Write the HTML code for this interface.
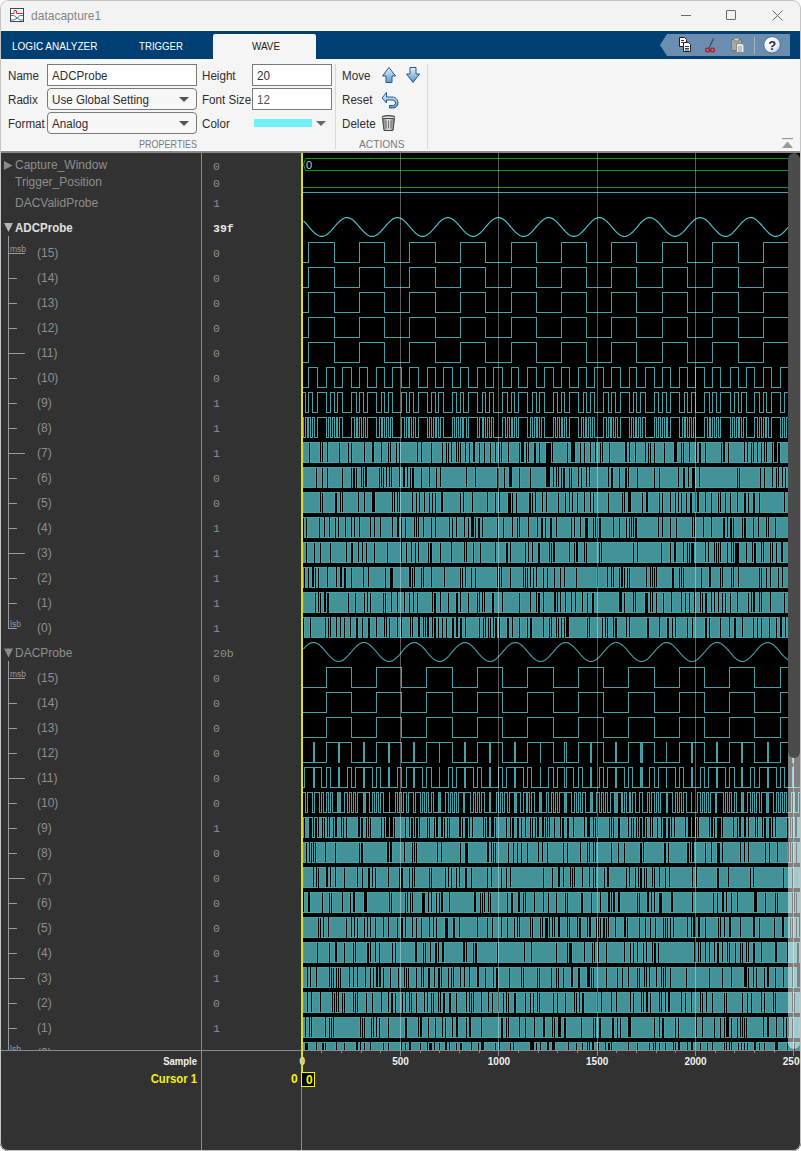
<!DOCTYPE html>
<html><head><meta charset="utf-8">
<style>
*{box-sizing:border-box;margin:0;padding:0}
html,body{width:801px;height:1151px;overflow:hidden;background:#ffffff}
body{position:relative;font-family:"Liberation Sans",sans-serif}
.a{position:absolute}
#win{position:absolute;left:0;top:0;width:801px;height:1151px;border-radius:8px;overflow:hidden;background:#f3f3f3}
#bd{position:absolute;left:0;top:0;width:801px;height:1151px;border:1px solid #c4c4c4;border-radius:8px}
.sx{transform:scaleX(0.93);transform-origin:0 0}
.t{position:absolute;white-space:nowrap;line-height:1}
.lbl{font-size:12.5px;color:#2e2e2e;transform:scaleX(0.93);transform-origin:0 0}
.box{position:absolute;background:#fff;border:1px solid #7a7a7a}
.dd{position:absolute;background:#f7f7f7;border:1px solid #7a7a7a;border-radius:4px}
.arr{position:absolute;width:0;height:0;border-left:5px solid transparent;border-right:5px solid transparent;border-top:5px solid #555}
.sig{font-size:12px;color:#8e8e8e}
.bit{font-size:12px;color:#8e8e8e}
.val{font-family:"Liberation Mono",monospace;font-size:11.5px;color:#8e8e8e}
</style></head><body>
<div id="win">
 <!-- title bar -->
 <svg class="a" style="left:10px;top:8px" width="15" height="14" viewBox="0 0 15 14">
  <rect x="0.5" y="0.5" width="13" height="13" fill="#fff" stroke="#444"/>
  <path d="M1 5.5H4V2.5H6.5V5.5H13" stroke="#d03a30" fill="none" stroke-width="1"/>
  <path d="M1 7.5H4L7 10L10 7.5H13M1 12H4L7 10L10 12H13" stroke="#3d7cc8" fill="none" stroke-width="1"/>
 </svg>
 <div class="t" style="left:31px;top:10px;font-size:12.8px;color:#858585;transform:scaleX(0.94);transform-origin:0 0">datacapture1</div>
 <div class="a" style="left:681px;top:15px;width:10px;height:1px;background:#6a6a6a"></div>
 <div class="a" style="left:726px;top:10px;width:10px;height:10px;border:1px solid #6a6a6a;border-radius:1px"></div>
 <svg class="a" style="left:772px;top:10px" width="11" height="11"><path d="M0.5 0.5L10.5 10.5M10.5 0.5L0.5 10.5" stroke="#6a6a6a" stroke-width="1"/></svg>

 <!-- tab strip -->
 <div class="a" style="left:0;top:30px;width:801px;height:1px;background:#fbfbfb"></div><div class="a" style="left:0;top:31px;width:801px;height:28px;background:#003f74"></div>
 <div class="t" style="left:12px;top:41px;font-size:11.5px;color:#fff;transform:scaleX(0.87);transform-origin:0 0">LOGIC ANALYZER</div>
 <div class="t" style="left:139px;top:41px;font-size:11.5px;color:#fff;transform:scaleX(0.84);transform-origin:0 0">TRIGGER</div>
 <div class="a" style="left:213px;top:34px;width:103px;height:25px;background:#f5f5f5;border-radius:2px 2px 0 0"></div>
 <div class="t" style="left:252px;top:41px;font-size:11.5px;color:#222;transform:scaleX(0.86);transform-origin:0 0">WAVE</div>
 <!-- quick access -->
 <svg class="a" style="left:659px;top:34px" width="132" height="22">
  <path d="M1 11L8 0H131V22H8Z" fill="#6a8db0"/>
  <g transform="translate(20,3)">
   <path d="M0.5 0.5H5.5L7.5 2.5V9.5H0.5Z" fill="#fff" stroke="#222"/>
   <path d="M4.5 5.5H9.5L11.5 7.5V14.5H4.5Z" fill="#fff" stroke="#222"/>
   <path d="M2 3.5H5M2 5.5H4M6 9.5H10M6 11.5H10M6 13H10" stroke="#222" stroke-width="0.9"/>
  </g>
  <g transform="translate(45,4)">
   <path d="M9.5 0.5L5 10" stroke="#444" stroke-width="1.2"/>
   <circle cx="3.5" cy="12" r="1.9" fill="none" stroke="#c0121e" stroke-width="1.3"/>
   <circle cx="8.5" cy="12" r="1.9" fill="none" stroke="#c0121e" stroke-width="1.3"/>
  </g>
  <g transform="translate(72,3)">
   <path d="M0.5 2.5H10.5V13.5H0.5Z" fill="#a8a8a8" stroke="#777"/>
   <path d="M3 1H8V4H3Z" fill="#ccc" stroke="#777" stroke-width="0.8"/>
   <path d="M5.5 6.5H11L13 8.5V15.5H5.5Z" fill="#e6e6e6" stroke="#888"/>
   <path d="M7 10H11M7 12H11M7 14H11" stroke="#888" stroke-width="0.8"/>
  </g>
  <rect x="95" y="3" width="1" height="17" fill="#adb3ba"/>
  <g transform="translate(104.6,2.4)">
   <defs><radialGradient id="hg" cx="0.35" cy="0.3" r="0.8"><stop offset="0" stop-color="#fff"/><stop offset="0.7" stop-color="#e8eef4"/><stop offset="1" stop-color="#9fb3c6"/></radialGradient></defs>
   <circle cx="8.5" cy="8.5" r="8.2" fill="url(#hg)" stroke="#3e5c7a" stroke-width="0.7"/>
   <text x="8.6" y="13.3" text-anchor="middle" font-family="Liberation Sans" font-weight="bold" font-size="13" fill="#1b2c44">?</text>
  </g>
 </svg>

 <!-- toolbar -->
 <div class="a" style="left:0;top:59px;width:801px;height:92px;background:#f5f5f5"></div>
 <div class="a" style="left:0;top:150px;width:801px;height:1px;background:#fff"></div>
 <div class="a" style="left:0;top:151px;width:801px;height:2px;background:#8a8a8a"></div>

 <div class="t lbl" style="left:8px;top:70px">Name</div>
 <div class="box" style="left:47px;top:64px;width:150px;height:22px"></div>
 <div class="t lbl" style="left:52px;top:70px">ADCProbe</div>
 <div class="t lbl" style="left:8px;top:94px">Radix</div>
 <div class="dd" style="left:47px;top:88px;width:150px;height:22px"></div>
 <div class="t lbl" style="left:52px;top:94px">Use Global Setting</div>
 <div class="arr" style="left:179px;top:97px"></div>
 <div class="t lbl" style="left:8px;top:118px">Format</div>
 <div class="dd" style="left:47px;top:112px;width:150px;height:22px"></div>
 <div class="t lbl" style="left:52px;top:118px">Analog</div>
 <div class="arr" style="left:179px;top:121px"></div>
 <div class="t" style="left:139px;top:139px;font-size:11px;color:#7a7a7a;transform:scaleX(0.82);transform-origin:0 0">PROPERTIES</div>

 <div class="t lbl" style="left:202px;top:70px">Height</div>
 <div class="box" style="left:252px;top:64px;width:80px;height:22px"></div>
 <div class="t lbl" style="left:257px;top:70px">20</div>
 <div class="t lbl" style="left:202px;top:94px">Font Size</div>
 <div class="box" style="left:252px;top:88px;width:80px;height:22px"></div>
 <div class="t lbl" style="left:257px;top:94px;color:#555">12</div>
 <div class="t lbl" style="left:202px;top:118px">Color</div>
 <div class="a" style="left:254px;top:119px;width:58px;height:8px;background:#6ef0fa"></div>
 <div class="arr" style="left:316px;top:121px;border-top-color:#666"></div>
 <div class="a" style="left:335px;top:64px;width:1px;height:85px;background:#d8d8d8"></div>
 <div class="t lbl" style="left:342px;top:70px">Move</div>
 <div class="t lbl" style="left:342px;top:94px">Reset</div>
 <div class="t lbl" style="left:342px;top:118px">Delete</div>
 <div class="t" style="left:359px;top:139px;font-size:11px;color:#7a7a7a;transform:scaleX(0.93);transform-origin:0 0">ACTIONS</div>
 <div class="a" style="left:427px;top:64px;width:1px;height:85px;background:#d8d8d8"></div>
 <svg class="a" style="left:378px;top:64px" width="48" height="70">
  <defs><linearGradient id="ab" x1="0" y1="0" x2="0" y2="1"><stop offset="0" stop-color="#e6f2fb"/><stop offset="1" stop-color="#5b9ccd"/></linearGradient>
  <linearGradient id="abd" x1="0" y1="0" x2="0" y2="1"><stop offset="0" stop-color="#eaf4fc"/><stop offset="1" stop-color="#4f8fc4"/></linearGradient>
  <linearGradient id="tr" x1="0" y1="0" x2="1" y2="0"><stop offset="0" stop-color="#777"/><stop offset="0.5" stop-color="#e8e8e8"/><stop offset="1" stop-color="#777"/></linearGradient></defs>
  <path d="M11 3.5L17.5 12H14V18.5H8V12H4.5Z" fill="url(#ab)" stroke="#24598a" stroke-width="1"/>
  <path d="M32 3.5H38V10H41.5L35 18.5L28.5 10H32Z" fill="url(#abd)" stroke="#24598a" stroke-width="1"/>
  <path d="M8.5 28.5L4 34L8.5 39V36H14C17 36 17.5 38 17.5 39C17.5 40.5 16.5 41.5 14.5 41.5H11.5V44H14.5C18 44 20 42 20 39C20 35.5 17.5 33 14 33H8.5Z" fill="url(#ab)" stroke="#24598a" stroke-width="1"/>
  <path d="M4 53.5C5 51 16 51 17 53.5" fill="#ddd" stroke="#444" stroke-width="1.2"/>
  <path d="M4.5 54.5H16.5L15 66.5H6Z" fill="url(#tr)" stroke="#444" stroke-width="1"/>
  <path d="M8 56.5V64.5M10.5 56.5V64.5M13 56.5V64.5" stroke="#555" stroke-width="0.8"/>
 </svg>
 <svg class="a" style="left:781px;top:138px" width="14" height="12"><rect x="1" y="0" width="11" height="1.2" fill="#9a9a9a"/><path d="M1 10L6.5 3.5L12 10Z" fill="#9a9a9a"/></svg>

 <!-- dark body -->
 <div class="a" style="left:0;top:153px;width:801px;height:998px;background:#323232"></div>
 <div class="a" style="left:201px;top:153px;width:1px;height:997px;background:#8c8c8c"></div>
 <div class="a" style="left:0;top:1050px;width:801px;height:1px;background:#8a8a8a"></div>
 <div class="a" style="left:301px;top:1086px;width:1px;height:64px;background:#8c8c8c"></div>

 <svg width="801" height="1151" style="position:absolute;left:0;top:0">
<defs><clipPath id="wc"><rect x="301" y="153" width="499" height="897"/></clipPath></defs><g clip-path="url(#wc)">
<rect x="301" y="153" width="499" height="897" fill="#000"/>
<path d="M303.5 164.5L305.5 158.5H800M303.5 164.5L305.5 170.5H800" stroke="#00a000" fill="none"/>
<text x="306" y="168.5" font-family="Liberation Sans" font-size="11" fill="#c8c8c8">0</text>
<path d="M303 187.5H800" stroke="#00a000"/>
<path d="M303 192.5H800" stroke="#45a2a8"/>
<polyline points="303.5,221.0 304.5,221.9 305.5,222.9 306.5,224.0 307.5,225.1 308.5,226.5 309.5,227.7 310.5,228.8 311.5,229.9 312.5,231.0 313.5,231.9 314.5,233.0 315.5,233.7 316.5,234.5 317.5,235.1 318.5,235.7 319.5,236.0 320.5,236.3 321.5,236.4 322.5,236.4 323.5,236.1 324.5,235.8 325.5,235.3 326.5,234.8 327.5,234.1 328.5,233.2 329.5,232.4 330.5,231.4 331.5,230.3 332.5,229.0 333.5,227.8 334.5,226.7 335.5,225.6 336.5,224.4 337.5,223.3 338.5,222.3 339.5,221.3 340.5,220.5 341.5,219.8 342.5,219.0 343.5,218.5 344.5,218.0 345.5,217.7 346.5,217.6 347.5,217.6 348.5,217.8 349.5,218.1 350.5,218.5 351.5,219.1 352.5,219.8 353.5,220.5 354.5,221.4 355.5,222.5 356.5,223.7 357.5,224.7 358.5,225.9 359.5,227.0 360.5,228.2 361.5,229.3 362.5,230.4 363.5,231.5 364.5,232.4 365.5,233.3 366.5,234.1 367.5,235.0 368.5,235.5 369.5,236.0 370.5,236.3 371.5,236.4 372.5,236.4 373.5,236.3 374.5,236.0 375.5,235.6 376.5,235.1 377.5,234.4 378.5,233.7 379.5,232.6 380.5,231.7 381.5,230.7 382.5,229.5 383.5,228.5 384.5,227.3 385.5,226.2 386.5,225.0 387.5,223.9 388.5,222.9 389.5,221.9 390.5,220.9 391.5,220.0 392.5,219.3 393.5,218.6 394.5,218.2 395.5,217.8 396.5,217.7 397.5,217.6 398.5,217.7 399.5,218.0 400.5,218.4 401.5,218.8 402.5,219.4 403.5,220.2 404.5,221.1 405.5,222.0 406.5,223.1 407.5,224.1 408.5,225.3 409.5,226.3 410.5,227.6 411.5,228.7 412.5,229.9 413.5,230.9 414.5,232.1 415.5,233.0 416.5,233.9 417.5,234.6 418.5,235.2 419.5,235.7 420.5,236.1 421.5,236.3 422.5,236.4 423.5,236.4 424.5,236.2 425.5,235.8 426.5,235.3 427.5,234.7 428.5,233.9 429.5,233.1 430.5,232.2 431.5,231.2 432.5,230.1 433.5,229.1 434.5,227.9 435.5,226.7 436.5,225.5 437.5,224.5 438.5,223.2 439.5,222.1 440.5,221.2 441.5,220.3 442.5,219.6 443.5,218.9 444.5,218.4 445.5,218.0 446.5,217.8 447.5,217.6 448.5,217.7 449.5,217.8 450.5,218.2 451.5,218.6 452.5,219.2 453.5,219.8 454.5,220.7 455.5,221.6 456.5,222.6 457.5,223.6 458.5,224.7 459.5,225.8 460.5,227.0 461.5,228.1 462.5,229.4 463.5,230.6 464.5,231.6 465.5,232.6 466.5,233.4 467.5,234.3 468.5,234.9 469.5,235.5 470.5,235.9 471.5,236.2 472.5,236.4 473.5,236.4 474.5,236.3 475.5,236.0 476.5,235.5 477.5,235.0 478.5,234.3 479.5,233.6 480.5,232.7 481.5,231.7 482.5,230.7 483.5,229.7 484.5,228.5 485.5,227.1 486.5,226.0 487.5,224.8 488.5,223.7 489.5,222.7 490.5,221.7 491.5,220.7 492.5,219.9 493.5,219.3 494.5,218.7 495.5,218.2 496.5,217.8 497.5,217.7 498.5,217.6 499.5,217.8 500.5,217.9 501.5,218.4 502.5,218.9 503.5,219.5 504.5,220.2 505.5,221.0 506.5,222.1 507.5,223.0 508.5,224.1 509.5,225.5 510.5,226.6 511.5,227.8 512.5,228.9 513.5,230.1 514.5,231.1 515.5,232.1 516.5,233.0 517.5,233.9 518.5,234.6 519.5,235.2 520.5,235.7 521.5,236.1 522.5,236.4 523.5,236.4 524.5,236.4 525.5,236.1 526.5,235.8 527.5,235.4 528.5,234.7 529.5,234.0 530.5,233.1 531.5,232.2 532.5,231.1 533.5,229.9 534.5,228.9 535.5,227.7 536.5,226.5 537.5,225.4 538.5,224.3 539.5,223.2 540.5,222.2 541.5,221.3 542.5,220.4 543.5,219.6 544.5,218.9 545.5,218.3 546.5,217.9 547.5,217.7 548.5,217.6 549.5,217.6 550.5,217.8 551.5,218.1 552.5,218.6 553.5,219.1 554.5,219.9 555.5,220.6 556.5,221.7 557.5,222.7 558.5,223.8 559.5,224.9 560.5,226.0 561.5,227.2 562.5,228.3 563.5,229.4 564.5,230.5 565.5,231.6 566.5,232.5 567.5,233.5 568.5,234.4 569.5,235.0 570.5,235.6 571.5,236.0 572.5,236.2 573.5,236.4 574.5,236.4 575.5,236.2 576.5,236.0 577.5,235.5 578.5,235.0 579.5,234.4 580.5,233.4 581.5,232.5 582.5,231.6 583.5,230.5 584.5,229.5 585.5,228.3 586.5,227.2 587.5,225.9 588.5,224.9 589.5,223.8 590.5,222.8 591.5,221.6 592.5,220.6 593.5,219.9 594.5,219.1 595.5,218.5 596.5,218.1 597.5,217.8 598.5,217.6 599.5,217.6 600.5,217.7 601.5,217.9 602.5,218.3 603.5,218.9 604.5,219.6 605.5,220.4 606.5,221.3 607.5,222.2 608.5,223.2 609.5,224.3 610.5,225.4 611.5,226.6 612.5,227.7 613.5,228.8 614.5,230.0 615.5,231.2 616.5,232.3 617.5,233.1 618.5,234.0 619.5,234.7 620.5,235.3 621.5,235.8 622.5,236.1 623.5,236.3 624.5,236.5 625.5,236.4 626.5,236.1 627.5,235.7 628.5,235.2 629.5,234.6 630.5,233.9 631.5,233.0 632.5,232.2 633.5,231.1 634.5,230.1 635.5,228.8 636.5,227.8 637.5,226.6 638.5,225.5 639.5,224.1 640.5,223.0 641.5,222.0 642.5,221.1 643.5,220.3 644.5,219.5 645.5,218.8 646.5,218.3 647.5,217.9 648.5,217.7 649.5,217.6 650.5,217.6 651.5,217.9 652.5,218.2 653.5,218.7 654.5,219.2 655.5,220.0 656.5,220.7 657.5,221.7 658.5,222.6 659.5,223.7 660.5,224.8 661.5,226.0 662.5,227.3 663.5,228.5 664.5,229.6 665.5,230.6 666.5,231.8 667.5,232.7 668.5,233.6 669.5,234.3 670.5,235.0 671.5,235.5 672.5,236.0 673.5,236.2 674.5,236.4 675.5,236.4 676.5,236.2 677.5,235.9 678.5,235.5 679.5,234.9 680.5,234.2 681.5,233.4 682.5,232.6 683.5,231.6 684.5,230.6 685.5,229.5 686.5,228.1 687.5,227.0 688.5,225.8 689.5,224.7 690.5,223.6 691.5,222.5 692.5,221.6 693.5,220.7 694.5,219.8 695.5,219.2 696.5,218.6 697.5,218.1 698.5,217.8 699.5,217.6 700.5,217.6 701.5,217.8 702.5,218.0 703.5,218.4 704.5,219.0 705.5,219.6 706.5,220.3 707.5,221.2 708.5,222.1 709.5,223.3 710.5,224.5 711.5,225.6 712.5,226.8 713.5,227.9 714.5,229.1 715.5,230.1 716.5,231.2 717.5,232.2 718.5,233.2 719.5,233.9 720.5,234.7 721.5,235.4 722.5,235.8 723.5,236.2 724.5,236.3 725.5,236.4 726.5,236.4 727.5,236.1 728.5,235.7 729.5,235.2 730.5,234.7 731.5,233.9 732.5,233.1 733.5,231.9 734.5,230.9 735.5,229.8 736.5,228.7 737.5,227.6 738.5,226.4 739.5,225.3 740.5,224.1 741.5,223.1 742.5,222.0 743.5,221.1 744.5,220.3 745.5,219.4 746.5,218.8 747.5,218.3 748.5,218.0 749.5,217.7 750.5,217.6 751.5,217.6 752.5,217.8 753.5,218.1 754.5,218.6 755.5,219.3 756.5,219.9 757.5,220.9 758.5,221.8 759.5,222.8 760.5,224.0 761.5,225.0 762.5,226.2 763.5,227.3 764.5,228.5 765.5,229.6 766.5,230.7 767.5,231.7 768.5,232.8 769.5,233.7 770.5,234.4 771.5,235.1 772.5,235.6 773.5,236.0 774.5,236.3 775.5,236.4 776.5,236.4 777.5,236.2 778.5,236.0 779.5,235.5 780.5,234.8 781.5,234.2 782.5,233.3 783.5,232.5 784.5,231.4 785.5,230.4 786.5,229.2 787.5,228.1 788.5,227.0 789.5,225.9 790.5,224.7 791.5,223.6 792.5,222.4 793.5,221.4 794.5,220.6 795.5,219.7 796.5,219.1 797.5,218.5 798.5,218.1 799.5,217.8" stroke="#4cc0cb" fill="none" stroke-width="1.2"/>
<path fill="#45a2a8" d="M303 262h5v1h-5zM308 242h1v1h-1zM308 262h1v1h-1zM308 243h1v19h-1zM309 242h25v1h-25zM334 242h1v1h-1zM334 262h1v1h-1zM334 243h1v19h-1zM335 262h24v1h-24zM359 242h1v1h-1zM359 262h1v1h-1zM359 243h1v19h-1zM360 242h24v1h-24zM384 242h1v1h-1zM384 262h1v1h-1zM384 243h1v19h-1zM385 262h24v1h-24zM409 242h1v1h-1zM409 262h1v1h-1zM409 243h1v19h-1zM410 242h25v1h-25zM435 242h1v1h-1zM435 262h1v1h-1zM435 243h1v19h-1zM436 262h24v1h-24zM460 242h1v1h-1zM460 262h1v1h-1zM460 243h1v19h-1zM461 242h24v1h-24zM485 242h1v1h-1zM485 262h1v1h-1zM485 243h1v19h-1zM486 262h25v1h-25zM511 242h1v1h-1zM511 262h1v1h-1zM511 243h1v19h-1zM512 242h24v1h-24zM536 242h1v1h-1zM536 262h1v1h-1zM536 243h1v19h-1zM537 262h24v1h-24zM561 242h1v1h-1zM561 262h1v1h-1zM561 243h1v19h-1zM562 242h24v1h-24zM586 242h1v1h-1zM586 262h1v1h-1zM586 243h1v19h-1zM587 262h24v1h-24zM611 242h1v1h-1zM611 262h1v1h-1zM611 243h1v19h-1zM612 242h24v1h-24zM636 242h1v1h-1zM636 262h1v1h-1zM636 243h1v19h-1zM637 262h25v1h-25zM662 242h1v1h-1zM662 262h1v1h-1zM662 243h1v19h-1zM663 242h24v1h-24zM687 242h1v1h-1zM687 262h1v1h-1zM687 243h1v19h-1zM688 262h24v1h-24zM712 242h1v1h-1zM712 262h1v1h-1zM712 243h1v19h-1zM713 242h25v1h-25zM738 242h1v1h-1zM738 262h1v1h-1zM738 243h1v19h-1zM739 262h24v1h-24zM763 242h1v1h-1zM763 262h1v1h-1zM763 243h1v19h-1zM764 242h24v1h-24zM788 242h1v1h-1zM788 262h1v1h-1zM788 243h1v19h-1zM789 262h11v1h-11z"/>
<path fill="#45a2a8" d="M303 287h5v1h-5zM308 267h1v1h-1zM308 287h1v1h-1zM308 268h1v19h-1zM309 267h25v1h-25zM334 267h1v1h-1zM334 287h1v1h-1zM334 268h1v19h-1zM335 287h24v1h-24zM359 267h1v1h-1zM359 287h1v1h-1zM359 268h1v19h-1zM360 267h24v1h-24zM384 267h1v1h-1zM384 287h1v1h-1zM384 268h1v19h-1zM385 287h24v1h-24zM409 267h1v1h-1zM409 287h1v1h-1zM409 268h1v19h-1zM410 267h25v1h-25zM435 267h1v1h-1zM435 287h1v1h-1zM435 268h1v19h-1zM436 287h24v1h-24zM460 267h1v1h-1zM460 287h1v1h-1zM460 268h1v19h-1zM461 267h24v1h-24zM485 267h1v1h-1zM485 287h1v1h-1zM485 268h1v19h-1zM486 287h25v1h-25zM511 267h1v1h-1zM511 287h1v1h-1zM511 268h1v19h-1zM512 267h24v1h-24zM536 267h1v1h-1zM536 287h1v1h-1zM536 268h1v19h-1zM537 287h24v1h-24zM561 267h1v1h-1zM561 287h1v1h-1zM561 268h1v19h-1zM562 267h24v1h-24zM586 267h1v1h-1zM586 287h1v1h-1zM586 268h1v19h-1zM587 287h24v1h-24zM611 267h1v1h-1zM611 287h1v1h-1zM611 268h1v19h-1zM612 267h24v1h-24zM636 267h1v1h-1zM636 287h1v1h-1zM636 268h1v19h-1zM637 287h25v1h-25zM662 267h1v1h-1zM662 287h1v1h-1zM662 268h1v19h-1zM663 267h24v1h-24zM687 267h1v1h-1zM687 287h1v1h-1zM687 268h1v19h-1zM688 287h24v1h-24zM712 267h1v1h-1zM712 287h1v1h-1zM712 268h1v19h-1zM713 267h25v1h-25zM738 267h1v1h-1zM738 287h1v1h-1zM738 268h1v19h-1zM739 287h24v1h-24zM763 267h1v1h-1zM763 287h1v1h-1zM763 268h1v19h-1zM764 267h24v1h-24zM788 267h1v1h-1zM788 287h1v1h-1zM788 268h1v19h-1zM789 287h11v1h-11z"/>
<path fill="#45a2a8" d="M303 312h5v1h-5zM308 292h1v1h-1zM308 312h1v1h-1zM308 293h1v19h-1zM309 292h25v1h-25zM334 292h1v1h-1zM334 312h1v1h-1zM334 293h1v19h-1zM335 312h24v1h-24zM359 292h1v1h-1zM359 312h1v1h-1zM359 293h1v19h-1zM360 292h24v1h-24zM384 292h1v1h-1zM384 312h1v1h-1zM384 293h1v19h-1zM385 312h24v1h-24zM409 292h1v1h-1zM409 312h1v1h-1zM409 293h1v19h-1zM410 292h25v1h-25zM435 292h1v1h-1zM435 312h1v1h-1zM435 293h1v19h-1zM436 312h24v1h-24zM460 292h1v1h-1zM460 312h1v1h-1zM460 293h1v19h-1zM461 292h24v1h-24zM485 292h1v1h-1zM485 312h1v1h-1zM485 293h1v19h-1zM486 312h25v1h-25zM511 292h1v1h-1zM511 312h1v1h-1zM511 293h1v19h-1zM512 292h24v1h-24zM536 292h1v1h-1zM536 312h1v1h-1zM536 293h1v19h-1zM537 312h24v1h-24zM561 292h1v1h-1zM561 312h1v1h-1zM561 293h1v19h-1zM562 292h24v1h-24zM586 292h1v1h-1zM586 312h1v1h-1zM586 293h1v19h-1zM587 312h24v1h-24zM611 292h1v1h-1zM611 312h1v1h-1zM611 293h1v19h-1zM612 292h24v1h-24zM636 292h1v1h-1zM636 312h1v1h-1zM636 293h1v19h-1zM637 312h25v1h-25zM662 292h1v1h-1zM662 312h1v1h-1zM662 293h1v19h-1zM663 292h24v1h-24zM687 292h1v1h-1zM687 312h1v1h-1zM687 293h1v19h-1zM688 312h24v1h-24zM712 292h1v1h-1zM712 312h1v1h-1zM712 293h1v19h-1zM713 292h25v1h-25zM738 292h1v1h-1zM738 312h1v1h-1zM738 293h1v19h-1zM739 312h24v1h-24zM763 292h1v1h-1zM763 312h1v1h-1zM763 293h1v19h-1zM764 292h24v1h-24zM788 292h1v1h-1zM788 312h1v1h-1zM788 293h1v19h-1zM789 312h11v1h-11z"/>
<path fill="#45a2a8" d="M303 337h5v1h-5zM308 317h1v1h-1zM308 337h1v1h-1zM308 318h1v19h-1zM309 317h25v1h-25zM334 317h1v1h-1zM334 337h1v1h-1zM334 318h1v19h-1zM335 337h24v1h-24zM359 317h1v1h-1zM359 337h1v1h-1zM359 318h1v19h-1zM360 317h24v1h-24zM384 317h1v1h-1zM384 337h1v1h-1zM384 318h1v19h-1zM385 337h24v1h-24zM409 317h1v1h-1zM409 337h1v1h-1zM409 318h1v19h-1zM410 317h25v1h-25zM435 317h1v1h-1zM435 337h1v1h-1zM435 318h1v19h-1zM436 337h24v1h-24zM460 317h1v1h-1zM460 337h1v1h-1zM460 318h1v19h-1zM461 317h24v1h-24zM485 317h1v1h-1zM485 337h1v1h-1zM485 318h1v19h-1zM486 337h25v1h-25zM511 317h1v1h-1zM511 337h1v1h-1zM511 318h1v19h-1zM512 317h24v1h-24zM536 317h1v1h-1zM536 337h1v1h-1zM536 318h1v19h-1zM537 337h24v1h-24zM561 317h1v1h-1zM561 337h1v1h-1zM561 318h1v19h-1zM562 317h24v1h-24zM586 317h1v1h-1zM586 337h1v1h-1zM586 318h1v19h-1zM587 337h24v1h-24zM611 317h1v1h-1zM611 337h1v1h-1zM611 318h1v19h-1zM612 317h24v1h-24zM636 317h1v1h-1zM636 337h1v1h-1zM636 318h1v19h-1zM637 337h25v1h-25zM662 317h1v1h-1zM662 337h1v1h-1zM662 318h1v19h-1zM663 317h24v1h-24zM687 317h1v1h-1zM687 337h1v1h-1zM687 318h1v19h-1zM688 337h24v1h-24zM712 317h1v1h-1zM712 337h1v1h-1zM712 318h1v19h-1zM713 317h25v1h-25zM738 317h1v1h-1zM738 337h1v1h-1zM738 318h1v19h-1zM739 337h24v1h-24zM763 317h1v1h-1zM763 337h1v1h-1zM763 318h1v19h-1zM764 317h24v1h-24zM788 317h1v1h-1zM788 337h1v1h-1zM788 318h1v19h-1zM789 337h11v1h-11z"/>
<path fill="#45a2a8" d="M303 362h5v1h-5zM308 342h1v1h-1zM308 362h1v1h-1zM308 343h1v19h-1zM309 342h25v1h-25zM334 342h1v1h-1zM334 362h1v1h-1zM334 343h1v19h-1zM335 362h24v1h-24zM359 342h1v1h-1zM359 362h1v1h-1zM359 343h1v19h-1zM360 342h24v1h-24zM384 342h1v1h-1zM384 362h1v1h-1zM384 343h1v19h-1zM385 362h24v1h-24zM409 342h1v1h-1zM409 362h1v1h-1zM409 343h1v19h-1zM410 342h25v1h-25zM435 342h1v1h-1zM435 362h1v1h-1zM435 343h1v19h-1zM436 362h24v1h-24zM460 342h1v1h-1zM460 362h1v1h-1zM460 343h1v19h-1zM461 342h24v1h-24zM485 342h1v1h-1zM485 362h1v1h-1zM485 343h1v19h-1zM486 362h25v1h-25zM511 342h1v1h-1zM511 362h1v1h-1zM511 343h1v19h-1zM512 342h24v1h-24zM536 342h1v1h-1zM536 362h1v1h-1zM536 343h1v19h-1zM537 362h24v1h-24zM561 342h1v1h-1zM561 362h1v1h-1zM561 343h1v19h-1zM562 342h24v1h-24zM586 342h1v1h-1zM586 362h1v1h-1zM586 343h1v19h-1zM587 362h24v1h-24zM611 342h1v1h-1zM611 362h1v1h-1zM611 343h1v19h-1zM612 342h24v1h-24zM636 342h1v1h-1zM636 362h1v1h-1zM636 343h1v19h-1zM637 362h25v1h-25zM662 342h1v1h-1zM662 362h1v1h-1zM662 343h1v19h-1zM663 342h24v1h-24zM687 342h1v1h-1zM687 362h1v1h-1zM687 343h1v19h-1zM688 362h24v1h-24zM712 342h1v1h-1zM712 362h1v1h-1zM712 343h1v19h-1zM713 342h25v1h-25zM738 342h1v1h-1zM738 362h1v1h-1zM738 343h1v19h-1zM739 362h24v1h-24zM763 342h1v1h-1zM763 362h1v1h-1zM763 343h1v19h-1zM764 342h24v1h-24zM788 342h1v1h-1zM788 362h1v1h-1zM788 343h1v19h-1zM789 362h11v1h-11z"/>
<path fill="#45a2a8" d="M303 387h5v1h-5zM308 367h1v1h-1zM308 387h1v1h-1zM308 368h1v19h-1zM309 367h8v1h-8zM317 367h1v1h-1zM317 387h1v1h-1zM317 368h1v19h-1zM318 387h8v1h-8zM326 367h1v1h-1zM326 387h1v1h-1zM326 368h1v19h-1zM327 367h7v1h-7zM334 367h1v1h-1zM334 387h1v1h-1zM334 368h1v19h-1zM335 387h7v1h-7zM342 367h1v1h-1zM342 387h1v1h-1zM342 368h1v19h-1zM343 367h8v1h-8zM351 367h1v1h-1zM351 387h1v1h-1zM351 368h1v19h-1zM352 387h7v1h-7zM359 367h1v1h-1zM359 387h1v1h-1zM359 368h1v19h-1zM360 367h7v1h-7zM367 367h1v1h-1zM367 387h1v1h-1zM367 368h1v19h-1zM368 387h8v1h-8zM376 367h1v1h-1zM376 387h1v1h-1zM376 368h1v19h-1zM377 367h7v1h-7zM384 367h1v1h-1zM384 387h1v1h-1zM384 368h1v19h-1zM385 387h7v1h-7zM392 367h1v1h-1zM392 387h1v1h-1zM392 368h1v19h-1zM393 367h8v1h-8zM401 367h1v1h-1zM401 387h1v1h-1zM401 368h1v19h-1zM402 387h7v1h-7zM409 367h1v1h-1zM409 387h1v1h-1zM409 368h1v19h-1zM410 367h8v1h-8zM418 367h1v1h-1zM418 387h1v1h-1zM418 368h1v19h-1zM419 387h8v1h-8zM427 367h1v1h-1zM427 387h1v1h-1zM427 368h1v19h-1zM428 367h7v1h-7zM435 367h1v1h-1zM435 387h1v1h-1zM435 368h1v19h-1zM436 387h7v1h-7zM443 367h1v1h-1zM443 387h1v1h-1zM443 368h1v19h-1zM444 367h8v1h-8zM452 367h1v1h-1zM452 387h1v1h-1zM452 368h1v19h-1zM453 387h7v1h-7zM460 367h1v1h-1zM460 387h1v1h-1zM460 368h1v19h-1zM461 367h7v1h-7zM468 367h1v1h-1zM468 387h1v1h-1zM468 368h1v19h-1zM469 387h8v1h-8zM477 367h1v1h-1zM477 387h1v1h-1zM477 368h1v19h-1zM478 367h7v1h-7zM485 367h1v1h-1zM485 387h1v1h-1zM485 368h1v19h-1zM486 387h7v1h-7zM493 367h1v1h-1zM493 387h1v1h-1zM493 368h1v19h-1zM494 367h8v1h-8zM502 367h1v1h-1zM502 387h1v1h-1zM502 368h1v19h-1zM503 387h8v1h-8zM511 367h1v1h-1zM511 387h1v1h-1zM511 368h1v19h-1zM512 367h6v1h-6zM518 367h1v1h-1zM518 387h1v1h-1zM518 368h1v19h-1zM519 387h8v1h-8zM527 367h1v1h-1zM527 387h1v1h-1zM527 368h1v19h-1zM528 367h8v1h-8zM536 367h1v1h-1zM536 387h1v1h-1zM536 368h1v19h-1zM537 387h7v1h-7zM544 367h1v1h-1zM544 387h1v1h-1zM544 368h1v19h-1zM545 367h8v1h-8zM553 367h1v1h-1zM553 387h1v1h-1zM553 368h1v19h-1zM554 387h7v1h-7zM561 367h1v1h-1zM561 387h1v1h-1zM561 368h1v19h-1zM562 367h7v1h-7zM569 367h1v1h-1zM569 387h1v1h-1zM569 368h1v19h-1zM570 387h8v1h-8zM578 367h1v1h-1zM578 387h1v1h-1zM578 368h1v19h-1zM579 367h7v1h-7zM586 367h1v1h-1zM586 387h1v1h-1zM586 368h1v19h-1zM587 387h7v1h-7zM594 367h1v1h-1zM594 387h1v1h-1zM594 368h1v19h-1zM595 367h8v1h-8zM603 367h1v1h-1zM603 387h1v1h-1zM603 368h1v19h-1zM604 387h7v1h-7zM611 367h1v1h-1zM611 387h1v1h-1zM611 368h1v19h-1zM612 367h8v1h-8zM620 367h1v1h-1zM620 387h1v1h-1zM620 368h1v19h-1zM621 387h8v1h-8zM629 367h1v1h-1zM629 387h1v1h-1zM629 368h1v19h-1zM630 367h6v1h-6zM636 367h1v1h-1zM636 387h1v1h-1zM636 368h1v19h-1zM637 387h8v1h-8zM645 367h1v1h-1zM645 387h1v1h-1zM645 368h1v19h-1zM646 367h8v1h-8zM654 367h1v1h-1zM654 387h1v1h-1zM654 368h1v19h-1zM655 387h7v1h-7zM662 367h1v1h-1zM662 387h1v1h-1zM662 368h1v19h-1zM663 367h7v1h-7zM670 367h1v1h-1zM670 387h1v1h-1zM670 368h1v19h-1zM671 387h8v1h-8zM679 367h1v1h-1zM679 387h1v1h-1zM679 368h1v19h-1zM680 367h7v1h-7zM687 367h1v1h-1zM687 387h1v1h-1zM687 368h1v19h-1zM688 387h7v1h-7zM695 367h1v1h-1zM695 387h1v1h-1zM695 368h1v19h-1zM696 367h8v1h-8zM704 367h1v1h-1zM704 387h1v1h-1zM704 368h1v19h-1zM705 387h7v1h-7zM712 367h1v1h-1zM712 387h1v1h-1zM712 368h1v19h-1zM713 367h7v1h-7zM720 367h1v1h-1zM720 387h1v1h-1zM720 368h1v19h-1zM721 387h9v1h-9zM730 367h1v1h-1zM730 387h1v1h-1zM730 368h1v19h-1zM731 367h7v1h-7zM738 367h1v1h-1zM738 387h1v1h-1zM738 368h1v19h-1zM739 387h7v1h-7zM746 367h1v1h-1zM746 387h1v1h-1zM746 368h1v19h-1zM747 367h7v1h-7zM754 367h1v1h-1zM754 387h1v1h-1zM754 368h1v19h-1zM755 387h8v1h-8zM763 367h1v1h-1zM763 387h1v1h-1zM763 368h1v19h-1zM764 367h7v1h-7zM771 367h1v1h-1zM771 387h1v1h-1zM771 368h1v19h-1zM772 387h8v1h-8zM780 367h1v1h-1zM780 387h1v1h-1zM780 368h1v19h-1zM781 367h7v1h-7zM788 367h1v1h-1zM788 387h1v1h-1zM788 368h1v19h-1zM789 387h7v1h-7zM796 367h1v1h-1zM796 387h1v1h-1zM796 368h1v19h-1zM797 367h3v1h-3z"/>
<path fill="#45a2a8" d="M303 392h2v1h-2zM305 392h1v1h-1zM305 412h1v1h-1zM305 393h1v19h-1zM306 412h2v1h-2zM308 392h1v1h-1zM308 412h1v1h-1zM308 393h1v19h-1zM309 392h3v1h-3zM312 392h1v1h-1zM312 412h1v1h-1zM312 393h1v19h-1zM313 412h4v1h-4zM317 392h1v1h-1zM317 412h1v1h-1zM317 393h1v19h-1zM318 392h8v1h-8zM326 392h1v1h-1zM326 412h1v1h-1zM326 393h1v19h-1zM327 412h3v1h-3zM330 392h1v1h-1zM330 412h1v1h-1zM330 393h1v19h-1zM331 392h3v1h-3zM334 392h1v1h-1zM334 412h1v1h-1zM334 393h1v19h-1zM335 412h2v1h-2zM337 392h1v1h-1zM337 412h1v1h-1zM337 393h1v19h-1zM338 392h4v1h-4zM342 392h1v1h-1zM342 412h1v1h-1zM342 393h1v19h-1zM343 412h8v1h-8zM351 392h1v1h-1zM351 412h1v1h-1zM351 393h1v19h-1zM352 392h4v1h-4zM356 392h1v1h-1zM356 412h1v1h-1zM356 393h1v19h-1zM357 412h2v1h-2zM359 392h1v1h-1zM359 412h1v1h-1zM359 393h1v19h-1zM360 392h3v1h-3zM363 392h1v1h-1zM363 412h1v1h-1zM363 393h1v19h-1zM364 412h3v1h-3zM367 392h1v1h-1zM367 412h1v1h-1zM367 393h1v19h-1zM368 392h8v1h-8zM376 392h1v1h-1zM376 412h1v1h-1zM376 393h1v19h-1zM377 412h4v1h-4zM381 392h1v1h-1zM381 412h1v1h-1zM381 393h1v19h-1zM382 392h2v1h-2zM384 392h1v1h-1zM384 412h1v1h-1zM384 393h1v19h-1zM385 412h3v1h-3zM388 392h1v1h-1zM388 412h1v1h-1zM388 393h1v19h-1zM389 392h3v1h-3zM392 392h1v1h-1zM392 412h1v1h-1zM392 393h1v19h-1zM393 412h8v1h-8zM401 392h1v1h-1zM401 412h1v1h-1zM401 393h1v19h-1zM402 392h4v1h-4zM406 392h1v1h-1zM406 412h1v1h-1zM406 393h1v19h-1zM407 412h2v1h-2zM409 392h1v1h-1zM409 412h1v1h-1zM409 393h1v19h-1zM410 392h3v1h-3zM413 392h1v1h-1zM413 412h1v1h-1zM413 393h1v19h-1zM414 412h4v1h-4zM418 392h1v1h-1zM418 412h1v1h-1zM418 393h1v19h-1zM419 392h8v1h-8zM427 392h1v1h-1zM427 412h1v1h-1zM427 393h1v19h-1zM428 412h3v1h-3zM431 392h1v1h-1zM431 412h1v1h-1zM431 393h1v19h-1zM432 392h3v1h-3zM435 392h1v1h-1zM435 412h1v1h-1zM435 393h1v19h-1zM436 412h2v1h-2zM438 392h1v1h-1zM438 412h1v1h-1zM438 393h1v19h-1zM439 392h4v1h-4zM443 392h1v1h-1zM443 412h1v1h-1zM443 393h1v19h-1zM444 412h8v1h-8zM452 392h1v1h-1zM452 412h1v1h-1zM452 393h1v19h-1zM453 392h3v1h-3zM456 392h1v1h-1zM456 412h1v1h-1zM456 393h1v19h-1zM457 412h3v1h-3zM460 392h1v1h-1zM460 412h1v1h-1zM460 393h1v19h-1zM461 392h2v1h-2zM463 392h1v1h-1zM463 412h1v1h-1zM463 393h1v19h-1zM464 412h4v1h-4zM468 392h1v1h-1zM468 412h1v1h-1zM468 393h1v19h-1zM469 392h8v1h-8zM477 392h1v1h-1zM477 412h1v1h-1zM477 393h1v19h-1zM478 412h4v1h-4zM482 392h1v1h-1zM482 412h1v1h-1zM482 393h1v19h-1zM483 392h2v1h-2zM485 392h1v1h-1zM485 412h1v1h-1zM485 393h1v19h-1zM486 412h3v1h-3zM489 392h1v1h-1zM489 412h1v1h-1zM489 393h1v19h-1zM490 392h3v1h-3zM493 392h1v1h-1zM493 412h1v1h-1zM493 393h1v19h-1zM494 412h8v1h-8zM502 392h1v1h-1zM502 412h1v1h-1zM502 393h1v19h-1zM503 392h4v1h-4zM507 392h1v1h-1zM507 412h1v1h-1zM507 393h1v19h-1zM508 412h3v1h-3zM511 392h1v1h-1zM511 412h1v1h-1zM511 393h1v19h-1zM512 392h2v1h-2zM514 392h1v1h-1zM514 412h1v1h-1zM514 393h1v19h-1zM515 412h3v1h-3zM518 392h1v1h-1zM518 412h1v1h-1zM518 393h1v19h-1zM519 392h8v1h-8zM527 392h1v1h-1zM527 412h1v1h-1zM527 393h1v19h-1zM528 412h4v1h-4zM532 392h1v1h-1zM532 412h1v1h-1zM532 393h1v19h-1zM533 392h3v1h-3zM536 392h1v1h-1zM536 412h1v1h-1zM536 393h1v19h-1zM537 412h2v1h-2zM539 392h1v1h-1zM539 412h1v1h-1zM539 393h1v19h-1zM540 392h4v1h-4zM544 392h1v1h-1zM544 412h1v1h-1zM544 393h1v19h-1zM545 412h8v1h-8zM553 392h1v1h-1zM553 412h1v1h-1zM553 393h1v19h-1zM554 392h3v1h-3zM557 392h1v1h-1zM557 412h1v1h-1zM557 393h1v19h-1zM558 412h3v1h-3zM561 392h1v1h-1zM561 412h1v1h-1zM561 393h1v19h-1zM562 392h2v1h-2zM564 392h1v1h-1zM564 412h1v1h-1zM564 393h1v19h-1zM565 412h4v1h-4zM569 392h1v1h-1zM569 412h1v1h-1zM569 393h1v19h-1zM570 392h8v1h-8zM578 392h1v1h-1zM578 412h1v1h-1zM578 393h1v19h-1zM579 412h4v1h-4zM583 392h1v1h-1zM583 412h1v1h-1zM583 393h1v19h-1zM584 392h2v1h-2zM586 392h1v1h-1zM586 412h1v1h-1zM586 393h1v19h-1zM587 412h3v1h-3zM590 392h1v1h-1zM590 412h1v1h-1zM590 393h1v19h-1zM591 392h3v1h-3zM594 392h1v1h-1zM594 412h1v1h-1zM594 393h1v19h-1zM595 412h8v1h-8zM603 392h1v1h-1zM603 412h1v1h-1zM603 393h1v19h-1zM604 392h4v1h-4zM608 392h1v1h-1zM608 412h1v1h-1zM608 393h1v19h-1zM609 412h2v1h-2zM611 392h1v1h-1zM611 412h1v1h-1zM611 393h1v19h-1zM612 392h3v1h-3zM615 392h1v1h-1zM615 412h1v1h-1zM615 393h1v19h-1zM616 412h4v1h-4zM620 392h1v1h-1zM620 412h1v1h-1zM620 393h1v19h-1zM621 392h8v1h-8zM629 392h1v1h-1zM629 412h1v1h-1zM629 393h1v19h-1zM630 412h3v1h-3zM633 392h1v1h-1zM633 412h1v1h-1zM633 393h1v19h-1zM634 392h2v1h-2zM636 392h1v1h-1zM636 412h1v1h-1zM636 393h1v19h-1zM637 412h3v1h-3zM640 392h1v1h-1zM640 412h1v1h-1zM640 393h1v19h-1zM641 392h4v1h-4zM645 392h1v1h-1zM645 412h1v1h-1zM645 393h1v19h-1zM646 412h8v1h-8zM654 392h1v1h-1zM654 412h1v1h-1zM654 393h1v19h-1zM655 392h3v1h-3zM658 392h1v1h-1zM658 412h1v1h-1zM658 393h1v19h-1zM659 412h3v1h-3zM662 392h1v1h-1zM662 412h1v1h-1zM662 393h1v19h-1zM663 392h3v1h-3zM666 392h1v1h-1zM666 412h1v1h-1zM666 393h1v19h-1zM667 412h3v1h-3zM670 392h1v1h-1zM670 412h1v1h-1zM670 393h1v19h-1zM671 392h8v1h-8zM679 392h1v1h-1zM679 412h1v1h-1zM679 393h1v19h-1zM680 412h4v1h-4zM684 392h1v1h-1zM684 412h1v1h-1zM684 393h1v19h-1zM685 392h2v1h-2zM687 392h1v1h-1zM687 412h1v1h-1zM687 393h1v19h-1zM688 412h3v1h-3zM691 392h1v1h-1zM691 412h1v1h-1zM691 393h1v19h-1zM692 392h3v1h-3zM695 392h1v1h-1zM695 412h1v1h-1zM695 393h1v19h-1zM696 412h8v1h-8zM704 392h1v1h-1zM704 412h1v1h-1zM704 393h1v19h-1zM705 392h4v1h-4zM709 392h1v1h-1zM709 412h1v1h-1zM709 393h1v19h-1zM710 412h2v1h-2zM712 392h1v1h-1zM712 412h1v1h-1zM712 393h1v19h-1zM713 392h3v1h-3zM716 392h1v1h-1zM716 412h1v1h-1zM716 393h1v19h-1zM717 412h3v1h-3zM720 392h1v1h-1zM720 412h1v1h-1zM720 393h1v19h-1zM721 392h9v1h-9zM730 392h1v1h-1zM730 412h1v1h-1zM730 393h1v19h-1zM731 412h3v1h-3zM734 392h1v1h-1zM734 412h1v1h-1zM734 393h1v19h-1zM735 392h3v1h-3zM738 392h1v1h-1zM738 412h1v1h-1zM738 393h1v19h-1zM739 412h2v1h-2zM741 392h1v1h-1zM741 412h1v1h-1zM741 393h1v19h-1zM742 392h4v1h-4zM746 392h1v1h-1zM746 412h1v1h-1zM746 393h1v19h-1zM747 412h7v1h-7zM754 392h1v1h-1zM754 412h1v1h-1zM754 393h1v19h-1zM755 392h4v1h-4zM759 392h1v1h-1zM759 412h1v1h-1zM759 393h1v19h-1zM760 412h3v1h-3zM763 392h1v1h-1zM763 412h1v1h-1zM763 393h1v19h-1zM764 392h2v1h-2zM766 392h1v1h-1zM766 412h1v1h-1zM766 393h1v19h-1zM767 412h4v1h-4zM771 392h1v1h-1zM771 412h1v1h-1zM771 393h1v19h-1zM772 392h8v1h-8zM780 392h1v1h-1zM780 412h1v1h-1zM780 393h1v19h-1zM781 412h3v1h-3zM784 392h1v1h-1zM784 412h1v1h-1zM784 393h1v19h-1zM785 392h3v1h-3zM788 392h1v1h-1zM788 412h1v1h-1zM788 393h1v19h-1zM789 412h2v1h-2zM791 392h1v1h-1zM791 412h1v1h-1zM791 393h1v19h-1zM792 392h4v1h-4zM796 392h1v1h-1zM796 412h1v1h-1zM796 393h1v19h-1zM797 412h3v1h-3z"/>
<path fill="#45a2a8" d="M303 417h1v1h-1zM303 437h1v1h-1zM303 418h1v19h-1zM304 437h1v1h-1zM305 417h1v1h-1zM305 437h1v1h-1zM305 418h1v19h-1zM306 417h1v1h-1zM307 417h2v1h-2zM307 437h2v1h-2zM307 418h2v19h-2zM309 417h1v1h-1zM310 417h1v1h-1zM310 437h1v1h-1zM310 418h1v19h-1zM311 437h1v1h-1zM312 417h1v1h-1zM312 437h1v1h-1zM312 418h1v19h-1zM313 417h1v1h-1zM314 417h1v1h-1zM314 437h1v1h-1zM314 418h1v19h-1zM315 437h2v1h-2zM317 417h1v1h-1zM317 437h1v1h-1zM317 418h1v19h-1zM318 417h8v1h-8zM326 417h1v1h-1zM326 437h1v1h-1zM326 418h1v19h-1zM327 437h1v1h-1zM328 417h1v1h-1zM328 437h1v1h-1zM328 418h1v19h-1zM329 417h1v1h-1zM330 417h1v1h-1zM330 437h1v1h-1zM330 418h1v19h-1zM331 437h1v1h-1zM332 417h1v1h-1zM332 437h1v1h-1zM332 418h1v19h-1zM333 417h1v1h-1zM334 417h1v1h-1zM334 437h1v1h-1zM334 418h1v19h-1zM335 437h1v1h-1zM336 417h2v1h-2zM336 437h2v1h-2zM336 418h2v19h-2zM338 437h1v1h-1zM339 417h1v1h-1zM339 437h1v1h-1zM339 418h1v19h-1zM340 417h2v1h-2zM342 417h1v1h-1zM342 437h1v1h-1zM342 418h1v19h-1zM343 437h8v1h-8zM351 417h1v1h-1zM351 437h1v1h-1zM351 418h1v19h-1zM352 417h2v1h-2zM354 417h1v1h-1zM354 437h1v1h-1zM354 418h1v19h-1zM355 437h1v1h-1zM356 417h2v1h-2zM356 437h2v1h-2zM356 418h2v19h-2zM358 437h1v1h-1zM359 417h1v1h-1zM359 437h1v1h-1zM359 418h1v19h-1zM360 417h1v1h-1zM361 417h1v1h-1zM361 437h1v1h-1zM361 418h1v19h-1zM362 437h1v1h-1zM363 417h1v1h-1zM363 437h1v1h-1zM363 418h1v19h-1zM364 417h1v1h-1zM365 417h1v1h-1zM365 437h1v1h-1zM365 418h1v19h-1zM366 437h1v1h-1zM367 417h1v1h-1zM367 437h1v1h-1zM367 418h1v19h-1zM368 417h8v1h-8zM376 417h1v1h-1zM376 437h1v1h-1zM376 418h1v19h-1zM377 437h2v1h-2zM379 417h1v1h-1zM379 437h1v1h-1zM379 418h1v19h-1zM380 417h1v1h-1zM381 417h2v1h-2zM381 437h2v1h-2zM381 418h2v19h-2zM383 417h1v1h-1zM384 417h1v1h-1zM384 437h1v1h-1zM384 418h1v19h-1zM385 437h1v1h-1zM386 417h1v1h-1zM386 437h1v1h-1zM386 418h1v19h-1zM387 417h1v1h-1zM388 417h1v1h-1zM388 437h1v1h-1zM388 418h1v19h-1zM389 437h1v1h-1zM390 417h1v1h-1zM390 437h1v1h-1zM390 418h1v19h-1zM391 417h1v1h-1zM392 417h1v1h-1zM392 437h1v1h-1zM392 418h1v19h-1zM393 437h8v1h-8zM401 417h1v1h-1zM401 437h1v1h-1zM401 418h1v19h-1zM402 417h2v1h-2zM404 417h1v1h-1zM404 437h1v1h-1zM404 418h1v19h-1zM405 437h1v1h-1zM406 417h1v1h-1zM406 437h1v1h-1zM406 418h1v19h-1zM407 417h1v1h-1zM408 417h2v1h-2zM408 437h2v1h-2zM408 418h2v19h-2zM410 417h1v1h-1zM411 417h1v1h-1zM411 437h1v1h-1zM411 418h1v19h-1zM412 437h1v1h-1zM413 417h1v1h-1zM413 437h1v1h-1zM413 418h1v19h-1zM414 417h1v1h-1zM415 417h1v1h-1zM415 437h1v1h-1zM415 418h1v19h-1zM416 437h2v1h-2zM418 417h1v1h-1zM418 437h1v1h-1zM418 418h1v19h-1zM419 417h8v1h-8zM427 417h1v1h-1zM427 437h1v1h-1zM427 418h1v19h-1zM428 437h1v1h-1zM429 417h1v1h-1zM429 437h1v1h-1zM429 418h1v19h-1zM430 417h1v1h-1zM431 417h1v1h-1zM431 437h1v1h-1zM431 418h1v19h-1zM432 437h1v1h-1zM433 417h1v1h-1zM433 437h1v1h-1zM433 418h1v19h-1zM434 417h1v1h-1zM435 417h2v1h-2zM435 437h2v1h-2zM435 418h2v19h-2zM437 417h1v1h-1zM438 417h1v1h-1zM438 437h1v1h-1zM438 418h1v19h-1zM439 437h1v1h-1zM440 417h1v1h-1zM440 437h1v1h-1zM440 418h1v19h-1zM441 417h2v1h-2zM443 417h1v1h-1zM443 437h1v1h-1zM443 418h1v19h-1zM444 437h8v1h-8zM452 417h1v1h-1zM452 437h1v1h-1zM452 418h1v19h-1zM453 417h1v1h-1zM454 417h1v1h-1zM454 437h1v1h-1zM454 418h1v19h-1zM455 437h1v1h-1zM456 417h1v1h-1zM456 437h1v1h-1zM456 418h1v19h-1zM457 417h1v1h-1zM458 417h1v1h-1zM458 437h1v1h-1zM458 418h1v19h-1zM459 437h1v1h-1zM460 417h1v1h-1zM460 437h1v1h-1zM460 418h1v19h-1zM461 417h1v1h-1zM462 417h2v1h-2zM462 437h2v1h-2zM462 418h2v19h-2zM464 417h2v1h-2zM466 417h1v1h-1zM466 437h1v1h-1zM466 418h1v19h-1zM467 437h1v1h-1zM468 417h1v1h-1zM468 437h1v1h-1zM468 418h1v19h-1zM469 417h8v1h-8zM477 417h1v1h-1zM477 437h1v1h-1zM477 418h1v19h-1zM478 437h1v1h-1zM479 417h1v1h-1zM479 437h1v1h-1zM479 418h1v19h-1zM480 417h2v1h-2zM482 417h2v1h-2zM482 437h2v1h-2zM482 418h2v19h-2zM484 417h1v1h-1zM485 417h1v1h-1zM485 437h1v1h-1zM485 418h1v19h-1zM486 437h1v1h-1zM487 417h1v1h-1zM487 437h1v1h-1zM487 418h1v19h-1zM488 417h1v1h-1zM489 417h1v1h-1zM489 437h1v1h-1zM489 418h1v19h-1zM490 437h1v1h-1zM491 417h1v1h-1zM491 437h1v1h-1zM491 418h1v19h-1zM492 417h1v1h-1zM493 417h1v1h-1zM493 437h1v1h-1zM493 418h1v19h-1zM494 437h8v1h-8zM502 417h1v1h-1zM502 437h1v1h-1zM502 418h1v19h-1zM503 417h2v1h-2zM505 417h1v1h-1zM505 437h1v1h-1zM505 418h1v19h-1zM506 437h1v1h-1zM507 417h1v1h-1zM507 437h1v1h-1zM507 418h1v19h-1zM508 417h1v1h-1zM509 417h1v1h-1zM509 437h1v1h-1zM509 418h1v19h-1zM510 437h1v1h-1zM511 417h2v1h-2zM511 437h2v1h-2zM511 418h2v19h-2zM513 437h1v1h-1zM514 417h1v1h-1zM514 437h1v1h-1zM514 418h1v19h-1zM515 417h1v1h-1zM516 417h1v1h-1zM516 437h1v1h-1zM516 418h1v19h-1zM517 437h1v1h-1zM518 417h1v1h-1zM518 437h1v1h-1zM518 418h1v19h-1zM519 417h8v1h-8zM527 417h1v1h-1zM527 437h1v1h-1zM527 418h1v19h-1zM528 437h2v1h-2zM530 417h1v1h-1zM530 437h1v1h-1zM530 418h1v19h-1zM531 417h1v1h-1zM532 417h1v1h-1zM532 437h1v1h-1zM532 418h1v19h-1zM533 437h1v1h-1zM534 417h1v1h-1zM534 437h1v1h-1zM534 418h1v19h-1zM535 417h1v1h-1zM536 417h2v1h-2zM536 437h2v1h-2zM536 418h2v19h-2zM538 417h1v1h-1zM539 417h1v1h-1zM539 437h1v1h-1zM539 418h1v19h-1zM540 437h1v1h-1zM541 417h1v1h-1zM541 437h1v1h-1zM541 418h1v19h-1zM542 417h2v1h-2zM544 417h1v1h-1zM544 437h1v1h-1zM544 418h1v19h-1zM545 437h8v1h-8zM553 417h1v1h-1zM553 437h1v1h-1zM553 418h1v19h-1zM554 417h1v1h-1zM555 417h1v1h-1zM555 437h1v1h-1zM555 418h1v19h-1zM556 437h1v1h-1zM557 417h1v1h-1zM557 437h1v1h-1zM557 418h1v19h-1zM558 417h1v1h-1zM559 417h1v1h-1zM559 437h1v1h-1zM559 418h1v19h-1zM560 437h1v1h-1zM561 417h2v1h-2zM561 437h2v1h-2zM561 418h2v19h-2zM563 437h1v1h-1zM564 417h1v1h-1zM564 437h1v1h-1zM564 418h1v19h-1zM565 417h1v1h-1zM566 417h1v1h-1zM566 437h1v1h-1zM566 418h1v19h-1zM567 437h2v1h-2zM569 417h1v1h-1zM569 437h1v1h-1zM569 418h1v19h-1zM570 417h8v1h-8zM578 417h1v1h-1zM578 437h1v1h-1zM578 418h1v19h-1zM579 437h2v1h-2zM581 417h1v1h-1zM581 437h1v1h-1zM581 418h1v19h-1zM582 417h1v1h-1zM583 417h1v1h-1zM583 437h1v1h-1zM583 418h1v19h-1zM584 437h1v1h-1zM585 417h2v1h-2zM585 437h2v1h-2zM585 418h2v19h-2zM587 437h1v1h-1zM588 417h1v1h-1zM588 437h1v1h-1zM588 418h1v19h-1zM589 417h1v1h-1zM590 417h1v1h-1zM590 437h1v1h-1zM590 418h1v19h-1zM591 437h1v1h-1zM592 417h1v1h-1zM592 437h1v1h-1zM592 418h1v19h-1zM593 417h1v1h-1zM594 417h1v1h-1zM594 437h1v1h-1zM594 418h1v19h-1zM595 437h8v1h-8zM603 417h1v1h-1zM603 437h1v1h-1zM603 418h1v19h-1zM604 417h2v1h-2zM606 417h1v1h-1zM606 437h1v1h-1zM606 418h1v19h-1zM607 437h1v1h-1zM608 417h1v1h-1zM608 437h1v1h-1zM608 418h1v19h-1zM609 417h1v1h-1zM610 417h2v1h-2zM610 437h2v1h-2zM610 418h2v19h-2zM612 417h1v1h-1zM613 417h1v1h-1zM613 437h1v1h-1zM613 418h1v19h-1zM614 437h1v1h-1zM615 417h1v1h-1zM615 437h1v1h-1zM615 418h1v19h-1zM616 417h1v1h-1zM617 417h1v1h-1zM617 437h1v1h-1zM617 418h1v19h-1zM618 437h2v1h-2zM620 417h1v1h-1zM620 437h1v1h-1zM620 418h1v19h-1zM621 417h8v1h-8zM629 417h1v1h-1zM629 437h1v1h-1zM629 418h1v19h-1zM630 437h1v1h-1zM631 417h1v1h-1zM631 437h1v1h-1zM631 418h1v19h-1zM632 417h1v1h-1zM633 417h1v1h-1zM633 437h1v1h-1zM633 418h1v19h-1zM634 437h1v1h-1zM635 417h2v1h-2zM635 437h2v1h-2zM635 418h2v19h-2zM637 437h1v1h-1zM638 417h1v1h-1zM638 437h1v1h-1zM638 418h1v19h-1zM639 417h1v1h-1zM640 417h1v1h-1zM640 437h1v1h-1zM640 418h1v19h-1zM641 437h1v1h-1zM642 417h1v1h-1zM642 437h1v1h-1zM642 418h1v19h-1zM643 417h2v1h-2zM645 417h1v1h-1zM645 437h1v1h-1zM645 418h1v19h-1zM646 437h8v1h-8zM654 417h1v1h-1zM654 437h1v1h-1zM654 418h1v19h-1zM655 417h1v1h-1zM656 417h1v1h-1zM656 437h1v1h-1zM656 418h1v19h-1zM657 437h1v1h-1zM658 417h1v1h-1zM658 437h1v1h-1zM658 418h1v19h-1zM659 417h1v1h-1zM660 417h1v1h-1zM660 437h1v1h-1zM660 418h1v19h-1zM661 437h1v1h-1zM662 417h1v1h-1zM662 437h1v1h-1zM662 418h1v19h-1zM663 417h1v1h-1zM664 417h1v1h-1zM664 437h1v1h-1zM664 418h1v19h-1zM665 437h1v1h-1zM666 417h2v1h-2zM666 437h2v1h-2zM666 418h2v19h-2zM668 437h2v1h-2zM670 417h1v1h-1zM670 437h1v1h-1zM670 418h1v19h-1zM671 417h8v1h-8zM679 417h1v1h-1zM679 437h1v1h-1zM679 418h1v19h-1zM680 437h2v1h-2zM682 417h1v1h-1zM682 437h1v1h-1zM682 418h1v19h-1zM683 417h1v1h-1zM684 417h2v1h-2zM684 437h2v1h-2zM684 418h2v19h-2zM686 417h1v1h-1zM687 417h1v1h-1zM687 437h1v1h-1zM687 418h1v19h-1zM688 437h1v1h-1zM689 417h1v1h-1zM689 437h1v1h-1zM689 418h1v19h-1zM690 417h1v1h-1zM691 417h1v1h-1zM691 437h1v1h-1zM691 418h1v19h-1zM692 437h1v1h-1zM693 417h1v1h-1zM693 437h1v1h-1zM693 418h1v19h-1zM694 417h1v1h-1zM695 417h1v1h-1zM695 437h1v1h-1zM695 418h1v19h-1zM696 437h8v1h-8zM704 417h1v1h-1zM704 437h1v1h-1zM704 418h1v19h-1zM705 417h2v1h-2zM707 417h1v1h-1zM707 437h1v1h-1zM707 418h1v19h-1zM708 437h1v1h-1zM709 417h2v1h-2zM709 437h2v1h-2zM709 418h2v19h-2zM711 437h1v1h-1zM712 417h1v1h-1zM712 437h1v1h-1zM712 418h1v19h-1zM713 417h1v1h-1zM714 417h1v1h-1zM714 437h1v1h-1zM714 418h1v19h-1zM715 437h1v1h-1zM716 417h1v1h-1zM716 437h1v1h-1zM716 418h1v19h-1zM717 417h1v1h-1zM718 417h1v1h-1zM718 437h1v1h-1zM718 418h1v19h-1zM719 437h1v1h-1zM720 417h1v1h-1zM720 437h1v1h-1zM720 418h1v19h-1zM721 417h9v1h-9zM730 417h1v1h-1zM730 437h1v1h-1zM730 418h1v19h-1zM731 437h1v1h-1zM732 417h1v1h-1zM732 437h1v1h-1zM732 418h1v19h-1zM733 417h1v1h-1zM734 417h1v1h-1zM734 437h1v1h-1zM734 418h1v19h-1zM735 437h1v1h-1zM736 417h1v1h-1zM736 437h1v1h-1zM736 418h1v19h-1zM737 417h1v1h-1zM738 417h2v1h-2zM738 437h2v1h-2zM738 418h2v19h-2zM740 417h1v1h-1zM741 417h1v1h-1zM741 437h1v1h-1zM741 418h1v19h-1zM742 437h1v1h-1zM743 417h1v1h-1zM743 437h1v1h-1zM743 418h1v19h-1zM744 417h2v1h-2zM746 417h1v1h-1zM746 437h1v1h-1zM746 418h1v19h-1zM747 437h7v1h-7zM754 417h1v1h-1zM754 437h1v1h-1zM754 418h1v19h-1zM755 417h2v1h-2zM757 417h1v1h-1zM757 437h1v1h-1zM757 418h1v19h-1zM758 437h1v1h-1zM759 417h1v1h-1zM759 437h1v1h-1zM759 418h1v19h-1zM760 417h1v1h-1zM761 417h1v1h-1zM761 437h1v1h-1zM761 418h1v19h-1zM762 437h1v1h-1zM763 417h1v1h-1zM763 437h1v1h-1zM763 418h1v19h-1zM764 417h1v1h-1zM765 417h2v1h-2zM765 437h2v1h-2zM765 418h2v19h-2zM767 417h1v1h-1zM768 417h1v1h-1zM768 437h1v1h-1zM768 418h1v19h-1zM769 437h2v1h-2zM771 417h1v1h-1zM771 437h1v1h-1zM771 418h1v19h-1zM772 417h8v1h-8zM780 417h1v1h-1zM780 437h1v1h-1zM780 418h1v19h-1zM781 437h1v1h-1zM782 417h1v1h-1zM782 437h1v1h-1zM782 418h1v19h-1zM783 417h1v1h-1zM784 417h1v1h-1zM784 437h1v1h-1zM784 418h1v19h-1zM785 437h1v1h-1zM786 417h1v1h-1zM786 437h1v1h-1zM786 418h1v19h-1zM787 417h1v1h-1zM788 417h1v1h-1zM788 437h1v1h-1zM788 418h1v19h-1zM789 437h1v1h-1zM790 417h2v1h-2zM790 437h2v1h-2zM790 418h2v19h-2zM792 437h1v1h-1zM793 417h1v1h-1zM793 437h1v1h-1zM793 418h1v19h-1zM794 417h2v1h-2zM796 417h1v1h-1zM796 437h1v1h-1zM796 418h1v19h-1zM797 437h3v1h-3z"/>
<path fill="#45a2a8" d="M303 442h6v1h-6zM303 462h6v1h-6zM303 443h1v19h-1zM308 443h1v19h-1zM309 442h1v1h-1zM310 442h10v1h-10zM310 462h10v1h-10zM310 443h1v19h-1zM319 443h1v19h-1zM320 462h1v1h-1zM321 442h1v1h-1zM321 462h1v1h-1zM321 443h1v19h-1zM322 462h1v1h-1zM323 442h4v1h-4zM323 462h4v1h-4zM323 443h1v19h-1zM326 443h1v19h-1zM327 462h1v1h-1zM328 442h11v1h-11zM328 462h11v1h-11zM328 443h1v19h-1zM338 443h1v19h-1zM339 442h1v1h-1zM340 442h8v1h-8zM340 462h8v1h-8zM340 443h1v19h-1zM347 443h1v19h-1zM348 442h1v1h-1zM349 442h2v1h-2zM349 462h2v1h-2zM349 443h2v19h-2zM351 442h1v1h-1zM352 442h12v1h-12zM352 462h12v1h-12zM352 443h1v19h-1zM363 443h1v19h-1zM364 462h1v1h-1zM365 442h7v1h-7zM365 462h7v1h-7zM365 443h1v19h-1zM371 443h1v19h-1zM372 462h2v1h-2zM374 442h7v1h-7zM374 462h7v1h-7zM374 443h1v19h-1zM380 443h1v19h-1zM381 462h1v1h-1zM382 442h6v1h-6zM382 462h6v1h-6zM382 443h1v19h-1zM387 443h1v19h-1zM388 442h1v1h-1zM389 442h1v1h-1zM389 462h1v1h-1zM389 443h1v19h-1zM390 462h1v1h-1zM391 442h5v1h-5zM391 462h5v1h-5zM391 443h1v19h-1zM395 443h1v19h-1zM396 442h1v1h-1zM397 442h2v1h-2zM397 462h2v1h-2zM397 443h2v19h-2zM399 442h1v1h-1zM400 442h17v1h-17zM400 462h17v1h-17zM400 443h1v19h-1zM416 443h1v19h-1zM417 462h1v1h-1zM418 442h3v1h-3zM418 462h3v1h-3zM418 443h1v19h-1zM420 443h1v19h-1zM421 462h1v1h-1zM422 442h9v1h-9zM422 462h9v1h-9zM422 443h1v19h-1zM430 443h1v19h-1zM431 442h1v1h-1zM432 442h10v1h-10zM432 462h10v1h-10zM432 443h1v19h-1zM441 443h1v19h-1zM442 442h1v1h-1zM443 442h3v1h-3zM443 462h3v1h-3zM443 443h1v19h-1zM445 443h1v19h-1zM446 442h1v1h-1zM447 442h1v1h-1zM447 462h1v1h-1zM447 443h1v19h-1zM448 442h1v1h-1zM449 442h2v1h-2zM449 462h2v1h-2zM449 443h2v19h-2zM451 462h1v1h-1zM452 442h4v1h-4zM452 462h4v1h-4zM452 443h1v19h-1zM455 443h1v19h-1zM456 462h1v1h-1zM457 442h1v1h-1zM457 462h1v1h-1zM457 443h1v19h-1zM458 462h1v1h-1zM459 442h1v1h-1zM459 462h1v1h-1zM459 443h1v19h-1zM460 442h1v1h-1zM461 442h4v1h-4zM461 462h4v1h-4zM461 443h1v19h-1zM464 443h1v19h-1zM465 462h1v1h-1zM466 442h3v1h-3zM466 462h3v1h-3zM466 443h1v19h-1zM468 443h1v19h-1zM469 442h1v1h-1zM470 442h3v1h-3zM470 462h3v1h-3zM470 443h1v19h-1zM472 443h1v19h-1zM473 462h2v1h-2zM475 442h4v1h-4zM475 462h4v1h-4zM475 443h1v19h-1zM478 443h1v19h-1zM479 442h1v1h-1zM480 442h4v1h-4zM480 462h4v1h-4zM480 443h1v19h-1zM483 443h1v19h-1zM484 442h1v1h-1zM485 442h5v1h-5zM485 462h5v1h-5zM485 443h1v19h-1zM489 443h1v19h-1zM490 442h1v1h-1zM491 442h4v1h-4zM491 462h4v1h-4zM491 443h1v19h-1zM494 443h1v19h-1zM495 462h1v1h-1zM496 442h3v1h-3zM496 462h3v1h-3zM496 443h1v19h-1zM498 443h1v19h-1zM499 442h1v1h-1zM500 442h1v1h-1zM500 462h1v1h-1zM500 443h1v19h-1zM501 462h1v1h-1zM502 442h6v1h-6zM502 462h6v1h-6zM502 443h1v19h-1zM507 443h1v19h-1zM508 462h1v1h-1zM509 442h10v1h-10zM509 462h10v1h-10zM509 443h1v19h-1zM518 443h1v19h-1zM519 442h1v1h-1zM520 442h1v1h-1zM520 462h1v1h-1zM520 443h1v19h-1zM521 462h3v1h-3zM524 442h2v1h-2zM524 462h2v1h-2zM524 443h2v19h-2zM526 442h1v1h-1zM527 442h1v1h-1zM527 462h1v1h-1zM527 443h1v19h-1zM528 462h1v1h-1zM529 442h5v1h-5zM529 462h5v1h-5zM529 443h1v19h-1zM533 443h1v19h-1zM534 442h2v1h-2zM536 442h3v1h-3zM536 462h3v1h-3zM536 443h1v19h-1zM538 443h1v19h-1zM539 442h1v1h-1zM540 442h6v1h-6zM540 462h6v1h-6zM540 443h1v19h-1zM545 443h1v19h-1zM546 442h5v1h-5zM551 442h1v1h-1zM551 462h1v1h-1zM551 443h1v19h-1zM552 462h1v1h-1zM553 442h14v1h-14zM553 462h14v1h-14zM553 443h1v19h-1zM566 443h1v19h-1zM567 442h1v1h-1zM568 442h3v1h-3zM568 462h3v1h-3zM568 443h1v19h-1zM570 443h1v19h-1zM571 462h4v1h-4zM575 442h5v1h-5zM575 462h5v1h-5zM575 443h1v19h-1zM579 443h1v19h-1zM580 442h1v1h-1zM581 442h3v1h-3zM581 462h3v1h-3zM581 443h1v19h-1zM583 443h1v19h-1zM584 442h1v1h-1zM585 442h5v1h-5zM585 462h5v1h-5zM585 443h1v19h-1zM589 443h1v19h-1zM590 462h1v1h-1zM591 442h4v1h-4zM591 462h4v1h-4zM591 443h1v19h-1zM594 443h1v19h-1zM595 462h1v1h-1zM596 442h4v1h-4zM596 462h4v1h-4zM596 443h1v19h-1zM599 443h1v19h-1zM600 442h1v1h-1zM601 442h1v1h-1zM601 462h1v1h-1zM601 443h1v19h-1zM602 462h1v1h-1zM603 442h6v1h-6zM603 462h6v1h-6zM603 443h1v19h-1zM608 443h1v19h-1zM609 442h1v1h-1zM610 442h15v1h-15zM610 462h15v1h-15zM610 443h1v19h-1zM624 443h1v19h-1zM625 462h2v1h-2zM627 442h2v1h-2zM627 462h2v1h-2zM627 443h2v19h-2zM629 462h1v1h-1zM630 442h5v1h-5zM630 462h5v1h-5zM630 443h1v19h-1zM634 443h1v19h-1zM635 462h1v1h-1zM636 442h9v1h-9zM636 462h9v1h-9zM636 443h1v19h-1zM644 443h1v19h-1zM645 462h1v1h-1zM646 442h2v1h-2zM646 462h2v1h-2zM646 443h2v19h-2zM648 442h1v1h-1zM649 442h1v1h-1zM649 462h1v1h-1zM649 443h1v19h-1zM650 442h1v1h-1zM651 442h3v1h-3zM651 462h3v1h-3zM651 443h1v19h-1zM653 443h1v19h-1zM654 442h1v1h-1zM655 442h9v1h-9zM655 462h9v1h-9zM655 443h1v19h-1zM663 443h1v19h-1zM664 442h1v1h-1zM665 442h9v1h-9zM665 462h9v1h-9zM665 443h1v19h-1zM673 443h1v19h-1zM674 462h3v1h-3zM677 442h4v1h-4zM677 462h4v1h-4zM677 443h1v19h-1zM680 443h1v19h-1zM681 442h1v1h-1zM682 442h1v1h-1zM682 462h1v1h-1zM682 443h1v19h-1zM683 442h1v1h-1zM684 442h5v1h-5zM684 462h5v1h-5zM684 443h1v19h-1zM688 443h1v19h-1zM689 462h1v1h-1zM690 442h6v1h-6zM690 462h6v1h-6zM690 443h1v19h-1zM695 443h1v19h-1zM696 462h1v1h-1zM697 442h2v1h-2zM697 462h2v1h-2zM697 443h2v19h-2zM699 442h2v1h-2zM701 442h4v1h-4zM701 462h4v1h-4zM701 443h1v19h-1zM704 443h1v19h-1zM705 442h1v1h-1zM706 442h15v1h-15zM706 462h15v1h-15zM706 443h1v19h-1zM720 443h1v19h-1zM721 442h1v1h-1zM722 442h1v1h-1zM722 462h1v1h-1zM722 443h1v19h-1zM723 462h2v1h-2zM725 442h3v1h-3zM725 462h3v1h-3zM725 443h1v19h-1zM727 443h1v19h-1zM728 442h1v1h-1zM729 442h15v1h-15zM729 462h15v1h-15zM729 443h1v19h-1zM743 443h1v19h-1zM744 462h1v1h-1zM745 442h2v1h-2zM745 462h2v1h-2zM745 443h2v19h-2zM747 462h1v1h-1zM748 442h3v1h-3zM748 462h3v1h-3zM748 443h1v19h-1zM750 443h1v19h-1zM751 442h1v1h-1zM752 442h1v1h-1zM752 462h1v1h-1zM752 443h1v19h-1zM753 462h1v1h-1zM754 442h3v1h-3zM754 462h3v1h-3zM754 443h1v19h-1zM756 443h1v19h-1zM757 462h1v1h-1zM758 442h3v1h-3zM758 462h3v1h-3zM758 443h1v19h-1zM760 443h1v19h-1zM761 442h1v1h-1zM762 442h2v1h-2zM762 462h2v1h-2zM762 443h2v19h-2zM764 462h1v1h-1zM765 442h1v1h-1zM765 462h1v1h-1zM765 443h1v19h-1zM766 462h1v1h-1zM767 442h5v1h-5zM767 462h5v1h-5zM767 443h1v19h-1zM771 443h1v19h-1zM772 442h1v1h-1zM773 442h1v1h-1zM773 462h1v1h-1zM773 443h1v19h-1zM774 462h3v1h-3zM777 442h1v1h-1zM777 462h1v1h-1zM777 443h1v19h-1zM778 442h2v1h-2zM780 442h11v1h-11zM780 462h11v1h-11zM780 443h1v19h-1zM790 443h1v19h-1zM791 442h2v1h-2zM793 442h4v1h-4zM793 462h4v1h-4zM793 443h1v19h-1zM796 443h1v19h-1zM797 462h1v1h-1zM798 442h1v1h-1zM798 462h1v1h-1zM798 443h1v19h-1zM799 442h1v1h-1z"/><path fill="#429298" d="M304 443h4v19h-4zM311 443h8v19h-8zM324 443h2v19h-2zM329 443h9v19h-9zM341 443h6v19h-6zM353 443h10v19h-10zM366 443h5v19h-5zM375 443h5v19h-5zM383 443h4v19h-4zM392 443h3v19h-3zM401 443h15v19h-15zM419 443h1v19h-1zM423 443h7v19h-7zM433 443h8v19h-8zM444 443h1v19h-1zM453 443h2v19h-2zM462 443h2v19h-2zM467 443h1v19h-1zM471 443h1v19h-1zM476 443h2v19h-2zM481 443h2v19h-2zM486 443h3v19h-3zM492 443h2v19h-2zM497 443h1v19h-1zM503 443h4v19h-4zM510 443h8v19h-8zM530 443h3v19h-3zM537 443h1v19h-1zM541 443h4v19h-4zM554 443h12v19h-12zM569 443h1v19h-1zM576 443h3v19h-3zM582 443h1v19h-1zM586 443h3v19h-3zM592 443h2v19h-2zM597 443h2v19h-2zM604 443h4v19h-4zM611 443h13v19h-13zM631 443h3v19h-3zM637 443h7v19h-7zM652 443h1v19h-1zM656 443h7v19h-7zM666 443h7v19h-7zM678 443h2v19h-2zM685 443h3v19h-3zM691 443h4v19h-4zM702 443h2v19h-2zM707 443h13v19h-13zM726 443h1v19h-1zM730 443h13v19h-13zM749 443h1v19h-1zM755 443h1v19h-1zM759 443h1v19h-1zM768 443h3v19h-3zM781 443h9v19h-9zM794 443h2v19h-2z"/>
<path fill="#45a2a8" d="M303 467h13v1h-13zM303 487h13v1h-13zM303 468h1v19h-1zM315 468h1v19h-1zM316 467h1v1h-1zM317 467h5v1h-5zM317 487h5v1h-5zM317 468h1v19h-1zM321 468h1v19h-1zM322 467h1v1h-1zM323 467h4v1h-4zM323 487h4v1h-4zM323 468h1v19h-1zM326 468h1v19h-1zM327 467h1v1h-1zM328 467h14v1h-14zM328 487h14v1h-14zM328 468h1v19h-1zM341 468h1v19h-1zM342 467h1v1h-1zM343 467h8v1h-8zM343 487h8v1h-8zM343 468h1v19h-1zM350 468h1v19h-1zM351 467h1v1h-1zM352 467h1v1h-1zM352 487h1v1h-1zM352 468h1v19h-1zM353 467h2v1h-2zM355 467h1v1h-1zM355 487h1v1h-1zM355 468h1v19h-1zM356 467h1v1h-1zM357 467h4v1h-4zM357 487h4v1h-4zM357 468h1v19h-1zM360 468h1v19h-1zM361 487h1v1h-1zM362 467h1v1h-1zM362 487h1v1h-1zM362 468h1v19h-1zM363 467h1v1h-1zM364 467h1v1h-1zM364 487h1v1h-1zM364 468h1v19h-1zM365 487h2v1h-2zM367 467h12v1h-12zM367 487h12v1h-12zM367 468h1v19h-1zM378 468h1v19h-1zM379 467h1v1h-1zM380 467h1v1h-1zM380 487h1v1h-1zM380 468h1v19h-1zM381 487h1v1h-1zM382 467h1v1h-1zM382 487h1v1h-1zM382 468h1v19h-1zM383 467h1v1h-1zM384 467h2v1h-2zM384 487h2v1h-2zM384 468h2v19h-2zM386 487h1v1h-1zM387 467h2v1h-2zM387 487h2v1h-2zM387 468h2v19h-2zM389 487h1v1h-1zM390 467h1v1h-1zM390 487h1v1h-1zM390 468h1v19h-1zM391 487h1v1h-1zM392 467h7v1h-7zM392 487h7v1h-7zM392 468h1v19h-1zM398 468h1v19h-1zM399 487h1v1h-1zM400 467h3v1h-3zM400 487h3v1h-3zM400 468h1v19h-1zM402 468h1v19h-1zM403 487h2v1h-2zM405 467h2v1h-2zM405 487h2v1h-2zM405 468h2v19h-2zM407 487h1v1h-1zM408 467h2v1h-2zM408 487h2v1h-2zM408 468h2v19h-2zM410 467h1v1h-1zM411 467h1v1h-1zM411 487h1v1h-1zM411 468h1v19h-1zM412 467h2v1h-2zM414 467h7v1h-7zM414 487h7v1h-7zM414 468h1v19h-1zM420 468h1v19h-1zM421 467h1v1h-1zM422 467h7v1h-7zM422 487h7v1h-7zM422 468h1v19h-1zM428 468h1v19h-1zM429 487h1v1h-1zM430 467h6v1h-6zM430 487h6v1h-6zM430 468h1v19h-1zM435 468h1v19h-1zM436 467h1v1h-1zM437 467h3v1h-3zM437 487h3v1h-3zM437 468h1v19h-1zM439 468h1v19h-1zM440 487h1v1h-1zM441 467h25v1h-25zM441 487h25v1h-25zM441 468h1v19h-1zM465 468h1v19h-1zM466 487h1v1h-1zM467 467h8v1h-8zM467 487h8v1h-8zM467 468h1v19h-1zM474 468h1v19h-1zM475 487h1v1h-1zM476 467h21v1h-21zM476 487h21v1h-21zM476 468h1v19h-1zM496 468h1v19h-1zM497 467h2v1h-2zM499 467h5v1h-5zM499 487h5v1h-5zM499 468h1v19h-1zM503 468h1v19h-1zM504 467h1v1h-1zM505 467h4v1h-4zM505 487h4v1h-4zM505 468h1v19h-1zM508 468h1v19h-1zM509 487h3v1h-3zM512 467h7v1h-7zM512 487h7v1h-7zM512 468h1v19h-1zM518 468h1v19h-1zM519 467h1v1h-1zM520 467h10v1h-10zM520 487h10v1h-10zM520 468h1v19h-1zM529 468h1v19h-1zM530 467h1v1h-1zM531 467h15v1h-15zM531 487h15v1h-15zM531 468h1v19h-1zM545 468h1v19h-1zM546 487h4v1h-4zM550 467h3v1h-3zM550 487h3v1h-3zM550 468h1v19h-1zM552 468h1v19h-1zM553 487h1v1h-1zM554 467h2v1h-2zM554 487h2v1h-2zM554 468h2v19h-2zM556 487h1v1h-1zM557 467h1v1h-1zM557 487h1v1h-1zM557 468h1v19h-1zM558 487h1v1h-1zM559 467h2v1h-2zM559 487h2v1h-2zM559 468h2v19h-2zM561 467h1v1h-1zM562 467h1v1h-1zM562 487h1v1h-1zM562 468h1v19h-1zM563 467h2v1h-2zM565 467h4v1h-4zM565 487h4v1h-4zM565 468h1v19h-1zM568 468h1v19h-1zM569 467h1v1h-1zM570 467h1v1h-1zM570 487h1v1h-1zM570 468h1v19h-1zM571 467h1v1h-1zM572 467h6v1h-6zM572 487h6v1h-6zM572 468h1v19h-1zM577 468h1v19h-1zM578 487h1v1h-1zM579 467h2v1h-2zM579 487h2v1h-2zM579 468h2v19h-2zM581 467h1v1h-1zM582 467h4v1h-4zM582 487h4v1h-4zM582 468h1v19h-1zM585 468h1v19h-1zM586 487h1v1h-1zM587 467h2v1h-2zM587 487h2v1h-2zM587 468h2v19h-2zM589 487h1v1h-1zM590 467h18v1h-18zM590 487h18v1h-18zM590 468h1v19h-1zM607 468h1v19h-1zM608 487h1v1h-1zM609 467h2v1h-2zM609 487h2v1h-2zM609 468h2v19h-2zM611 467h2v1h-2zM613 467h6v1h-6zM613 487h6v1h-6zM613 468h1v19h-1zM618 468h1v19h-1zM619 467h1v1h-1zM620 467h5v1h-5zM620 487h5v1h-5zM620 468h1v19h-1zM624 468h1v19h-1zM625 467h2v1h-2zM627 467h1v1h-1zM627 487h1v1h-1zM627 468h1v19h-1zM628 487h1v1h-1zM629 467h8v1h-8zM629 487h8v1h-8zM629 468h1v19h-1zM636 468h1v19h-1zM637 467h1v1h-1zM638 467h16v1h-16zM638 487h16v1h-16zM638 468h1v19h-1zM653 468h1v19h-1zM654 467h1v1h-1zM655 467h4v1h-4zM655 487h4v1h-4zM655 468h1v19h-1zM658 468h1v19h-1zM659 467h1v1h-1zM660 467h18v1h-18zM660 487h18v1h-18zM660 468h1v19h-1zM677 468h1v19h-1zM678 487h1v1h-1zM679 467h4v1h-4zM679 487h4v1h-4zM679 468h1v19h-1zM682 468h1v19h-1zM683 467h2v1h-2zM685 467h3v1h-3zM685 487h3v1h-3zM685 468h1v19h-1zM687 468h1v19h-1zM688 487h1v1h-1zM689 467h3v1h-3zM689 487h3v1h-3zM689 468h1v19h-1zM691 468h1v19h-1zM692 467h3v1h-3zM695 467h4v1h-4zM695 487h4v1h-4zM695 468h1v19h-1zM698 468h1v19h-1zM699 487h1v1h-1zM700 467h37v1h-37zM700 487h37v1h-37zM700 468h1v19h-1zM736 468h1v19h-1zM737 467h1v1h-1zM738 467h1v1h-1zM738 487h1v1h-1zM738 468h1v19h-1zM739 467h1v1h-1zM740 467h20v1h-20zM740 487h20v1h-20zM740 468h1v19h-1zM759 468h1v19h-1zM760 467h1v1h-1zM761 467h3v1h-3zM761 487h3v1h-3zM761 468h1v19h-1zM763 468h1v19h-1zM764 467h1v1h-1zM765 467h7v1h-7zM765 487h7v1h-7zM765 468h1v19h-1zM771 468h1v19h-1zM772 487h1v1h-1zM773 467h3v1h-3zM773 487h3v1h-3zM773 468h1v19h-1zM775 468h1v19h-1zM776 467h1v1h-1zM777 467h1v1h-1zM777 487h1v1h-1zM777 468h1v19h-1zM778 487h1v1h-1zM779 467h3v1h-3zM779 487h3v1h-3zM779 468h1v19h-1zM781 468h1v19h-1zM782 487h1v1h-1zM783 467h2v1h-2zM783 487h2v1h-2zM783 468h2v19h-2zM785 467h1v1h-1zM786 467h2v1h-2zM786 487h2v1h-2zM786 468h2v19h-2zM788 487h1v1h-1zM789 467h3v1h-3zM789 487h3v1h-3zM789 468h1v19h-1zM791 468h1v19h-1zM792 467h1v1h-1zM793 467h7v1h-7zM793 487h7v1h-7zM793 468h1v19h-1zM799 468h1v19h-1z"/><path fill="#429298" d="M304 468h11v19h-11zM318 468h3v19h-3zM324 468h2v19h-2zM329 468h12v19h-12zM344 468h6v19h-6zM358 468h2v19h-2zM368 468h10v19h-10zM393 468h5v19h-5zM401 468h1v19h-1zM415 468h5v19h-5zM423 468h5v19h-5zM431 468h4v19h-4zM438 468h1v19h-1zM442 468h23v19h-23zM468 468h6v19h-6zM477 468h19v19h-19zM500 468h3v19h-3zM506 468h2v19h-2zM513 468h5v19h-5zM521 468h8v19h-8zM532 468h13v19h-13zM551 468h1v19h-1zM566 468h2v19h-2zM573 468h4v19h-4zM583 468h2v19h-2zM591 468h16v19h-16zM614 468h4v19h-4zM621 468h3v19h-3zM630 468h6v19h-6zM639 468h14v19h-14zM656 468h2v19h-2zM661 468h16v19h-16zM680 468h2v19h-2zM686 468h1v19h-1zM690 468h1v19h-1zM696 468h2v19h-2zM701 468h35v19h-35zM741 468h18v19h-18zM762 468h1v19h-1zM766 468h5v19h-5zM774 468h1v19h-1zM780 468h1v19h-1zM790 468h1v19h-1zM794 468h5v19h-5z"/>
<path fill="#45a2a8" d="M303 492h17v1h-17zM303 512h17v1h-17zM303 493h1v19h-1zM319 493h1v19h-1zM320 512h1v1h-1zM321 492h1v1h-1zM321 512h1v1h-1zM321 493h1v19h-1zM322 492h1v1h-1zM323 492h12v1h-12zM323 512h12v1h-12zM323 493h1v19h-1zM334 493h1v19h-1zM335 492h2v1h-2zM337 492h3v1h-3zM337 512h3v1h-3zM337 493h1v19h-1zM339 493h1v19h-1zM340 512h1v1h-1zM341 492h1v1h-1zM341 512h1v1h-1zM341 493h1v19h-1zM342 512h1v1h-1zM343 492h15v1h-15zM343 512h15v1h-15zM343 493h1v19h-1zM357 493h1v19h-1zM358 512h1v1h-1zM359 492h5v1h-5zM359 512h5v1h-5zM359 493h1v19h-1zM363 493h1v19h-1zM364 512h1v1h-1zM365 492h7v1h-7zM365 512h7v1h-7zM365 493h1v19h-1zM371 493h1v19h-1zM372 512h3v1h-3zM375 492h17v1h-17zM375 512h17v1h-17zM375 493h1v19h-1zM391 493h1v19h-1zM392 512h1v1h-1zM393 492h1v1h-1zM393 512h1v1h-1zM393 493h1v19h-1zM394 512h1v1h-1zM395 492h2v1h-2zM395 512h2v1h-2zM395 493h2v19h-2zM397 512h1v1h-1zM398 492h1v1h-1zM398 512h1v1h-1zM398 493h1v19h-1zM399 512h1v1h-1zM400 492h12v1h-12zM400 512h12v1h-12zM400 493h1v19h-1zM411 493h1v19h-1zM412 512h1v1h-1zM413 492h3v1h-3zM413 512h3v1h-3zM413 493h1v19h-1zM415 493h1v19h-1zM416 492h1v1h-1zM417 492h2v1h-2zM417 512h2v1h-2zM417 493h2v19h-2zM419 512h1v1h-1zM420 492h4v1h-4zM420 512h4v1h-4zM420 493h1v19h-1zM423 493h1v19h-1zM424 512h1v1h-1zM425 492h4v1h-4zM425 512h4v1h-4zM425 493h1v19h-1zM428 493h1v19h-1zM429 492h1v1h-1zM430 492h2v1h-2zM430 512h2v1h-2zM430 493h2v19h-2zM432 492h1v1h-1zM433 492h2v1h-2zM433 512h2v1h-2zM433 493h2v19h-2zM435 492h1v1h-1zM436 492h5v1h-5zM436 512h5v1h-5zM436 493h1v19h-1zM440 493h1v19h-1zM441 512h2v1h-2zM443 492h17v1h-17zM443 512h17v1h-17zM443 493h1v19h-1zM459 493h1v19h-1zM460 492h1v1h-1zM461 492h2v1h-2zM461 512h2v1h-2zM461 493h2v19h-2zM463 512h1v1h-1zM464 492h8v1h-8zM464 512h8v1h-8zM464 493h1v19h-1zM471 493h1v19h-1zM472 512h1v1h-1zM473 492h14v1h-14zM473 512h14v1h-14zM473 493h1v19h-1zM486 493h1v19h-1zM487 512h1v1h-1zM488 492h7v1h-7zM488 512h7v1h-7zM488 493h1v19h-1zM494 493h1v19h-1zM495 492h1v1h-1zM496 492h3v1h-3zM496 512h3v1h-3zM496 493h1v19h-1zM498 493h1v19h-1zM499 512h1v1h-1zM500 492h8v1h-8zM500 512h8v1h-8zM500 493h1v19h-1zM507 493h1v19h-1zM508 492h3v1h-3zM511 492h1v1h-1zM511 512h1v1h-1zM511 493h1v19h-1zM512 492h1v1h-1zM513 492h3v1h-3zM513 512h3v1h-3zM513 493h1v19h-1zM515 493h1v19h-1zM516 492h1v1h-1zM517 492h12v1h-12zM517 512h12v1h-12zM517 493h1v19h-1zM528 493h1v19h-1zM529 492h2v1h-2zM531 492h1v1h-1zM531 512h1v1h-1zM531 493h1v19h-1zM532 492h1v1h-1zM533 492h2v1h-2zM533 512h2v1h-2zM533 493h2v19h-2zM535 512h1v1h-1zM536 492h6v1h-6zM536 512h6v1h-6zM536 493h1v19h-1zM541 493h1v19h-1zM542 512h1v1h-1zM543 492h3v1h-3zM543 512h3v1h-3zM543 493h1v19h-1zM545 493h1v19h-1zM546 512h1v1h-1zM547 492h11v1h-11zM547 512h11v1h-11zM547 493h1v19h-1zM557 493h1v19h-1zM558 492h1v1h-1zM559 492h6v1h-6zM559 512h6v1h-6zM559 493h1v19h-1zM564 493h1v19h-1zM565 492h1v1h-1zM566 492h3v1h-3zM566 512h3v1h-3zM566 493h1v19h-1zM568 493h1v19h-1zM569 512h1v1h-1zM570 492h2v1h-2zM570 512h2v1h-2zM570 493h2v19h-2zM572 512h1v1h-1zM573 492h4v1h-4zM573 512h4v1h-4zM573 493h1v19h-1zM576 493h1v19h-1zM577 492h1v1h-1zM578 492h6v1h-6zM578 512h6v1h-6zM578 493h1v19h-1zM583 493h1v19h-1zM584 512h1v1h-1zM585 492h5v1h-5zM585 512h5v1h-5zM585 493h1v19h-1zM589 493h1v19h-1zM590 512h1v1h-1zM591 492h2v1h-2zM591 512h2v1h-2zM591 493h2v19h-2zM593 492h1v1h-1zM594 492h14v1h-14zM594 512h14v1h-14zM594 493h1v19h-1zM607 493h1v19h-1zM608 492h1v1h-1zM609 492h13v1h-13zM609 512h13v1h-13zM609 493h1v19h-1zM621 493h1v19h-1zM622 492h1v1h-1zM623 492h1v1h-1zM623 512h1v1h-1zM623 493h1v19h-1zM624 512h1v1h-1zM625 492h3v1h-3zM625 512h3v1h-3zM625 493h1v19h-1zM627 493h1v19h-1zM628 512h3v1h-3zM631 492h11v1h-11zM631 512h11v1h-11zM631 493h1v19h-1zM641 493h1v19h-1zM642 492h1v1h-1zM643 492h3v1h-3zM643 512h3v1h-3zM643 493h1v19h-1zM645 493h1v19h-1zM646 512h2v1h-2zM648 492h11v1h-11zM648 512h11v1h-11zM648 493h1v19h-1zM658 493h1v19h-1zM659 492h1v1h-1zM660 492h2v1h-2zM660 512h2v1h-2zM660 493h2v19h-2zM662 492h1v1h-1zM663 492h7v1h-7zM663 512h7v1h-7zM663 493h1v19h-1zM669 493h1v19h-1zM670 512h1v1h-1zM671 492h4v1h-4zM671 512h4v1h-4zM671 493h1v19h-1zM674 493h1v19h-1zM675 492h1v1h-1zM676 492h2v1h-2zM676 512h2v1h-2zM676 493h2v19h-2zM678 512h1v1h-1zM679 492h2v1h-2zM679 512h2v1h-2zM679 493h2v19h-2zM681 492h1v1h-1zM682 492h4v1h-4zM682 512h4v1h-4zM682 493h1v19h-1zM685 493h1v19h-1zM686 492h1v1h-1zM687 492h3v1h-3zM687 512h3v1h-3zM687 493h1v19h-1zM689 493h1v19h-1zM690 492h2v1h-2zM692 492h3v1h-3zM692 512h3v1h-3zM692 493h1v19h-1zM694 493h1v19h-1zM695 512h1v1h-1zM696 492h1v1h-1zM696 512h1v1h-1zM696 493h1v19h-1zM697 512h2v1h-2zM699 492h6v1h-6zM699 512h6v1h-6zM699 493h1v19h-1zM704 493h1v19h-1zM705 512h1v1h-1zM706 492h5v1h-5zM706 512h5v1h-5zM706 493h1v19h-1zM710 493h1v19h-1zM711 492h1v1h-1zM712 492h6v1h-6zM712 512h6v1h-6zM712 493h1v19h-1zM717 493h1v19h-1zM718 492h1v1h-1zM719 492h1v1h-1zM719 512h1v1h-1zM719 493h1v19h-1zM720 512h1v1h-1zM721 492h4v1h-4zM721 512h4v1h-4zM721 493h1v19h-1zM724 493h1v19h-1zM725 492h1v1h-1zM726 492h4v1h-4zM726 512h4v1h-4zM726 493h1v19h-1zM729 493h1v19h-1zM730 492h1v1h-1zM731 492h6v1h-6zM731 512h6v1h-6zM731 493h1v19h-1zM736 493h1v19h-1zM737 512h1v1h-1zM738 492h6v1h-6zM738 512h6v1h-6zM738 493h1v19h-1zM743 493h1v19h-1zM744 492h2v1h-2zM746 492h2v1h-2zM746 512h2v1h-2zM746 493h2v19h-2zM748 492h1v1h-1zM749 492h4v1h-4zM749 512h4v1h-4zM749 493h1v19h-1zM752 493h1v19h-1zM753 492h2v1h-2zM755 492h4v1h-4zM755 512h4v1h-4zM755 493h1v19h-1zM758 493h1v19h-1zM759 492h1v1h-1zM760 492h24v1h-24zM760 512h24v1h-24zM760 493h1v19h-1zM783 493h1v19h-1zM784 512h1v1h-1zM785 492h8v1h-8zM785 512h8v1h-8zM785 493h1v19h-1zM792 493h1v19h-1zM793 512h1v1h-1zM794 492h6v1h-6zM794 512h6v1h-6zM794 493h1v19h-1zM799 493h1v19h-1z"/><path fill="#429298" d="M304 493h15v19h-15zM324 493h10v19h-10zM338 493h1v19h-1zM344 493h13v19h-13zM360 493h3v19h-3zM366 493h5v19h-5zM376 493h15v19h-15zM401 493h10v19h-10zM414 493h1v19h-1zM421 493h2v19h-2zM426 493h2v19h-2zM437 493h3v19h-3zM444 493h15v19h-15zM465 493h6v19h-6zM474 493h12v19h-12zM489 493h5v19h-5zM497 493h1v19h-1zM501 493h6v19h-6zM514 493h1v19h-1zM518 493h10v19h-10zM537 493h4v19h-4zM544 493h1v19h-1zM548 493h9v19h-9zM560 493h4v19h-4zM567 493h1v19h-1zM574 493h2v19h-2zM579 493h4v19h-4zM586 493h3v19h-3zM595 493h12v19h-12zM610 493h11v19h-11zM626 493h1v19h-1zM632 493h9v19h-9zM644 493h1v19h-1zM649 493h9v19h-9zM664 493h5v19h-5zM672 493h2v19h-2zM683 493h2v19h-2zM688 493h1v19h-1zM693 493h1v19h-1zM700 493h4v19h-4zM707 493h3v19h-3zM713 493h4v19h-4zM722 493h2v19h-2zM727 493h2v19h-2zM732 493h4v19h-4zM739 493h4v19h-4zM750 493h2v19h-2zM756 493h2v19h-2zM761 493h22v19h-22zM786 493h6v19h-6zM795 493h4v19h-4z"/>
<path fill="#45a2a8" d="M303 517h1v1h-1zM304 517h2v1h-2zM304 537h2v1h-2zM304 518h2v19h-2zM306 517h1v1h-1zM307 517h12v1h-12zM307 537h12v1h-12zM307 518h1v19h-1zM318 518h1v19h-1zM319 517h1v1h-1zM320 517h4v1h-4zM320 537h4v1h-4zM320 518h1v19h-1zM323 518h1v19h-1zM324 537h1v1h-1zM325 517h4v1h-4zM325 537h4v1h-4zM325 518h1v19h-1zM328 518h1v19h-1zM329 537h1v1h-1zM330 517h5v1h-5zM330 537h5v1h-5zM330 518h1v19h-1zM334 518h1v19h-1zM335 517h1v1h-1zM336 517h2v1h-2zM336 537h2v1h-2zM336 518h2v19h-2zM338 537h1v1h-1zM339 517h6v1h-6zM339 537h6v1h-6zM339 518h1v19h-1zM344 518h1v19h-1zM345 537h1v1h-1zM346 517h5v1h-5zM346 537h5v1h-5zM346 518h1v19h-1zM350 518h1v19h-1zM351 537h1v1h-1zM352 517h2v1h-2zM352 537h2v1h-2zM352 518h2v19h-2zM354 537h1v1h-1zM355 517h4v1h-4zM355 537h4v1h-4zM355 518h1v19h-1zM358 518h1v19h-1zM359 537h1v1h-1zM360 517h10v1h-10zM360 537h10v1h-10zM360 518h1v19h-1zM369 518h1v19h-1zM370 537h1v1h-1zM371 517h3v1h-3zM371 537h3v1h-3zM371 518h1v19h-1zM373 518h1v19h-1zM374 537h1v1h-1zM375 517h5v1h-5zM375 537h5v1h-5zM375 518h1v19h-1zM379 518h1v19h-1zM380 537h1v1h-1zM381 517h11v1h-11zM381 537h11v1h-11zM381 518h1v19h-1zM391 518h1v19h-1zM392 537h1v1h-1zM393 517h4v1h-4zM393 537h4v1h-4zM393 518h1v19h-1zM396 518h1v19h-1zM397 537h2v1h-2zM399 517h2v1h-2zM399 537h2v1h-2zM399 518h2v19h-2zM401 517h1v1h-1zM402 517h3v1h-3zM402 537h3v1h-3zM402 518h1v19h-1zM404 518h1v19h-1zM405 517h1v1h-1zM406 517h8v1h-8zM406 537h8v1h-8zM406 518h1v19h-1zM413 518h1v19h-1zM414 537h1v1h-1zM415 517h1v1h-1zM415 537h1v1h-1zM415 518h1v19h-1zM416 537h1v1h-1zM417 517h1v1h-1zM417 537h1v1h-1zM417 518h1v19h-1zM418 537h1v1h-1zM419 517h4v1h-4zM419 537h4v1h-4zM419 518h1v19h-1zM422 518h1v19h-1zM423 537h1v1h-1zM424 517h7v1h-7zM424 537h7v1h-7zM424 518h1v19h-1zM430 518h1v19h-1zM431 517h1v1h-1zM432 517h3v1h-3zM432 537h3v1h-3zM432 518h1v19h-1zM434 518h1v19h-1zM435 537h1v1h-1zM436 517h13v1h-13zM436 537h13v1h-13zM436 518h1v19h-1zM448 518h1v19h-1zM449 537h1v1h-1zM450 517h2v1h-2zM450 537h2v1h-2zM450 518h2v19h-2zM452 517h1v1h-1zM453 517h3v1h-3zM453 537h3v1h-3zM453 518h1v19h-1zM455 518h1v19h-1zM456 537h1v1h-1zM457 517h7v1h-7zM457 537h7v1h-7zM457 518h1v19h-1zM463 518h1v19h-1zM464 537h1v1h-1zM465 517h3v1h-3zM465 537h3v1h-3zM465 518h1v19h-1zM467 518h1v19h-1zM468 517h1v1h-1zM469 517h2v1h-2zM469 537h2v1h-2zM469 518h2v19h-2zM471 537h3v1h-3zM474 517h1v1h-1zM474 537h1v1h-1zM474 518h1v19h-1zM475 517h1v1h-1zM476 517h2v1h-2zM476 537h2v1h-2zM476 518h2v19h-2zM478 517h2v1h-2zM480 517h2v1h-2zM480 537h2v1h-2zM480 518h2v19h-2zM482 537h1v1h-1zM483 517h14v1h-14zM483 537h14v1h-14zM483 518h1v19h-1zM496 518h1v19h-1zM497 517h1v1h-1zM498 517h5v1h-5zM498 537h5v1h-5zM498 518h1v19h-1zM502 518h1v19h-1zM503 517h1v1h-1zM504 517h8v1h-8zM504 537h8v1h-8zM504 518h1v19h-1zM511 518h1v19h-1zM512 537h1v1h-1zM513 517h4v1h-4zM513 537h4v1h-4zM513 518h1v19h-1zM516 518h1v19h-1zM517 517h1v1h-1zM518 517h1v1h-1zM518 537h1v1h-1zM518 518h1v19h-1zM519 537h1v1h-1zM520 517h8v1h-8zM520 537h8v1h-8zM520 518h1v19h-1zM527 518h1v19h-1zM528 537h1v1h-1zM529 517h8v1h-8zM529 537h8v1h-8zM529 518h1v19h-1zM536 518h1v19h-1zM537 537h1v1h-1zM538 517h3v1h-3zM538 537h3v1h-3zM538 518h1v19h-1zM540 518h1v19h-1zM541 517h2v1h-2zM543 517h2v1h-2zM543 537h2v1h-2zM543 518h2v19h-2zM545 517h1v1h-1zM546 517h4v1h-4zM546 537h4v1h-4zM546 518h1v19h-1zM549 518h1v19h-1zM550 517h2v1h-2zM552 517h4v1h-4zM552 537h4v1h-4zM552 518h1v19h-1zM555 518h1v19h-1zM556 537h1v1h-1zM557 517h14v1h-14zM557 537h14v1h-14zM557 518h1v19h-1zM570 518h1v19h-1zM571 517h1v1h-1zM572 517h2v1h-2zM572 537h2v1h-2zM572 518h2v19h-2zM574 537h1v1h-1zM575 517h5v1h-5zM575 537h5v1h-5zM575 518h1v19h-1zM579 518h1v19h-1zM580 537h1v1h-1zM581 517h4v1h-4zM581 537h4v1h-4zM581 518h1v19h-1zM584 518h1v19h-1zM585 517h3v1h-3zM588 517h5v1h-5zM588 537h5v1h-5zM588 518h1v19h-1zM592 518h1v19h-1zM593 517h1v1h-1zM594 517h1v1h-1zM594 537h1v1h-1zM594 518h1v19h-1zM595 537h1v1h-1zM596 517h1v1h-1zM596 537h1v1h-1zM596 518h1v19h-1zM597 517h1v1h-1zM598 517h1v1h-1zM598 537h1v1h-1zM598 518h1v19h-1zM599 517h2v1h-2zM601 517h12v1h-12zM601 537h12v1h-12zM601 518h1v19h-1zM612 518h1v19h-1zM613 537h1v1h-1zM614 517h5v1h-5zM614 537h5v1h-5zM614 518h1v19h-1zM618 518h1v19h-1zM619 517h1v1h-1zM620 517h6v1h-6zM620 537h6v1h-6zM620 518h1v19h-1zM625 518h1v19h-1zM626 517h1v1h-1zM627 517h2v1h-2zM627 537h2v1h-2zM627 518h2v19h-2zM629 517h1v1h-1zM630 517h1v1h-1zM630 537h1v1h-1zM630 518h1v19h-1zM631 537h1v1h-1zM632 517h1v1h-1zM632 537h1v1h-1zM632 518h1v19h-1zM633 537h1v1h-1zM634 517h1v1h-1zM634 537h1v1h-1zM634 518h1v19h-1zM635 517h2v1h-2zM637 517h21v1h-21zM637 537h21v1h-21zM637 518h1v19h-1zM657 518h1v19h-1zM658 537h1v1h-1zM659 517h3v1h-3zM659 537h3v1h-3zM659 518h1v19h-1zM661 518h1v19h-1zM662 537h1v1h-1zM663 517h7v1h-7zM663 537h7v1h-7zM663 518h1v19h-1zM669 518h1v19h-1zM670 517h1v1h-1zM671 517h5v1h-5zM671 537h5v1h-5zM671 518h1v19h-1zM675 518h1v19h-1zM676 517h1v1h-1zM677 517h15v1h-15zM677 537h15v1h-15zM677 518h1v19h-1zM691 518h1v19h-1zM692 537h1v1h-1zM693 517h1v1h-1zM693 537h1v1h-1zM693 518h1v19h-1zM694 537h1v1h-1zM695 517h8v1h-8zM695 537h8v1h-8zM695 518h1v19h-1zM702 518h1v19h-1zM703 537h1v1h-1zM704 517h7v1h-7zM704 537h7v1h-7zM704 518h1v19h-1zM710 518h1v19h-1zM711 537h1v1h-1zM712 517h11v1h-11zM712 537h11v1h-11zM712 518h1v19h-1zM722 518h1v19h-1zM723 517h2v1h-2zM725 517h2v1h-2zM725 537h2v1h-2zM725 518h2v19h-2zM727 537h1v1h-1zM728 517h2v1h-2zM728 537h2v1h-2zM728 518h2v19h-2zM730 517h2v1h-2zM732 517h1v1h-1zM732 537h1v1h-1zM732 518h1v19h-1zM733 517h1v1h-1zM734 517h8v1h-8zM734 537h8v1h-8zM734 518h1v19h-1zM741 518h1v19h-1zM742 517h1v1h-1zM743 517h1v1h-1zM743 537h1v1h-1zM743 518h1v19h-1zM744 517h2v1h-2zM746 517h7v1h-7zM746 537h7v1h-7zM746 518h1v19h-1zM752 518h1v19h-1zM753 517h1v1h-1zM754 517h4v1h-4zM754 537h4v1h-4zM754 518h1v19h-1zM757 518h1v19h-1zM758 537h1v1h-1zM759 517h7v1h-7zM759 537h7v1h-7zM759 518h1v19h-1zM765 518h1v19h-1zM766 537h1v1h-1zM767 517h1v1h-1zM767 537h1v1h-1zM767 518h1v19h-1zM768 537h1v1h-1zM769 517h6v1h-6zM769 537h6v1h-6zM769 518h1v19h-1zM774 518h1v19h-1zM775 517h1v1h-1zM776 517h24v1h-24zM776 537h24v1h-24zM776 518h1v19h-1zM799 518h1v19h-1z"/><path fill="#429298" d="M308 518h10v19h-10zM321 518h2v19h-2zM326 518h2v19h-2zM331 518h3v19h-3zM340 518h4v19h-4zM347 518h3v19h-3zM356 518h2v19h-2zM361 518h8v19h-8zM372 518h1v19h-1zM376 518h3v19h-3zM382 518h9v19h-9zM394 518h2v19h-2zM403 518h1v19h-1zM407 518h6v19h-6zM420 518h2v19h-2zM425 518h5v19h-5zM433 518h1v19h-1zM437 518h11v19h-11zM454 518h1v19h-1zM458 518h5v19h-5zM466 518h1v19h-1zM484 518h12v19h-12zM499 518h3v19h-3zM505 518h6v19h-6zM514 518h2v19h-2zM521 518h6v19h-6zM530 518h6v19h-6zM539 518h1v19h-1zM547 518h2v19h-2zM553 518h2v19h-2zM558 518h12v19h-12zM576 518h3v19h-3zM582 518h2v19h-2zM589 518h3v19h-3zM602 518h10v19h-10zM615 518h3v19h-3zM621 518h4v19h-4zM638 518h19v19h-19zM660 518h1v19h-1zM664 518h5v19h-5zM672 518h3v19h-3zM678 518h13v19h-13zM696 518h6v19h-6zM705 518h5v19h-5zM713 518h9v19h-9zM735 518h6v19h-6zM747 518h5v19h-5zM755 518h2v19h-2zM760 518h5v19h-5zM770 518h4v19h-4zM777 518h22v19h-22z"/>
<path fill="#45a2a8" d="M303 542h3v1h-3zM303 562h3v1h-3zM303 543h1v19h-1zM305 543h1v19h-1zM306 542h1v1h-1zM307 542h7v1h-7zM307 562h7v1h-7zM307 543h1v19h-1zM313 543h1v19h-1zM314 542h1v1h-1zM315 542h5v1h-5zM315 562h5v1h-5zM315 543h1v19h-1zM319 543h1v19h-1zM320 542h1v1h-1zM321 542h9v1h-9zM321 562h9v1h-9zM321 543h1v19h-1zM329 543h1v19h-1zM330 542h1v1h-1zM331 542h15v1h-15zM331 562h15v1h-15zM331 543h1v19h-1zM345 543h1v19h-1zM346 562h1v1h-1zM347 542h4v1h-4zM347 562h4v1h-4zM347 543h1v19h-1zM350 543h1v19h-1zM351 542h2v1h-2zM353 542h5v1h-5zM353 562h5v1h-5zM353 543h1v19h-1zM357 543h1v19h-1zM358 562h1v1h-1zM359 542h3v1h-3zM359 562h3v1h-3zM359 543h1v19h-1zM361 543h1v19h-1zM362 562h1v1h-1zM363 542h3v1h-3zM363 562h3v1h-3zM363 543h1v19h-1zM365 543h1v19h-1zM366 542h1v1h-1zM367 542h7v1h-7zM367 562h7v1h-7zM367 543h1v19h-1zM373 543h1v19h-1zM374 542h1v1h-1zM375 542h12v1h-12zM375 562h12v1h-12zM375 543h1v19h-1zM386 543h1v19h-1zM387 542h1v1h-1zM388 542h13v1h-13zM388 562h13v1h-13zM388 543h1v19h-1zM400 543h1v19h-1zM401 562h1v1h-1zM402 542h4v1h-4zM402 562h4v1h-4zM402 543h1v19h-1zM405 543h1v19h-1zM406 542h1v1h-1zM407 542h4v1h-4zM407 562h4v1h-4zM407 543h1v19h-1zM410 543h1v19h-1zM411 562h1v1h-1zM412 542h3v1h-3zM412 562h3v1h-3zM412 543h1v19h-1zM414 543h1v19h-1zM415 542h1v1h-1zM416 542h2v1h-2zM416 562h2v1h-2zM416 543h2v19h-2zM418 562h1v1h-1zM419 542h9v1h-9zM419 562h9v1h-9zM419 543h1v19h-1zM427 543h1v19h-1zM428 542h1v1h-1zM429 542h1v1h-1zM429 562h1v1h-1zM429 543h1v19h-1zM430 542h2v1h-2zM432 542h8v1h-8zM432 562h8v1h-8zM432 543h1v19h-1zM439 543h1v19h-1zM440 542h1v1h-1zM441 542h10v1h-10zM441 562h10v1h-10zM441 543h1v19h-1zM450 543h1v19h-1zM451 562h1v1h-1zM452 542h12v1h-12zM452 562h12v1h-12zM452 543h1v19h-1zM463 543h1v19h-1zM464 562h1v1h-1zM465 542h1v1h-1zM465 562h1v1h-1zM465 543h1v19h-1zM466 562h1v1h-1zM467 542h6v1h-6zM467 562h6v1h-6zM467 543h1v19h-1zM472 543h1v19h-1zM473 542h1v1h-1zM474 542h6v1h-6zM474 562h6v1h-6zM474 543h1v19h-1zM479 543h1v19h-1zM480 542h1v1h-1zM481 542h14v1h-14zM481 562h14v1h-14zM481 543h1v19h-1zM494 543h1v19h-1zM495 562h1v1h-1zM496 542h10v1h-10zM496 562h10v1h-10zM496 543h1v19h-1zM505 543h1v19h-1zM506 542h2v1h-2zM508 542h2v1h-2zM508 562h2v1h-2zM508 543h2v19h-2zM510 562h1v1h-1zM511 542h14v1h-14zM511 562h14v1h-14zM511 543h1v19h-1zM524 543h1v19h-1zM525 542h1v1h-1zM526 542h2v1h-2zM526 562h2v1h-2zM526 543h2v19h-2zM528 562h1v1h-1zM529 542h3v1h-3zM529 562h3v1h-3zM529 543h1v19h-1zM531 543h1v19h-1zM532 562h1v1h-1zM533 542h5v1h-5zM533 562h5v1h-5zM533 543h1v19h-1zM537 543h1v19h-1zM538 542h2v1h-2zM540 542h9v1h-9zM540 562h9v1h-9zM540 543h1v19h-1zM548 543h1v19h-1zM549 562h1v1h-1zM550 542h1v1h-1zM550 562h1v1h-1zM550 543h1v19h-1zM551 542h1v1h-1zM552 542h1v1h-1zM552 562h1v1h-1zM552 543h1v19h-1zM553 562h2v1h-2zM555 542h14v1h-14zM555 562h14v1h-14zM555 543h1v19h-1zM568 543h1v19h-1zM569 562h1v1h-1zM570 542h4v1h-4zM570 562h4v1h-4zM570 543h1v19h-1zM573 543h1v19h-1zM574 542h1v1h-1zM575 542h1v1h-1zM575 562h1v1h-1zM575 543h1v19h-1zM576 562h2v1h-2zM578 542h6v1h-6zM578 562h6v1h-6zM578 543h1v19h-1zM583 543h1v19h-1zM584 562h1v1h-1zM585 542h1v1h-1zM585 562h1v1h-1zM585 543h1v19h-1zM586 542h1v1h-1zM587 542h12v1h-12zM587 562h12v1h-12zM587 543h1v19h-1zM598 543h1v19h-1zM599 542h1v1h-1zM600 542h1v1h-1zM600 562h1v1h-1zM600 543h1v19h-1zM601 562h1v1h-1zM602 542h31v1h-31zM602 562h31v1h-31zM602 543h1v19h-1zM632 543h1v19h-1zM633 542h1v1h-1zM634 542h3v1h-3zM634 562h3v1h-3zM634 543h1v19h-1zM636 543h1v19h-1zM637 562h1v1h-1zM638 542h23v1h-23zM638 562h23v1h-23zM638 543h1v19h-1zM660 543h1v19h-1zM661 542h1v1h-1zM662 542h8v1h-8zM662 562h8v1h-8zM662 543h1v19h-1zM669 543h1v19h-1zM670 542h1v1h-1zM671 542h3v1h-3zM671 562h3v1h-3zM671 543h1v19h-1zM673 543h1v19h-1zM674 562h2v1h-2zM676 542h7v1h-7zM676 562h7v1h-7zM676 543h1v19h-1zM682 543h1v19h-1zM683 562h1v1h-1zM684 542h3v1h-3zM684 562h3v1h-3zM684 543h1v19h-1zM686 543h1v19h-1zM687 542h1v1h-1zM688 542h1v1h-1zM688 562h1v1h-1zM688 543h1v19h-1zM689 542h1v1h-1zM690 542h1v1h-1zM690 562h1v1h-1zM690 543h1v19h-1zM691 542h3v1h-3zM694 542h11v1h-11zM694 562h11v1h-11zM694 543h1v19h-1zM704 543h1v19h-1zM705 562h1v1h-1zM706 542h2v1h-2zM706 562h2v1h-2zM706 543h2v19h-2zM708 562h1v1h-1zM709 542h5v1h-5zM709 562h5v1h-5zM709 543h1v19h-1zM713 543h1v19h-1zM714 562h1v1h-1zM715 542h1v1h-1zM715 562h1v1h-1zM715 543h1v19h-1zM716 542h1v1h-1zM717 542h1v1h-1zM717 562h1v1h-1zM717 543h1v19h-1zM718 542h1v1h-1zM719 542h1v1h-1zM719 562h1v1h-1zM719 543h1v19h-1zM720 562h1v1h-1zM721 542h6v1h-6zM721 562h6v1h-6zM721 543h1v19h-1zM726 543h1v19h-1zM727 542h1v1h-1zM728 542h3v1h-3zM728 562h3v1h-3zM728 543h1v19h-1zM730 543h1v19h-1zM731 562h1v1h-1zM732 542h1v1h-1zM732 562h1v1h-1zM732 543h1v19h-1zM733 562h1v1h-1zM734 542h1v1h-1zM734 562h1v1h-1zM734 543h1v19h-1zM735 542h4v1h-4zM739 542h7v1h-7zM739 562h7v1h-7zM739 543h1v19h-1zM745 543h1v19h-1zM746 542h1v1h-1zM747 542h5v1h-5zM747 562h5v1h-5zM747 543h1v19h-1zM751 543h1v19h-1zM752 562h1v1h-1zM753 542h1v1h-1zM753 562h1v1h-1zM753 543h1v19h-1zM754 542h2v1h-2zM756 542h5v1h-5zM756 562h5v1h-5zM756 543h1v19h-1zM760 543h1v19h-1zM761 562h1v1h-1zM762 542h1v1h-1zM762 562h1v1h-1zM762 543h1v19h-1zM763 562h1v1h-1zM764 542h6v1h-6zM764 562h6v1h-6zM764 543h1v19h-1zM769 543h1v19h-1zM770 542h1v1h-1zM771 542h1v1h-1zM771 562h1v1h-1zM771 543h1v19h-1zM772 562h1v1h-1zM773 542h3v1h-3zM773 562h3v1h-3zM773 543h1v19h-1zM775 543h1v19h-1zM776 542h1v1h-1zM777 542h4v1h-4zM777 562h4v1h-4zM777 543h1v19h-1zM780 543h1v19h-1zM781 562h2v1h-2zM783 542h6v1h-6zM783 562h6v1h-6zM783 543h1v19h-1zM788 543h1v19h-1zM789 562h1v1h-1zM790 542h2v1h-2zM790 562h2v1h-2zM790 543h2v19h-2zM792 542h1v1h-1zM793 542h3v1h-3zM793 562h3v1h-3zM793 543h1v19h-1zM795 543h1v19h-1zM796 562h3v1h-3zM799 542h1v1h-1zM799 562h1v1h-1zM799 543h1v19h-1z"/><path fill="#429298" d="M304 543h1v19h-1zM308 543h5v19h-5zM316 543h3v19h-3zM322 543h7v19h-7zM332 543h13v19h-13zM348 543h2v19h-2zM354 543h3v19h-3zM360 543h1v19h-1zM364 543h1v19h-1zM368 543h5v19h-5zM376 543h10v19h-10zM389 543h11v19h-11zM403 543h2v19h-2zM408 543h2v19h-2zM413 543h1v19h-1zM420 543h7v19h-7zM433 543h6v19h-6zM442 543h8v19h-8zM453 543h10v19h-10zM468 543h4v19h-4zM475 543h4v19h-4zM482 543h12v19h-12zM497 543h8v19h-8zM512 543h12v19h-12zM530 543h1v19h-1zM534 543h3v19h-3zM541 543h7v19h-7zM556 543h12v19h-12zM571 543h2v19h-2zM579 543h4v19h-4zM588 543h10v19h-10zM603 543h29v19h-29zM635 543h1v19h-1zM639 543h21v19h-21zM663 543h6v19h-6zM672 543h1v19h-1zM677 543h5v19h-5zM685 543h1v19h-1zM695 543h9v19h-9zM710 543h3v19h-3zM722 543h4v19h-4zM729 543h1v19h-1zM740 543h5v19h-5zM748 543h3v19h-3zM757 543h3v19h-3zM765 543h4v19h-4zM774 543h1v19h-1zM778 543h2v19h-2zM784 543h4v19h-4zM794 543h1v19h-1z"/>
<path fill="#45a2a8" d="M303 567h1v1h-1zM303 587h1v1h-1zM303 568h1v19h-1zM304 567h1v1h-1zM305 567h3v1h-3zM305 587h3v1h-3zM305 568h1v19h-1zM307 568h1v19h-1zM308 567h1v1h-1zM309 567h3v1h-3zM309 587h3v1h-3zM309 568h1v19h-1zM311 568h1v19h-1zM312 587h2v1h-2zM314 567h1v1h-1zM314 587h1v1h-1zM314 568h1v19h-1zM315 567h1v1h-1zM316 567h2v1h-2zM316 587h2v1h-2zM316 568h2v19h-2zM318 567h1v1h-1zM319 567h8v1h-8zM319 587h8v1h-8zM319 568h1v19h-1zM326 568h1v19h-1zM327 587h1v1h-1zM328 567h8v1h-8zM328 587h8v1h-8zM328 568h1v19h-1zM335 568h1v19h-1zM336 587h1v1h-1zM337 567h3v1h-3zM337 587h3v1h-3zM337 568h1v19h-1zM339 568h1v19h-1zM340 587h2v1h-2zM342 567h2v1h-2zM342 587h2v1h-2zM342 568h2v19h-2zM344 567h2v1h-2zM346 567h5v1h-5zM346 587h5v1h-5zM346 568h1v19h-1zM350 568h1v19h-1zM351 567h1v1h-1zM352 567h11v1h-11zM352 587h11v1h-11zM352 568h1v19h-1zM362 568h1v19h-1zM363 587h1v1h-1zM364 567h4v1h-4zM364 587h4v1h-4zM364 568h1v19h-1zM367 568h1v19h-1zM368 587h1v1h-1zM369 567h16v1h-16zM369 587h16v1h-16zM369 568h1v19h-1zM384 568h1v19h-1zM385 567h1v1h-1zM386 567h4v1h-4zM386 587h4v1h-4zM386 568h1v19h-1zM389 568h1v19h-1zM390 567h3v1h-3zM393 567h16v1h-16zM393 587h16v1h-16zM393 568h1v19h-1zM408 568h1v19h-1zM409 587h2v1h-2zM411 567h1v1h-1zM411 587h1v1h-1zM411 568h1v19h-1zM412 567h1v1h-1zM413 567h1v1h-1zM413 587h1v1h-1zM413 568h1v19h-1zM414 587h1v1h-1zM415 567h6v1h-6zM415 587h6v1h-6zM415 568h1v19h-1zM420 568h1v19h-1zM421 567h1v1h-1zM422 567h1v1h-1zM422 587h1v1h-1zM422 568h1v19h-1zM423 587h1v1h-1zM424 567h7v1h-7zM424 587h7v1h-7zM424 568h1v19h-1zM430 568h1v19h-1zM431 587h1v1h-1zM432 567h12v1h-12zM432 587h12v1h-12zM432 568h1v19h-1zM443 568h1v19h-1zM444 587h1v1h-1zM445 567h15v1h-15zM445 587h15v1h-15zM445 568h1v19h-1zM459 568h1v19h-1zM460 567h1v1h-1zM461 567h1v1h-1zM461 587h1v1h-1zM461 568h1v19h-1zM462 567h1v1h-1zM463 567h2v1h-2zM463 587h2v1h-2zM463 568h2v19h-2zM465 587h1v1h-1zM466 567h5v1h-5zM466 587h5v1h-5zM466 568h1v19h-1zM470 568h1v19h-1zM471 567h1v1h-1zM472 567h3v1h-3zM472 587h3v1h-3zM472 568h1v19h-1zM474 568h1v19h-1zM475 567h1v1h-1zM476 567h21v1h-21zM476 587h21v1h-21zM476 568h1v19h-1zM496 568h1v19h-1zM497 587h1v1h-1zM498 567h1v1h-1zM498 587h1v1h-1zM498 568h1v19h-1zM499 567h1v1h-1zM500 567h1v1h-1zM500 587h1v1h-1zM500 568h1v19h-1zM501 587h1v1h-1zM502 567h8v1h-8zM502 587h8v1h-8zM502 568h1v19h-1zM509 568h1v19h-1zM510 567h1v1h-1zM511 567h12v1h-12zM511 587h12v1h-12zM511 568h1v19h-1zM522 568h1v19h-1zM523 587h1v1h-1zM524 567h1v1h-1zM524 587h1v1h-1zM524 568h1v19h-1zM525 567h1v1h-1zM526 567h1v1h-1zM526 587h1v1h-1zM526 568h1v19h-1zM527 567h1v1h-1zM528 567h2v1h-2zM528 587h2v1h-2zM528 568h2v19h-2zM530 587h1v1h-1zM531 567h2v1h-2zM531 587h2v1h-2zM531 568h2v19h-2zM533 567h1v1h-1zM534 567h2v1h-2zM534 587h2v1h-2zM534 568h2v19h-2zM536 587h1v1h-1zM537 567h6v1h-6zM537 587h6v1h-6zM537 568h1v19h-1zM542 568h1v19h-1zM543 567h1v1h-1zM544 567h3v1h-3zM544 587h3v1h-3zM544 568h1v19h-1zM546 568h1v19h-1zM547 567h1v1h-1zM548 567h6v1h-6zM548 587h6v1h-6zM548 568h1v19h-1zM553 568h1v19h-1zM554 567h1v1h-1zM555 567h5v1h-5zM555 587h5v1h-5zM555 568h1v19h-1zM559 568h1v19h-1zM560 567h1v1h-1zM561 567h3v1h-3zM561 587h3v1h-3zM561 568h1v19h-1zM563 568h1v19h-1zM564 587h1v1h-1zM565 567h11v1h-11zM565 587h11v1h-11zM565 568h1v19h-1zM575 568h1v19h-1zM576 567h1v1h-1zM577 567h20v1h-20zM577 587h20v1h-20zM577 568h1v19h-1zM596 568h1v19h-1zM597 587h1v1h-1zM598 567h9v1h-9zM598 587h9v1h-9zM598 568h1v19h-1zM606 568h1v19h-1zM607 587h1v1h-1zM608 567h3v1h-3zM608 587h3v1h-3zM608 568h1v19h-1zM610 568h1v19h-1zM611 587h1v1h-1zM612 567h1v1h-1zM612 587h1v1h-1zM612 568h1v19h-1zM613 587h1v1h-1zM614 567h5v1h-5zM614 587h5v1h-5zM614 568h1v19h-1zM618 568h1v19h-1zM619 567h1v1h-1zM620 567h1v1h-1zM620 587h1v1h-1zM620 568h1v19h-1zM621 587h2v1h-2zM623 567h1v1h-1zM623 587h1v1h-1zM623 568h1v19h-1zM624 567h1v1h-1zM625 567h2v1h-2zM625 587h2v1h-2zM625 568h2v19h-2zM627 567h1v1h-1zM628 567h1v1h-1zM628 587h1v1h-1zM628 568h1v19h-1zM629 567h1v1h-1zM630 567h16v1h-16zM630 587h16v1h-16zM630 568h1v19h-1zM645 568h1v19h-1zM646 587h1v1h-1zM647 567h3v1h-3zM647 587h3v1h-3zM647 568h1v19h-1zM649 568h1v19h-1zM650 587h1v1h-1zM651 567h1v1h-1zM651 587h1v1h-1zM651 568h1v19h-1zM652 587h1v1h-1zM653 567h1v1h-1zM653 587h1v1h-1zM653 568h1v19h-1zM654 567h1v1h-1zM655 567h1v1h-1zM655 587h1v1h-1zM655 568h1v19h-1zM656 587h1v1h-1zM657 567h15v1h-15zM657 587h15v1h-15zM657 568h1v19h-1zM671 568h1v19h-1zM672 567h2v1h-2zM674 567h5v1h-5zM674 587h5v1h-5zM674 568h1v19h-1zM678 568h1v19h-1zM679 567h1v1h-1zM680 567h1v1h-1zM680 587h1v1h-1zM680 568h1v19h-1zM681 587h1v1h-1zM682 567h1v1h-1zM682 587h1v1h-1zM682 568h1v19h-1zM683 567h1v1h-1zM684 567h17v1h-17zM684 587h17v1h-17zM684 568h1v19h-1zM700 568h1v19h-1zM701 567h1v1h-1zM702 567h7v1h-7zM702 587h7v1h-7zM702 568h1v19h-1zM708 568h1v19h-1zM709 587h2v1h-2zM711 567h9v1h-9zM711 587h9v1h-9zM711 568h1v19h-1zM719 568h1v19h-1zM720 567h1v1h-1zM721 567h1v1h-1zM721 587h1v1h-1zM721 568h1v19h-1zM722 587h1v1h-1zM723 567h8v1h-8zM723 587h8v1h-8zM723 568h1v19h-1zM730 568h1v19h-1zM731 567h1v1h-1zM732 567h1v1h-1zM732 587h1v1h-1zM732 568h1v19h-1zM733 587h1v1h-1zM734 567h4v1h-4zM734 587h4v1h-4zM734 568h1v19h-1zM737 568h1v19h-1zM738 587h1v1h-1zM739 567h20v1h-20zM739 587h20v1h-20zM739 568h1v19h-1zM758 568h1v19h-1zM759 567h1v1h-1zM760 567h1v1h-1zM760 587h1v1h-1zM760 568h1v19h-1zM761 567h1v1h-1zM762 567h4v1h-4zM762 587h4v1h-4zM762 568h1v19h-1zM765 568h1v19h-1zM766 567h1v1h-1zM767 567h3v1h-3zM767 587h3v1h-3zM767 568h1v19h-1zM769 568h1v19h-1zM770 587h1v1h-1zM771 567h7v1h-7zM771 587h7v1h-7zM771 568h1v19h-1zM777 568h1v19h-1zM778 567h1v1h-1zM779 567h3v1h-3zM779 587h3v1h-3zM779 568h1v19h-1zM781 568h1v19h-1zM782 587h1v1h-1zM783 567h6v1h-6zM783 587h6v1h-6zM783 568h1v19h-1zM788 568h1v19h-1zM789 587h1v1h-1zM790 567h10v1h-10zM790 587h10v1h-10zM790 568h1v19h-1zM799 568h1v19h-1z"/><path fill="#429298" d="M306 568h1v19h-1zM310 568h1v19h-1zM320 568h6v19h-6zM329 568h6v19h-6zM338 568h1v19h-1zM347 568h3v19h-3zM353 568h9v19h-9zM365 568h2v19h-2zM370 568h14v19h-14zM387 568h2v19h-2zM394 568h14v19h-14zM416 568h4v19h-4zM425 568h5v19h-5zM433 568h10v19h-10zM446 568h13v19h-13zM467 568h3v19h-3zM473 568h1v19h-1zM477 568h19v19h-19zM503 568h6v19h-6zM512 568h10v19h-10zM538 568h4v19h-4zM545 568h1v19h-1zM549 568h4v19h-4zM556 568h3v19h-3zM562 568h1v19h-1zM566 568h9v19h-9zM578 568h18v19h-18zM599 568h7v19h-7zM609 568h1v19h-1zM615 568h3v19h-3zM631 568h14v19h-14zM648 568h1v19h-1zM658 568h13v19h-13zM675 568h3v19h-3zM685 568h15v19h-15zM703 568h5v19h-5zM712 568h7v19h-7zM724 568h6v19h-6zM735 568h2v19h-2zM740 568h18v19h-18zM763 568h2v19h-2zM768 568h1v19h-1zM772 568h5v19h-5zM780 568h1v19h-1zM784 568h4v19h-4zM791 568h8v19h-8z"/>
<path fill="#45a2a8" d="M303 592h12v1h-12zM303 612h12v1h-12zM303 593h1v19h-1zM314 593h1v19h-1zM315 592h1v1h-1zM316 592h2v1h-2zM316 612h2v1h-2zM316 593h2v19h-2zM318 612h1v1h-1zM319 592h1v1h-1zM319 612h1v1h-1zM319 593h1v19h-1zM320 592h1v1h-1zM321 592h3v1h-3zM321 612h3v1h-3zM321 593h1v19h-1zM323 593h1v19h-1zM324 612h2v1h-2zM326 592h1v1h-1zM326 612h1v1h-1zM326 593h1v19h-1zM327 592h2v1h-2zM329 592h19v1h-19zM329 612h19v1h-19zM329 593h1v19h-1zM347 593h1v19h-1zM348 592h1v1h-1zM349 592h6v1h-6zM349 612h6v1h-6zM349 593h1v19h-1zM354 593h1v19h-1zM355 592h1v1h-1zM356 592h8v1h-8zM356 612h8v1h-8zM356 593h1v19h-1zM363 593h1v19h-1zM364 592h1v1h-1zM365 592h2v1h-2zM365 612h2v1h-2zM365 593h2v19h-2zM367 612h1v1h-1zM368 592h2v1h-2zM368 612h2v1h-2zM368 593h2v19h-2zM370 592h1v1h-1zM371 592h12v1h-12zM371 612h12v1h-12zM371 593h1v19h-1zM382 593h1v19h-1zM383 592h1v1h-1zM384 592h1v1h-1zM384 612h1v1h-1zM384 593h1v19h-1zM385 592h1v1h-1zM386 592h5v1h-5zM386 612h5v1h-5zM386 593h1v19h-1zM390 593h1v19h-1zM391 612h1v1h-1zM392 592h5v1h-5zM392 612h5v1h-5zM392 593h1v19h-1zM396 593h1v19h-1zM397 612h1v1h-1zM398 592h6v1h-6zM398 612h6v1h-6zM398 593h1v19h-1zM403 593h1v19h-1zM404 612h1v1h-1zM405 592h4v1h-4zM405 612h4v1h-4zM405 593h1v19h-1zM408 593h1v19h-1zM409 592h1v1h-1zM410 592h3v1h-3zM410 612h3v1h-3zM410 593h1v19h-1zM412 593h1v19h-1zM413 612h1v1h-1zM414 592h3v1h-3zM414 612h3v1h-3zM414 593h1v19h-1zM416 593h1v19h-1zM417 592h1v1h-1zM418 592h14v1h-14zM418 612h14v1h-14zM418 593h1v19h-1zM431 593h1v19h-1zM432 612h1v1h-1zM433 592h1v1h-1zM433 612h1v1h-1zM433 593h1v19h-1zM434 592h2v1h-2zM436 592h4v1h-4zM436 612h4v1h-4zM436 593h1v19h-1zM439 593h1v19h-1zM440 612h1v1h-1zM441 592h7v1h-7zM441 612h7v1h-7zM441 593h1v19h-1zM447 593h1v19h-1zM448 592h1v1h-1zM449 592h7v1h-7zM449 612h7v1h-7zM449 593h1v19h-1zM455 593h1v19h-1zM456 592h2v1h-2zM458 592h2v1h-2zM458 612h2v1h-2zM458 593h2v19h-2zM460 612h1v1h-1zM461 592h7v1h-7zM461 612h7v1h-7zM461 593h1v19h-1zM467 593h1v19h-1zM468 592h1v1h-1zM469 592h8v1h-8zM469 612h8v1h-8zM469 593h1v19h-1zM476 593h1v19h-1zM477 592h1v1h-1zM478 592h1v1h-1zM478 612h1v1h-1zM478 593h1v19h-1zM479 612h1v1h-1zM480 592h2v1h-2zM480 612h2v1h-2zM480 593h2v19h-2zM482 612h1v1h-1zM483 592h1v1h-1zM483 612h1v1h-1zM483 593h1v19h-1zM484 612h1v1h-1zM485 592h7v1h-7zM485 612h7v1h-7zM485 593h1v19h-1zM491 593h1v19h-1zM492 592h2v1h-2zM494 592h8v1h-8zM494 612h8v1h-8zM494 593h1v19h-1zM501 593h1v19h-1zM502 612h1v1h-1zM503 592h16v1h-16zM503 612h16v1h-16zM503 593h1v19h-1zM518 593h1v19h-1zM519 592h1v1h-1zM520 592h10v1h-10zM520 612h10v1h-10zM520 593h1v19h-1zM529 593h1v19h-1zM530 612h1v1h-1zM531 592h5v1h-5zM531 612h5v1h-5zM531 593h1v19h-1zM535 593h1v19h-1zM536 612h1v1h-1zM537 592h1v1h-1zM537 612h1v1h-1zM537 593h1v19h-1zM538 592h2v1h-2zM540 592h3v1h-3zM540 612h3v1h-3zM540 593h1v19h-1zM542 593h1v19h-1zM543 612h1v1h-1zM544 592h10v1h-10zM544 612h10v1h-10zM544 593h1v19h-1zM553 593h1v19h-1zM554 612h2v1h-2zM556 592h1v1h-1zM556 612h1v1h-1zM556 593h1v19h-1zM557 612h1v1h-1zM558 592h2v1h-2zM558 612h2v1h-2zM558 593h2v19h-2zM560 612h1v1h-1zM561 592h4v1h-4zM561 612h4v1h-4zM561 593h1v19h-1zM564 593h1v19h-1zM565 612h1v1h-1zM566 592h5v1h-5zM566 612h5v1h-5zM566 593h1v19h-1zM570 593h1v19h-1zM571 612h1v1h-1zM572 592h3v1h-3zM572 612h3v1h-3zM572 593h1v19h-1zM574 593h1v19h-1zM575 612h1v1h-1zM576 592h6v1h-6zM576 612h6v1h-6zM576 593h1v19h-1zM581 593h1v19h-1zM582 612h1v1h-1zM583 592h4v1h-4zM583 612h4v1h-4zM583 593h1v19h-1zM586 593h1v19h-1zM587 592h1v1h-1zM588 592h4v1h-4zM588 612h4v1h-4zM588 593h1v19h-1zM591 593h1v19h-1zM592 592h2v1h-2zM594 592h25v1h-25zM594 612h25v1h-25zM594 593h1v19h-1zM618 593h1v19h-1zM619 612h3v1h-3zM622 592h2v1h-2zM622 612h2v1h-2zM622 593h2v19h-2zM624 592h1v1h-1zM625 592h8v1h-8zM625 612h8v1h-8zM625 593h1v19h-1zM632 593h1v19h-1zM633 612h1v1h-1zM634 592h1v1h-1zM634 612h1v1h-1zM634 593h1v19h-1zM635 612h1v1h-1zM636 592h9v1h-9zM636 612h9v1h-9zM636 593h1v19h-1zM644 593h1v19h-1zM645 592h3v1h-3zM648 592h2v1h-2zM648 612h2v1h-2zM648 593h2v19h-2zM650 612h1v1h-1zM651 592h1v1h-1zM651 612h1v1h-1zM651 593h1v19h-1zM652 612h1v1h-1zM653 592h3v1h-3zM653 612h3v1h-3zM653 593h1v19h-1zM655 593h1v19h-1zM656 592h1v1h-1zM657 592h6v1h-6zM657 612h6v1h-6zM657 593h1v19h-1zM662 593h1v19h-1zM663 592h1v1h-1zM664 592h7v1h-7zM664 612h7v1h-7zM664 593h1v19h-1zM670 593h1v19h-1zM671 612h1v1h-1zM672 592h9v1h-9zM672 612h9v1h-9zM672 593h1v19h-1zM680 593h1v19h-1zM681 612h1v1h-1zM682 592h3v1h-3zM682 612h3v1h-3zM682 593h1v19h-1zM684 593h1v19h-1zM685 592h1v1h-1zM686 592h3v1h-3zM686 612h3v1h-3zM686 593h1v19h-1zM688 593h1v19h-1zM689 592h1v1h-1zM690 592h4v1h-4zM690 612h4v1h-4zM690 593h1v19h-1zM693 593h1v19h-1zM694 612h1v1h-1zM695 592h5v1h-5zM695 612h5v1h-5zM695 593h1v19h-1zM699 593h1v19h-1zM700 612h1v1h-1zM701 592h1v1h-1zM701 612h1v1h-1zM701 593h1v19h-1zM702 592h1v1h-1zM703 592h2v1h-2zM703 612h2v1h-2zM703 593h2v19h-2zM705 592h2v1h-2zM707 592h4v1h-4zM707 612h4v1h-4zM707 593h1v19h-1zM710 593h1v19h-1zM711 612h1v1h-1zM712 592h2v1h-2zM712 612h2v1h-2zM712 593h2v19h-2zM714 612h1v1h-1zM715 592h3v1h-3zM715 612h3v1h-3zM715 593h1v19h-1zM717 593h1v19h-1zM718 612h1v1h-1zM719 592h3v1h-3zM719 612h3v1h-3zM719 593h1v19h-1zM721 593h1v19h-1zM722 592h1v1h-1zM723 592h2v1h-2zM723 612h2v1h-2zM723 593h2v19h-2zM725 592h1v1h-1zM726 592h4v1h-4zM726 612h4v1h-4zM726 593h1v19h-1zM729 593h1v19h-1zM730 592h1v1h-1zM731 592h6v1h-6zM731 612h6v1h-6zM731 593h1v19h-1zM736 593h1v19h-1zM737 612h1v1h-1zM738 592h10v1h-10zM738 612h10v1h-10zM738 593h1v19h-1zM747 593h1v19h-1zM748 592h1v1h-1zM749 592h2v1h-2zM749 612h2v1h-2zM749 593h2v19h-2zM751 612h1v1h-1zM752 592h1v1h-1zM752 612h1v1h-1zM752 593h1v19h-1zM753 612h2v1h-2zM755 592h4v1h-4zM755 612h4v1h-4zM755 593h1v19h-1zM758 593h1v19h-1zM759 612h1v1h-1zM760 592h1v1h-1zM760 612h1v1h-1zM760 593h1v19h-1zM761 612h1v1h-1zM762 592h8v1h-8zM762 612h8v1h-8zM762 593h1v19h-1zM769 593h1v19h-1zM770 612h1v1h-1zM771 592h13v1h-13zM771 612h13v1h-13zM771 593h1v19h-1zM783 593h1v19h-1zM784 592h1v1h-1zM785 592h7v1h-7zM785 612h7v1h-7zM785 593h1v19h-1zM791 593h1v19h-1zM792 612h1v1h-1zM793 592h2v1h-2zM793 612h2v1h-2zM793 593h2v19h-2zM795 612h2v1h-2zM797 592h2v1h-2zM797 612h2v1h-2zM797 593h2v19h-2zM799 592h1v1h-1z"/><path fill="#429298" d="M304 593h10v19h-10zM322 593h1v19h-1zM330 593h17v19h-17zM350 593h4v19h-4zM357 593h6v19h-6zM372 593h10v19h-10zM387 593h3v19h-3zM393 593h3v19h-3zM399 593h4v19h-4zM406 593h2v19h-2zM411 593h1v19h-1zM415 593h1v19h-1zM419 593h12v19h-12zM437 593h2v19h-2zM442 593h5v19h-5zM450 593h5v19h-5zM462 593h5v19h-5zM470 593h6v19h-6zM486 593h5v19h-5zM495 593h6v19h-6zM504 593h14v19h-14zM521 593h8v19h-8zM532 593h3v19h-3zM541 593h1v19h-1zM545 593h8v19h-8zM562 593h2v19h-2zM567 593h3v19h-3zM573 593h1v19h-1zM577 593h4v19h-4zM584 593h2v19h-2zM589 593h2v19h-2zM595 593h23v19h-23zM626 593h6v19h-6zM637 593h7v19h-7zM654 593h1v19h-1zM658 593h4v19h-4zM665 593h5v19h-5zM673 593h7v19h-7zM683 593h1v19h-1zM687 593h1v19h-1zM691 593h2v19h-2zM696 593h3v19h-3zM708 593h2v19h-2zM716 593h1v19h-1zM720 593h1v19h-1zM727 593h2v19h-2zM732 593h4v19h-4zM739 593h8v19h-8zM756 593h2v19h-2zM763 593h6v19h-6zM772 593h11v19h-11zM786 593h5v19h-5z"/>
<path fill="#45a2a8" d="M303 617h1v1h-1zM304 617h6v1h-6zM304 637h6v1h-6zM304 618h1v19h-1zM309 618h1v19h-1zM310 617h1v1h-1zM311 617h14v1h-14zM311 637h14v1h-14zM311 618h1v19h-1zM324 618h1v19h-1zM325 617h1v1h-1zM326 617h2v1h-2zM326 637h2v1h-2zM326 618h2v19h-2zM328 617h1v1h-1zM329 617h1v1h-1zM329 637h1v1h-1zM329 618h1v19h-1zM330 637h1v1h-1zM331 617h5v1h-5zM331 637h5v1h-5zM331 618h1v19h-1zM335 618h1v19h-1zM336 637h1v1h-1zM337 617h3v1h-3zM337 637h3v1h-3zM337 618h1v19h-1zM339 618h1v19h-1zM340 637h1v1h-1zM341 617h3v1h-3zM341 637h3v1h-3zM341 618h1v19h-1zM343 618h1v19h-1zM344 617h1v1h-1zM345 617h5v1h-5zM345 637h5v1h-5zM345 618h1v19h-1zM349 618h1v19h-1zM350 637h1v1h-1zM351 617h5v1h-5zM351 637h5v1h-5zM351 618h1v19h-1zM355 618h1v19h-1zM356 617h2v1h-2zM358 617h4v1h-4zM358 637h4v1h-4zM358 618h1v19h-1zM361 618h1v19h-1zM362 617h1v1h-1zM363 617h5v1h-5zM363 637h5v1h-5zM363 618h1v19h-1zM367 618h1v19h-1zM368 617h2v1h-2zM370 617h6v1h-6zM370 637h6v1h-6zM370 618h1v19h-1zM375 618h1v19h-1zM376 637h1v1h-1zM377 617h7v1h-7zM377 637h7v1h-7zM377 618h1v19h-1zM383 618h1v19h-1zM384 637h1v1h-1zM385 617h1v1h-1zM385 637h1v1h-1zM385 618h1v19h-1zM386 637h1v1h-1zM387 617h2v1h-2zM387 637h2v1h-2zM387 618h2v19h-2zM389 617h1v1h-1zM390 617h7v1h-7zM390 637h7v1h-7zM390 618h1v19h-1zM396 618h1v19h-1zM397 637h1v1h-1zM398 617h3v1h-3zM398 637h3v1h-3zM398 618h1v19h-1zM400 618h1v19h-1zM401 637h1v1h-1zM402 617h8v1h-8zM402 637h8v1h-8zM402 618h1v19h-1zM409 618h1v19h-1zM410 637h1v1h-1zM411 617h1v1h-1zM411 637h1v1h-1zM411 618h1v19h-1zM412 637h1v1h-1zM413 617h5v1h-5zM413 637h5v1h-5zM413 618h1v19h-1zM417 618h1v19h-1zM418 637h2v1h-2zM420 617h3v1h-3zM420 637h3v1h-3zM420 618h1v19h-1zM422 618h1v19h-1zM423 637h1v1h-1zM424 617h1v1h-1zM424 637h1v1h-1zM424 618h1v19h-1zM425 637h1v1h-1zM426 617h1v1h-1zM426 637h1v1h-1zM426 618h1v19h-1zM427 637h2v1h-2zM429 617h3v1h-3zM429 637h3v1h-3zM429 618h1v19h-1zM431 618h1v19h-1zM432 637h1v1h-1zM433 617h1v1h-1zM433 637h1v1h-1zM433 618h1v19h-1zM434 617h2v1h-2zM436 617h2v1h-2zM436 637h2v1h-2zM436 618h2v19h-2zM438 617h1v1h-1zM439 617h3v1h-3zM439 637h3v1h-3zM439 618h1v19h-1zM441 618h1v19h-1zM442 617h1v1h-1zM443 617h3v1h-3zM443 637h3v1h-3zM443 618h1v19h-1zM445 618h1v19h-1zM446 617h1v1h-1zM447 617h5v1h-5zM447 637h5v1h-5zM447 618h1v19h-1zM451 618h1v19h-1zM452 617h2v1h-2zM454 617h2v1h-2zM454 637h2v1h-2zM454 618h2v19h-2zM456 637h2v1h-2zM458 617h2v1h-2zM458 637h2v1h-2zM458 618h2v19h-2zM460 617h2v1h-2zM462 617h3v1h-3zM462 637h3v1h-3zM462 618h1v19h-1zM464 618h1v19h-1zM465 637h1v1h-1zM466 617h13v1h-13zM466 637h13v1h-13zM466 618h1v19h-1zM478 618h1v19h-1zM479 617h1v1h-1zM480 617h3v1h-3zM480 637h3v1h-3zM480 618h1v19h-1zM482 618h1v19h-1zM483 617h1v1h-1zM484 617h1v1h-1zM484 637h1v1h-1zM484 618h1v19h-1zM485 637h1v1h-1zM486 617h2v1h-2zM486 637h2v1h-2zM486 618h2v19h-2zM488 617h1v1h-1zM489 617h1v1h-1zM489 637h1v1h-1zM489 618h1v19h-1zM490 617h1v1h-1zM491 617h2v1h-2zM491 637h2v1h-2zM491 618h2v19h-2zM493 637h1v1h-1zM494 617h1v1h-1zM494 637h1v1h-1zM494 618h1v19h-1zM495 617h2v1h-2zM497 617h2v1h-2zM497 637h2v1h-2zM497 618h2v19h-2zM499 617h1v1h-1zM500 617h7v1h-7zM500 637h7v1h-7zM500 618h1v19h-1zM506 618h1v19h-1zM507 617h2v1h-2zM509 617h3v1h-3zM509 637h3v1h-3zM509 618h1v19h-1zM511 618h1v19h-1zM512 637h1v1h-1zM513 617h6v1h-6zM513 637h6v1h-6zM513 618h1v19h-1zM518 618h1v19h-1zM519 617h1v1h-1zM520 617h7v1h-7zM520 637h7v1h-7zM520 618h1v19h-1zM526 618h1v19h-1zM527 617h1v1h-1zM528 617h2v1h-2zM528 637h2v1h-2zM528 618h2v19h-2zM530 617h2v1h-2zM532 617h11v1h-11zM532 637h11v1h-11zM532 618h1v19h-1zM542 618h1v19h-1zM543 637h1v1h-1zM544 617h5v1h-5zM544 637h5v1h-5zM544 618h1v19h-1zM548 618h1v19h-1zM549 617h1v1h-1zM550 617h1v1h-1zM550 637h1v1h-1zM550 618h1v19h-1zM551 637h1v1h-1zM552 617h4v1h-4zM552 637h4v1h-4zM552 618h1v19h-1zM555 618h1v19h-1zM556 637h1v1h-1zM557 617h1v1h-1zM557 637h1v1h-1zM557 618h1v19h-1zM558 617h1v1h-1zM559 617h2v1h-2zM559 637h2v1h-2zM559 618h2v19h-2zM561 617h1v1h-1zM562 617h2v1h-2zM562 637h2v1h-2zM562 618h2v19h-2zM564 617h1v1h-1zM565 617h1v1h-1zM565 637h1v1h-1zM565 618h1v19h-1zM566 637h3v1h-3zM569 617h18v1h-18zM569 637h18v1h-18zM569 618h1v19h-1zM586 618h1v19h-1zM587 617h1v1h-1zM588 617h1v1h-1zM588 637h1v1h-1zM588 618h1v19h-1zM589 637h1v1h-1zM590 617h12v1h-12zM590 637h12v1h-12zM590 618h1v19h-1zM601 618h1v19h-1zM602 617h1v1h-1zM603 617h2v1h-2zM603 637h2v1h-2zM603 618h2v19h-2zM605 637h1v1h-1zM606 617h1v1h-1zM606 637h1v1h-1zM606 618h1v19h-1zM607 617h1v1h-1zM608 617h5v1h-5zM608 637h5v1h-5zM608 618h1v19h-1zM612 618h1v19h-1zM613 637h1v1h-1zM614 617h1v1h-1zM614 637h1v1h-1zM614 618h1v19h-1zM615 617h2v1h-2zM617 617h9v1h-9zM617 637h9v1h-9zM617 618h1v19h-1zM625 618h1v19h-1zM626 637h1v1h-1zM627 617h2v1h-2zM627 637h2v1h-2zM627 618h2v19h-2zM629 637h1v1h-1zM630 617h17v1h-17zM630 637h17v1h-17zM630 618h1v19h-1zM646 618h1v19h-1zM647 617h2v1h-2zM649 617h10v1h-10zM649 637h10v1h-10zM649 618h1v19h-1zM658 618h1v19h-1zM659 637h1v1h-1zM660 617h7v1h-7zM660 637h7v1h-7zM660 618h1v19h-1zM666 618h1v19h-1zM667 617h2v1h-2zM669 617h3v1h-3zM669 637h3v1h-3zM669 618h1v19h-1zM671 618h1v19h-1zM672 617h1v1h-1zM673 617h2v1h-2zM673 637h2v1h-2zM673 618h2v19h-2zM675 637h1v1h-1zM676 617h11v1h-11zM676 637h11v1h-11zM676 618h1v19h-1zM686 618h1v19h-1zM687 617h1v1h-1zM688 617h4v1h-4zM688 637h4v1h-4zM688 618h1v19h-1zM691 618h1v19h-1zM692 617h1v1h-1zM693 617h12v1h-12zM693 637h12v1h-12zM693 618h1v19h-1zM704 618h1v19h-1zM705 617h2v1h-2zM707 617h2v1h-2zM707 637h2v1h-2zM707 618h2v19h-2zM709 617h1v1h-1zM710 617h10v1h-10zM710 637h10v1h-10zM710 618h1v19h-1zM719 618h1v19h-1zM720 617h1v1h-1zM721 617h8v1h-8zM721 637h8v1h-8zM721 618h1v19h-1zM728 618h1v19h-1zM729 637h1v1h-1zM730 617h4v1h-4zM730 637h4v1h-4zM730 618h1v19h-1zM733 618h1v19h-1zM734 617h2v1h-2zM736 617h6v1h-6zM736 637h6v1h-6zM736 618h1v19h-1zM741 618h1v19h-1zM742 637h1v1h-1zM743 617h10v1h-10zM743 637h10v1h-10zM743 618h1v19h-1zM752 618h1v19h-1zM753 617h1v1h-1zM754 617h3v1h-3zM754 637h3v1h-3zM754 618h1v19h-1zM756 618h1v19h-1zM757 617h1v1h-1zM758 617h3v1h-3zM758 637h3v1h-3zM758 618h1v19h-1zM760 618h1v19h-1zM761 617h1v1h-1zM762 617h7v1h-7zM762 637h7v1h-7zM762 618h1v19h-1zM768 618h1v19h-1zM769 617h1v1h-1zM770 617h6v1h-6zM770 637h6v1h-6zM770 618h1v19h-1zM775 618h1v19h-1zM776 617h1v1h-1zM777 617h3v1h-3zM777 637h3v1h-3zM777 618h1v19h-1zM779 618h1v19h-1zM780 637h2v1h-2zM782 617h3v1h-3zM782 637h3v1h-3zM782 618h1v19h-1zM784 618h1v19h-1zM785 637h1v1h-1zM786 617h2v1h-2zM786 637h2v1h-2zM786 618h2v19h-2zM788 637h1v1h-1zM789 617h8v1h-8zM789 637h8v1h-8zM789 618h1v19h-1zM796 618h1v19h-1zM797 637h1v1h-1zM798 617h1v1h-1zM798 637h1v1h-1zM798 618h1v19h-1zM799 617h1v1h-1z"/><path fill="#429298" d="M305 618h4v19h-4zM312 618h12v19h-12zM332 618h3v19h-3zM338 618h1v19h-1zM342 618h1v19h-1zM346 618h3v19h-3zM352 618h3v19h-3zM359 618h2v19h-2zM364 618h3v19h-3zM371 618h4v19h-4zM378 618h5v19h-5zM391 618h5v19h-5zM399 618h1v19h-1zM403 618h6v19h-6zM414 618h3v19h-3zM421 618h1v19h-1zM430 618h1v19h-1zM440 618h1v19h-1zM444 618h1v19h-1zM448 618h3v19h-3zM463 618h1v19h-1zM467 618h11v19h-11zM481 618h1v19h-1zM501 618h5v19h-5zM510 618h1v19h-1zM514 618h4v19h-4zM521 618h5v19h-5zM533 618h9v19h-9zM545 618h3v19h-3zM553 618h2v19h-2zM570 618h16v19h-16zM591 618h10v19h-10zM609 618h3v19h-3zM618 618h7v19h-7zM631 618h15v19h-15zM650 618h8v19h-8zM661 618h5v19h-5zM670 618h1v19h-1zM677 618h9v19h-9zM689 618h2v19h-2zM694 618h10v19h-10zM711 618h8v19h-8zM722 618h6v19h-6zM731 618h2v19h-2zM737 618h4v19h-4zM744 618h8v19h-8zM755 618h1v19h-1zM759 618h1v19h-1zM763 618h5v19h-5zM771 618h4v19h-4zM778 618h1v19h-1zM783 618h1v19h-1zM790 618h6v19h-6z"/>
<polyline points="303.5,648.9 304.5,647.8 305.5,646.8 306.5,645.9 307.5,645.0 308.5,644.2 309.5,643.6 310.5,643.1 311.5,642.8 312.5,642.6 313.5,642.5 314.5,642.6 315.5,642.8 316.5,643.2 317.5,643.7 318.5,644.3 319.5,645.0 320.5,646.0 321.5,647.0 322.5,648.0 323.5,649.1 324.5,650.2 325.5,651.4 326.5,652.5 327.5,653.7 328.5,654.8 329.5,655.9 330.5,656.9 331.5,657.9 332.5,658.9 333.5,659.6 334.5,660.3 335.5,660.8 336.5,661.2 337.5,661.4 338.5,661.5 339.5,661.4 340.5,661.2 341.5,660.9 342.5,660.4 343.5,659.9 344.5,659.0 345.5,658.2 346.5,657.3 347.5,656.2 348.5,655.2 349.5,654.0 350.5,652.9 351.5,651.7 352.5,650.6 353.5,649.4 354.5,648.4 355.5,647.2 356.5,646.2 357.5,645.3 358.5,644.5 359.5,643.9 360.5,643.3 361.5,642.9 362.5,642.7 363.5,642.5 364.5,642.5 365.5,642.7 366.5,643.0 367.5,643.5 368.5,644.1 369.5,644.8 370.5,645.6 371.5,646.5 372.5,647.5 373.5,648.6 374.5,649.6 375.5,650.8 376.5,651.9 377.5,653.1 378.5,654.2 379.5,655.6 380.5,656.6 381.5,657.6 382.5,658.5 383.5,659.3 384.5,660.0 385.5,660.5 386.5,661.0 387.5,661.3 388.5,661.4 389.5,661.5 390.5,661.4 391.5,661.0 392.5,660.6 393.5,660.1 394.5,659.4 395.5,658.6 396.5,657.8 397.5,656.8 398.5,655.8 399.5,654.6 400.5,653.6 401.5,652.3 402.5,651.2 403.5,649.9 404.5,648.7 405.5,647.7 406.5,646.7 407.5,645.8 408.5,644.9 409.5,644.2 410.5,643.6 411.5,643.1 412.5,642.8 413.5,642.6 414.5,642.5 415.5,642.6 416.5,642.9 417.5,643.3 418.5,643.8 419.5,644.4 420.5,645.2 421.5,646.1 422.5,647.0 423.5,648.0 424.5,649.0 425.5,650.2 426.5,651.6 427.5,652.7 428.5,653.9 429.5,655.0 430.5,656.1 431.5,657.1 432.5,658.1 433.5,658.9 434.5,659.6 435.5,660.2 436.5,660.8 437.5,661.1 438.5,661.4 439.5,661.5 440.5,661.4 441.5,661.2 442.5,660.9 443.5,660.4 444.5,659.8 445.5,659.0 446.5,658.2 447.5,657.3 448.5,656.3 449.5,655.2 450.5,653.9 451.5,652.8 452.5,651.5 453.5,650.5 454.5,649.3 455.5,648.2 456.5,647.2 457.5,646.2 458.5,645.3 459.5,644.6 460.5,643.9 461.5,643.4 462.5,642.9 463.5,642.6 464.5,642.5 465.5,642.6 466.5,642.7 467.5,643.1 468.5,643.5 469.5,644.1 470.5,644.8 471.5,645.6 472.5,646.5 473.5,647.6 474.5,648.7 475.5,649.8 476.5,651.0 477.5,652.1 478.5,653.3 479.5,654.4 480.5,655.6 481.5,656.6 482.5,657.6 483.5,658.4 484.5,659.3 485.5,660.1 486.5,660.6 487.5,661.0 488.5,661.3 489.5,661.5 490.5,661.5 491.5,661.3 492.5,661.1 493.5,660.6 494.5,660.1 495.5,659.4 496.5,658.7 497.5,657.6 498.5,656.6 499.5,655.6 500.5,654.4 501.5,653.3 502.5,652.1 503.5,651.0 504.5,649.9 505.5,648.8 506.5,647.7 507.5,646.7 508.5,645.7 509.5,644.8 510.5,644.1 511.5,643.5 512.5,643.1 513.5,642.8 514.5,642.6 515.5,642.5 516.5,642.6 517.5,642.9 518.5,643.2 519.5,643.8 520.5,644.4 521.5,645.3 522.5,646.2 523.5,647.1 524.5,648.2 525.5,649.2 526.5,650.4 527.5,651.5 528.5,652.7 529.5,653.8 530.5,655.0 531.5,656.0 532.5,657.2 533.5,658.2 534.5,659.0 535.5,659.7 536.5,660.3 537.5,660.8 538.5,661.2 539.5,661.4 540.5,661.5 541.5,661.4 542.5,661.2 543.5,660.9 544.5,660.3 545.5,659.7 546.5,658.9 547.5,658.1 548.5,657.1 549.5,656.1 550.5,655.0 551.5,653.9 552.5,652.8 553.5,651.6 554.5,650.4 555.5,649.4 556.5,648.1 557.5,647.0 558.5,646.1 559.5,645.2 560.5,644.5 561.5,643.8 562.5,643.3 563.5,642.9 564.5,642.6 565.5,642.5 566.5,642.6 567.5,642.7 568.5,643.1 569.5,643.6 570.5,644.2 571.5,644.9 572.5,645.7 573.5,646.6 574.5,647.6 575.5,648.6 576.5,649.8 577.5,650.9 578.5,652.1 579.5,653.2 580.5,654.6 581.5,655.7 582.5,656.7 583.5,657.7 584.5,658.6 585.5,659.4 586.5,660.0 587.5,660.6 588.5,661.0 589.5,661.3 590.5,661.5 591.5,661.5 592.5,661.3 593.5,661.0 594.5,660.5 595.5,660.0 596.5,659.3 597.5,658.5 598.5,657.6 599.5,656.7 600.5,655.6 601.5,654.5 602.5,653.4 603.5,652.0 604.5,650.9 605.5,649.7 606.5,648.6 607.5,647.5 608.5,646.6 609.5,645.6 610.5,644.8 611.5,644.1 612.5,643.5 613.5,643.1 614.5,642.8 615.5,642.5 616.5,642.5 617.5,642.7 618.5,642.9 619.5,643.3 620.5,643.9 621.5,644.5 622.5,645.3 623.5,646.1 624.5,647.1 625.5,648.1 626.5,649.2 627.5,650.6 628.5,651.7 629.5,652.9 630.5,654.0 631.5,655.2 632.5,656.2 633.5,657.2 634.5,658.1 635.5,659.0 636.5,659.7 637.5,660.3 638.5,660.8 639.5,661.2 640.5,661.4 641.5,661.5 642.5,661.4 643.5,661.2 644.5,660.8 645.5,660.3 646.5,659.7 647.5,659.0 648.5,658.1 649.5,657.2 650.5,656.0 651.5,654.9 652.5,653.8 653.5,652.6 654.5,651.5 655.5,650.3 656.5,649.2 657.5,648.0 658.5,647.1 659.5,646.1 660.5,645.2 661.5,644.5 662.5,643.7 663.5,643.2 664.5,642.8 665.5,642.6 666.5,642.5 667.5,642.6 668.5,642.8 669.5,643.1 670.5,643.6 671.5,644.1 672.5,644.9 673.5,645.7 674.5,646.8 675.5,647.8 676.5,648.8 677.5,650.0 678.5,651.1 679.5,652.3 680.5,653.4 681.5,654.6 682.5,655.6 683.5,656.7 684.5,657.6 685.5,658.6 686.5,659.5 687.5,660.1 688.5,660.7 689.5,661.1 690.5,661.4 691.5,661.5 692.5,661.5 693.5,661.3 694.5,661.0 695.5,660.6 696.5,660.0 697.5,659.4 698.5,658.4 699.5,657.5 700.5,656.5 701.5,655.4 702.5,654.4 703.5,653.2 704.5,652.1 705.5,650.9 706.5,649.8 707.5,648.6 708.5,647.6 709.5,646.4 710.5,645.5 711.5,644.7 712.5,644.0 713.5,643.5 714.5,643.0 715.5,642.7 716.5,642.6 717.5,642.5 718.5,642.7 719.5,642.9 720.5,643.3 721.5,644.0 722.5,644.6 723.5,645.4 724.5,646.3 725.5,647.3 726.5,648.3 727.5,649.4 728.5,650.5 729.5,651.7 730.5,652.8 731.5,654.0 732.5,655.1 733.5,656.3 734.5,657.4 735.5,658.3 736.5,659.1 737.5,659.8 738.5,660.4 739.5,660.9 740.5,661.2 741.5,661.4 742.5,661.5 743.5,661.4 744.5,661.2 745.5,660.7 746.5,660.2 747.5,659.5 748.5,658.8 749.5,657.9 750.5,657.0 751.5,656.0 752.5,654.9 753.5,653.8 754.5,652.7 755.5,651.4 756.5,650.3 757.5,649.0 758.5,647.9 759.5,646.9 760.5,645.9 761.5,645.1 762.5,644.4 763.5,643.8 764.5,643.2 765.5,642.9 766.5,642.6 767.5,642.5 768.5,642.6 769.5,642.8 770.5,643.2 771.5,643.7 772.5,644.3 773.5,645.0 774.5,645.8 775.5,646.8 776.5,647.7 777.5,648.8 778.5,649.9 779.5,651.1 780.5,652.5 781.5,653.6 782.5,654.8 783.5,655.8 784.5,656.9 785.5,657.8 786.5,658.7 787.5,659.4 788.5,660.1 789.5,660.6 790.5,661.1 791.5,661.3 792.5,661.5 793.5,661.4 794.5,661.3 795.5,660.9 796.5,660.5 797.5,659.9 798.5,659.2 799.5,658.4" stroke="#3f9aa2" fill="none" stroke-width="1.2"/>
<path fill="#45a2a8" d="M303 687h23v1h-23zM326 667h1v1h-1zM326 687h1v1h-1zM326 668h1v19h-1zM327 667h24v1h-24zM351 667h1v1h-1zM351 687h1v1h-1zM351 668h1v19h-1zM352 687h24v1h-24zM376 667h1v1h-1zM376 687h1v1h-1zM376 668h1v19h-1zM377 667h24v1h-24zM401 667h1v1h-1zM401 687h1v1h-1zM401 668h1v19h-1zM402 687h24v1h-24zM426 667h1v1h-1zM426 687h1v1h-1zM426 668h1v19h-1zM427 667h25v1h-25zM452 667h1v1h-1zM452 687h1v1h-1zM452 668h1v19h-1zM453 687h24v1h-24zM477 667h1v1h-1zM477 687h1v1h-1zM477 668h1v19h-1zM478 667h24v1h-24zM502 667h1v1h-1zM502 687h1v1h-1zM502 668h1v19h-1zM503 687h24v1h-24zM527 667h1v1h-1zM527 687h1v1h-1zM527 668h1v19h-1zM528 667h25v1h-25zM553 667h1v1h-1zM553 687h1v1h-1zM553 668h1v19h-1zM554 687h24v1h-24zM578 667h1v1h-1zM578 687h1v1h-1zM578 668h1v19h-1zM579 667h24v1h-24zM603 667h1v1h-1zM603 687h1v1h-1zM603 668h1v19h-1zM604 687h24v1h-24zM628 667h1v1h-1zM628 687h1v1h-1zM628 668h1v19h-1zM629 667h25v1h-25zM654 667h1v1h-1zM654 687h1v1h-1zM654 668h1v19h-1zM655 687h24v1h-24zM679 667h1v1h-1zM679 687h1v1h-1zM679 668h1v19h-1zM680 667h24v1h-24zM704 667h1v1h-1zM704 687h1v1h-1zM704 668h1v19h-1zM705 687h24v1h-24zM729 667h1v1h-1zM729 687h1v1h-1zM729 668h1v19h-1zM730 667h24v1h-24zM754 667h1v1h-1zM754 687h1v1h-1zM754 668h1v19h-1zM755 687h25v1h-25zM780 667h1v1h-1zM780 687h1v1h-1zM780 668h1v19h-1zM781 667h19v1h-19z"/>
<path fill="#45a2a8" d="M303 712h23v1h-23zM326 692h1v1h-1zM326 712h1v1h-1zM326 693h1v19h-1zM327 692h24v1h-24zM351 692h1v1h-1zM351 712h1v1h-1zM351 693h1v19h-1zM352 712h24v1h-24zM376 692h1v1h-1zM376 712h1v1h-1zM376 693h1v19h-1zM377 692h24v1h-24zM401 692h1v1h-1zM401 712h1v1h-1zM401 693h1v19h-1zM402 712h24v1h-24zM426 692h1v1h-1zM426 712h1v1h-1zM426 693h1v19h-1zM427 692h25v1h-25zM452 692h1v1h-1zM452 712h1v1h-1zM452 693h1v19h-1zM453 712h24v1h-24zM477 692h1v1h-1zM477 712h1v1h-1zM477 693h1v19h-1zM478 692h24v1h-24zM502 692h1v1h-1zM502 712h1v1h-1zM502 693h1v19h-1zM503 712h24v1h-24zM527 692h1v1h-1zM527 712h1v1h-1zM527 693h1v19h-1zM528 692h25v1h-25zM553 692h1v1h-1zM553 712h1v1h-1zM553 693h1v19h-1zM554 712h24v1h-24zM578 692h1v1h-1zM578 712h1v1h-1zM578 693h1v19h-1zM579 692h24v1h-24zM603 692h1v1h-1zM603 712h1v1h-1zM603 693h1v19h-1zM604 712h24v1h-24zM628 692h1v1h-1zM628 712h1v1h-1zM628 693h1v19h-1zM629 692h25v1h-25zM654 692h1v1h-1zM654 712h1v1h-1zM654 693h1v19h-1zM655 712h24v1h-24zM679 692h1v1h-1zM679 712h1v1h-1zM679 693h1v19h-1zM680 692h24v1h-24zM704 692h1v1h-1zM704 712h1v1h-1zM704 693h1v19h-1zM705 712h24v1h-24zM729 692h1v1h-1zM729 712h1v1h-1zM729 693h1v19h-1zM730 692h24v1h-24zM754 692h1v1h-1zM754 712h1v1h-1zM754 693h1v19h-1zM755 712h25v1h-25zM780 692h1v1h-1zM780 712h1v1h-1zM780 693h1v19h-1zM781 692h19v1h-19z"/>
<path fill="#45a2a8" d="M303 737h23v1h-23zM326 717h1v1h-1zM326 737h1v1h-1zM326 718h1v19h-1zM327 717h24v1h-24zM351 717h1v1h-1zM351 737h1v1h-1zM351 718h1v19h-1zM352 737h24v1h-24zM376 717h1v1h-1zM376 737h1v1h-1zM376 718h1v19h-1zM377 717h24v1h-24zM401 717h1v1h-1zM401 737h1v1h-1zM401 718h1v19h-1zM402 737h24v1h-24zM426 717h1v1h-1zM426 737h1v1h-1zM426 718h1v19h-1zM427 717h25v1h-25zM452 717h1v1h-1zM452 737h1v1h-1zM452 718h1v19h-1zM453 737h24v1h-24zM477 717h1v1h-1zM477 737h1v1h-1zM477 718h1v19h-1zM478 717h24v1h-24zM502 717h1v1h-1zM502 737h1v1h-1zM502 718h1v19h-1zM503 737h24v1h-24zM527 717h1v1h-1zM527 737h1v1h-1zM527 718h1v19h-1zM528 717h25v1h-25zM553 717h1v1h-1zM553 737h1v1h-1zM553 718h1v19h-1zM554 737h24v1h-24zM578 717h1v1h-1zM578 737h1v1h-1zM578 718h1v19h-1zM579 717h24v1h-24zM603 717h1v1h-1zM603 737h1v1h-1zM603 718h1v19h-1zM604 737h24v1h-24zM628 717h1v1h-1zM628 737h1v1h-1zM628 718h1v19h-1zM629 717h25v1h-25zM654 717h1v1h-1zM654 737h1v1h-1zM654 718h1v19h-1zM655 737h24v1h-24zM679 717h1v1h-1zM679 737h1v1h-1zM679 718h1v19h-1zM680 717h24v1h-24zM704 717h1v1h-1zM704 737h1v1h-1zM704 718h1v19h-1zM705 737h24v1h-24zM729 717h1v1h-1zM729 737h1v1h-1zM729 718h1v19h-1zM730 717h24v1h-24zM754 717h1v1h-1zM754 737h1v1h-1zM754 718h1v19h-1zM755 737h25v1h-25zM780 717h1v1h-1zM780 737h1v1h-1zM780 718h1v19h-1zM781 717h19v1h-19z"/>
<path fill="#45a2a8" d="M303 762h10v1h-10zM313 742h2v1h-2zM313 762h2v1h-2zM313 743h2v19h-2zM315 762h11v1h-11zM326 742h1v1h-1zM326 762h1v1h-1zM326 743h1v19h-1zM327 742h11v1h-11zM338 742h2v1h-2zM338 762h2v1h-2zM338 743h2v19h-2zM340 742h11v1h-11zM351 742h1v1h-1zM351 762h1v1h-1zM351 743h1v19h-1zM352 762h11v1h-11zM363 742h2v1h-2zM363 762h2v1h-2zM363 743h2v19h-2zM365 762h11v1h-11zM376 742h1v1h-1zM376 762h1v1h-1zM376 743h1v19h-1zM377 742h11v1h-11zM388 742h2v1h-2zM388 762h2v1h-2zM388 743h2v19h-2zM390 742h11v1h-11zM401 742h1v1h-1zM401 762h1v1h-1zM401 743h1v19h-1zM402 762h11v1h-11zM413 742h2v1h-2zM413 762h2v1h-2zM413 743h2v19h-2zM415 762h11v1h-11zM426 742h1v1h-1zM426 762h1v1h-1zM426 743h1v19h-1zM427 742h12v1h-12zM439 742h1v1h-1zM439 762h1v1h-1zM439 743h1v19h-1zM440 742h12v1h-12zM452 742h1v1h-1zM452 762h1v1h-1zM452 743h1v19h-1zM453 762h11v1h-11zM464 742h2v1h-2zM464 762h2v1h-2zM464 743h2v19h-2zM466 762h11v1h-11zM477 742h1v1h-1zM477 762h1v1h-1zM477 743h1v19h-1zM478 742h11v1h-11zM489 742h2v1h-2zM489 762h2v1h-2zM489 743h2v19h-2zM491 742h11v1h-11zM502 742h1v1h-1zM502 762h1v1h-1zM502 743h1v19h-1zM503 762h11v1h-11zM514 742h2v1h-2zM514 762h2v1h-2zM514 743h2v19h-2zM516 762h11v1h-11zM527 742h1v1h-1zM527 762h1v1h-1zM527 743h1v19h-1zM528 742h12v1h-12zM540 742h1v1h-1zM540 762h1v1h-1zM540 743h1v19h-1zM541 742h12v1h-12zM553 742h1v1h-1zM553 762h1v1h-1zM553 743h1v19h-1zM554 762h10v1h-10zM564 742h1v1h-1zM564 762h1v1h-1zM564 743h1v19h-1zM565 742h1v1h-1zM566 742h1v1h-1zM566 762h1v1h-1zM566 743h1v19h-1zM567 762h11v1h-11zM578 742h1v1h-1zM578 762h1v1h-1zM578 743h1v19h-1zM579 742h11v1h-11zM590 742h2v1h-2zM590 762h2v1h-2zM590 743h2v19h-2zM592 742h11v1h-11zM603 742h1v1h-1zM603 762h1v1h-1zM603 743h1v19h-1zM604 762h11v1h-11zM615 742h2v1h-2zM615 762h2v1h-2zM615 743h2v19h-2zM617 762h11v1h-11zM628 742h1v1h-1zM628 762h1v1h-1zM628 743h1v19h-1zM629 742h11v1h-11zM640 742h3v1h-3zM640 762h3v1h-3zM640 743h1v19h-1zM642 743h1v19h-1zM643 742h11v1h-11zM654 742h1v1h-1zM654 762h1v1h-1zM654 743h1v19h-1zM655 762h11v1h-11zM666 742h1v1h-1zM666 762h1v1h-1zM666 743h1v19h-1zM667 762h12v1h-12zM679 742h1v1h-1zM679 762h1v1h-1zM679 743h1v19h-1zM680 742h11v1h-11zM691 742h2v1h-2zM691 762h2v1h-2zM691 743h2v19h-2zM693 742h11v1h-11zM704 742h1v1h-1zM704 762h1v1h-1zM704 743h1v19h-1zM705 762h11v1h-11zM716 742h2v1h-2zM716 762h2v1h-2zM716 743h2v19h-2zM718 762h11v1h-11zM729 742h1v1h-1zM729 762h1v1h-1zM729 743h1v19h-1zM730 742h11v1h-11zM741 742h2v1h-2zM741 762h2v1h-2zM741 743h2v19h-2zM743 742h11v1h-11zM754 742h1v1h-1zM754 762h1v1h-1zM754 743h1v19h-1zM755 762h12v1h-12zM767 742h2v1h-2zM767 762h2v1h-2zM767 743h2v19h-2zM769 762h11v1h-11zM780 742h1v1h-1zM780 762h1v1h-1zM780 743h1v19h-1zM781 742h11v1h-11zM792 742h2v1h-2zM792 762h2v1h-2zM792 743h2v19h-2zM794 742h6v1h-6z"/><path fill="#429298" d="M641 743h1v19h-1z"/>
<path fill="#45a2a8" d="M303 787h1v1h-1zM304 767h1v1h-1zM304 787h1v1h-1zM304 768h1v19h-1zM305 767h8v1h-8zM313 767h2v1h-2zM313 787h2v1h-2zM313 768h2v19h-2zM315 767h6v1h-6zM321 767h1v1h-1zM321 787h1v1h-1zM321 768h1v19h-1zM322 787h4v1h-4zM326 767h1v1h-1zM326 787h1v1h-1zM326 768h1v19h-1zM327 767h3v1h-3zM330 767h1v1h-1zM330 787h1v1h-1zM330 768h1v19h-1zM331 787h7v1h-7zM338 767h2v1h-2zM338 787h2v1h-2zM338 768h2v19h-2zM340 787h7v1h-7zM347 767h1v1h-1zM347 787h1v1h-1zM347 768h1v19h-1zM348 767h3v1h-3zM351 767h1v1h-1zM351 787h1v1h-1zM351 768h1v19h-1zM352 787h3v1h-3zM355 767h1v1h-1zM355 787h1v1h-1zM355 768h1v19h-1zM356 767h7v1h-7zM363 767h2v1h-2zM363 787h2v1h-2zM363 768h2v19h-2zM365 767h7v1h-7zM372 767h1v1h-1zM372 787h1v1h-1zM372 768h1v19h-1zM373 787h3v1h-3zM376 767h1v1h-1zM376 787h1v1h-1zM376 768h1v19h-1zM377 767h3v1h-3zM380 767h1v1h-1zM380 787h1v1h-1zM380 768h1v19h-1zM381 787h7v1h-7zM388 767h2v1h-2zM388 787h2v1h-2zM388 768h2v19h-2zM390 787h7v1h-7zM397 767h1v1h-1zM397 787h1v1h-1zM397 768h1v19h-1zM398 767h3v1h-3zM401 767h1v1h-1zM401 787h1v1h-1zM401 768h1v19h-1zM402 787h4v1h-4zM406 767h1v1h-1zM406 787h1v1h-1zM406 768h1v19h-1zM407 767h6v1h-6zM413 767h2v1h-2zM413 787h2v1h-2zM413 768h2v19h-2zM415 767h7v1h-7zM422 767h1v1h-1zM422 787h1v1h-1zM422 768h1v19h-1zM423 787h3v1h-3zM426 767h1v1h-1zM426 787h1v1h-1zM426 768h1v19h-1zM427 767h4v1h-4zM431 767h1v1h-1zM431 787h1v1h-1zM431 768h1v19h-1zM432 787h7v1h-7zM439 767h1v1h-1zM439 787h1v1h-1zM439 768h1v19h-1zM440 787h8v1h-8zM448 767h1v1h-1zM448 787h1v1h-1zM448 768h1v19h-1zM449 767h3v1h-3zM452 767h1v1h-1zM452 787h1v1h-1zM452 768h1v19h-1zM453 787h3v1h-3zM456 767h1v1h-1zM456 787h1v1h-1zM456 768h1v19h-1zM457 767h7v1h-7zM464 767h2v1h-2zM464 787h2v1h-2zM464 768h2v19h-2zM466 767h7v1h-7zM473 767h1v1h-1zM473 787h1v1h-1zM473 768h1v19h-1zM474 787h3v1h-3zM477 767h1v1h-1zM477 787h1v1h-1zM477 768h1v19h-1zM478 767h3v1h-3zM481 767h1v1h-1zM481 787h1v1h-1zM481 768h1v19h-1zM482 787h7v1h-7zM489 767h2v1h-2zM489 787h2v1h-2zM489 768h2v19h-2zM491 787h7v1h-7zM498 767h1v1h-1zM498 787h1v1h-1zM498 768h1v19h-1zM499 767h3v1h-3zM502 767h1v1h-1zM502 787h1v1h-1zM502 768h1v19h-1zM503 787h3v1h-3zM506 767h1v1h-1zM506 787h1v1h-1zM506 768h1v19h-1zM507 767h7v1h-7zM514 767h2v1h-2zM514 787h2v1h-2zM514 768h2v19h-2zM516 767h7v1h-7zM523 767h1v1h-1zM523 787h1v1h-1zM523 768h1v19h-1zM524 787h3v1h-3zM527 767h1v1h-1zM527 787h1v1h-1zM527 768h1v19h-1zM528 767h3v1h-3zM531 767h1v1h-1zM531 787h1v1h-1zM531 768h1v19h-1zM532 787h8v1h-8zM540 767h1v1h-1zM540 787h1v1h-1zM540 768h1v19h-1zM541 787h7v1h-7zM548 767h1v1h-1zM548 787h1v1h-1zM548 768h1v19h-1zM549 767h4v1h-4zM553 767h1v1h-1zM553 787h1v1h-1zM553 768h1v19h-1zM554 787h3v1h-3zM557 767h1v1h-1zM557 787h1v1h-1zM557 768h1v19h-1zM558 767h6v1h-6zM564 767h1v1h-1zM564 787h1v1h-1zM564 768h1v19h-1zM565 787h1v1h-1zM566 767h1v1h-1zM566 787h1v1h-1zM566 768h1v19h-1zM567 767h6v1h-6zM573 767h1v1h-1zM573 787h1v1h-1zM573 768h1v19h-1zM574 787h4v1h-4zM578 767h1v1h-1zM578 787h1v1h-1zM578 768h1v19h-1zM579 767h3v1h-3zM582 767h1v1h-1zM582 787h1v1h-1zM582 768h1v19h-1zM583 787h7v1h-7zM590 767h2v1h-2zM590 787h2v1h-2zM590 768h2v19h-2zM592 787h7v1h-7zM599 767h1v1h-1zM599 787h1v1h-1zM599 768h1v19h-1zM600 767h3v1h-3zM603 767h1v1h-1zM603 787h1v1h-1zM603 768h1v19h-1zM604 787h3v1h-3zM607 767h1v1h-1zM607 787h1v1h-1zM607 768h1v19h-1zM608 767h7v1h-7zM615 767h2v1h-2zM615 787h2v1h-2zM615 768h2v19h-2zM617 767h7v1h-7zM624 767h1v1h-1zM624 787h1v1h-1zM624 768h1v19h-1zM625 787h3v1h-3zM628 767h1v1h-1zM628 787h1v1h-1zM628 768h1v19h-1zM629 767h3v1h-3zM632 767h1v1h-1zM632 787h1v1h-1zM632 768h1v19h-1zM633 787h7v1h-7zM640 767h3v1h-3zM640 787h3v1h-3zM640 768h1v19h-1zM642 768h1v19h-1zM643 787h6v1h-6zM649 767h1v1h-1zM649 787h1v1h-1zM649 768h1v19h-1zM650 767h4v1h-4zM654 767h1v1h-1zM654 787h1v1h-1zM654 768h1v19h-1zM655 787h3v1h-3zM658 767h1v1h-1zM658 787h1v1h-1zM658 768h1v19h-1zM659 767h7v1h-7zM666 767h1v1h-1zM666 787h1v1h-1zM666 768h1v19h-1zM667 767h8v1h-8zM675 767h1v1h-1zM675 787h1v1h-1zM675 768h1v19h-1zM676 787h3v1h-3zM679 767h1v1h-1zM679 787h1v1h-1zM679 768h1v19h-1zM680 767h3v1h-3zM683 767h1v1h-1zM683 787h1v1h-1zM683 768h1v19h-1zM684 787h7v1h-7zM691 767h2v1h-2zM691 787h2v1h-2zM691 768h2v19h-2zM693 787h7v1h-7zM700 767h1v1h-1zM700 787h1v1h-1zM700 768h1v19h-1zM701 767h3v1h-3zM704 767h1v1h-1zM704 787h1v1h-1zM704 768h1v19h-1zM705 787h3v1h-3zM708 767h1v1h-1zM708 787h1v1h-1zM708 768h1v19h-1zM709 767h7v1h-7zM716 767h2v1h-2zM716 787h2v1h-2zM716 768h2v19h-2zM718 767h7v1h-7zM725 767h1v1h-1zM725 787h1v1h-1zM725 768h1v19h-1zM726 787h3v1h-3zM729 767h1v1h-1zM729 787h1v1h-1zM729 768h1v19h-1zM730 767h4v1h-4zM734 767h1v1h-1zM734 787h1v1h-1zM734 768h1v19h-1zM735 787h6v1h-6zM741 767h2v1h-2zM741 787h2v1h-2zM741 768h2v19h-2zM743 787h7v1h-7zM750 767h1v1h-1zM750 787h1v1h-1zM750 768h1v19h-1zM751 767h3v1h-3zM754 767h1v1h-1zM754 787h1v1h-1zM754 768h1v19h-1zM755 787h4v1h-4zM759 767h1v1h-1zM759 787h1v1h-1zM759 768h1v19h-1zM760 767h7v1h-7zM767 767h2v1h-2zM767 787h2v1h-2zM767 768h2v19h-2zM769 767h7v1h-7zM776 767h1v1h-1zM776 787h1v1h-1zM776 768h1v19h-1zM777 787h3v1h-3zM780 767h1v1h-1zM780 787h1v1h-1zM780 768h1v19h-1zM781 767h3v1h-3zM784 767h1v1h-1zM784 787h1v1h-1zM784 768h1v19h-1zM785 787h7v1h-7zM792 767h2v1h-2zM792 787h2v1h-2zM792 768h2v19h-2zM794 787h6v1h-6z"/><path fill="#429298" d="M641 768h1v19h-1z"/>
<path fill="#45a2a8" d="M303 792h2v1h-2zM305 792h1v1h-1zM305 812h1v1h-1zM305 793h1v19h-1zM306 812h1v1h-1zM307 792h1v1h-1zM307 812h1v1h-1zM307 793h1v19h-1zM308 792h4v1h-4zM312 792h1v1h-1zM312 812h1v1h-1zM312 793h1v19h-1zM313 812h1v1h-1zM314 792h1v1h-1zM314 812h1v1h-1zM314 793h1v19h-1zM315 792h4v1h-4zM319 792h1v1h-1zM319 812h1v1h-1zM319 793h1v19h-1zM320 812h1v1h-1zM321 792h1v1h-1zM321 812h1v1h-1zM321 793h1v19h-1zM322 792h1v1h-1zM323 792h1v1h-1zM323 812h1v1h-1zM323 793h1v19h-1zM324 812h2v1h-2zM326 792h1v1h-1zM326 812h1v1h-1zM326 793h1v19h-1zM327 792h1v1h-1zM328 792h1v1h-1zM328 812h1v1h-1zM328 793h1v19h-1zM329 812h1v1h-1zM330 792h1v1h-1zM330 812h1v1h-1zM330 793h1v19h-1zM331 792h1v1h-1zM332 792h1v1h-1zM332 812h1v1h-1zM332 793h1v19h-1zM333 812h4v1h-4zM337 792h4v1h-4zM337 812h4v1h-4zM337 793h1v19h-1zM340 793h1v19h-1zM341 812h3v1h-3zM344 792h1v1h-1zM344 812h1v1h-1zM344 793h1v19h-1zM345 792h2v1h-2zM347 792h1v1h-1zM347 812h1v1h-1zM347 793h1v19h-1zM348 812h1v1h-1zM349 792h1v1h-1zM349 812h1v1h-1zM349 793h1v19h-1zM350 792h1v1h-1zM351 792h1v1h-1zM351 812h1v1h-1zM351 793h1v19h-1zM352 812h1v1h-1zM353 792h1v1h-1zM353 812h1v1h-1zM353 793h1v19h-1zM354 792h1v1h-1zM355 792h1v1h-1zM355 812h1v1h-1zM355 793h1v19h-1zM356 812h1v1h-1zM357 792h1v1h-1zM357 812h1v1h-1zM357 793h1v19h-1zM358 792h5v1h-5zM363 792h3v1h-3zM363 812h3v1h-3zM363 793h1v19h-1zM365 793h1v19h-1zM366 792h3v1h-3zM369 792h1v1h-1zM369 812h1v1h-1zM369 793h1v19h-1zM370 812h2v1h-2zM372 792h1v1h-1zM372 812h1v1h-1zM372 793h1v19h-1zM373 792h1v1h-1zM374 792h1v1h-1zM374 812h1v1h-1zM374 793h1v19h-1zM375 812h1v1h-1zM376 792h1v1h-1zM376 812h1v1h-1zM376 793h1v19h-1zM377 792h1v1h-1zM378 792h1v1h-1zM378 812h1v1h-1zM378 793h1v19h-1zM379 812h1v1h-1zM380 792h1v1h-1zM380 812h1v1h-1zM380 793h1v19h-1zM381 792h2v1h-2zM383 792h1v1h-1zM383 812h1v1h-1zM383 793h1v19h-1zM384 812h5v1h-5zM389 792h1v1h-1zM389 812h1v1h-1zM389 793h1v19h-1zM390 812h5v1h-5zM395 792h1v1h-1zM395 812h1v1h-1zM395 793h1v19h-1zM396 792h1v1h-1zM397 792h1v1h-1zM397 812h1v1h-1zM397 793h1v19h-1zM398 812h1v1h-1zM399 792h1v1h-1zM399 812h1v1h-1zM399 793h1v19h-1zM400 792h1v1h-1zM401 792h1v1h-1zM401 812h1v1h-1zM401 793h1v19h-1zM402 812h1v1h-1zM403 792h1v1h-1zM403 812h1v1h-1zM403 793h1v19h-1zM404 792h2v1h-2zM406 792h1v1h-1zM406 812h1v1h-1zM406 793h1v19h-1zM407 812h1v1h-1zM408 792h1v1h-1zM408 812h1v1h-1zM408 793h1v19h-1zM409 792h4v1h-4zM413 792h1v1h-1zM413 812h1v1h-1zM413 793h1v19h-1zM414 812h1v1h-1zM415 792h1v1h-1zM415 812h1v1h-1zM415 793h1v19h-1zM416 792h4v1h-4zM420 792h1v1h-1zM420 812h1v1h-1zM420 793h1v19h-1zM421 812h1v1h-1zM422 792h1v1h-1zM422 812h1v1h-1zM422 793h1v19h-1zM423 792h1v1h-1zM424 792h1v1h-1zM424 812h1v1h-1zM424 793h1v19h-1zM425 812h1v1h-1zM426 792h1v1h-1zM426 812h1v1h-1zM426 793h1v19h-1zM427 792h1v1h-1zM428 792h1v1h-1zM428 812h1v1h-1zM428 793h1v19h-1zM429 812h2v1h-2zM431 792h1v1h-1zM431 812h1v1h-1zM431 793h1v19h-1zM432 792h1v1h-1zM433 792h1v1h-1zM433 812h1v1h-1zM433 793h1v19h-1zM434 812h4v1h-4zM438 792h3v1h-3zM438 812h3v1h-3zM438 793h1v19h-1zM440 793h1v19h-1zM441 812h4v1h-4zM445 792h1v1h-1zM445 812h1v1h-1zM445 793h1v19h-1zM446 792h2v1h-2zM448 792h1v1h-1zM448 812h1v1h-1zM448 793h1v19h-1zM449 812h1v1h-1zM450 792h1v1h-1zM450 812h1v1h-1zM450 793h1v19h-1zM451 792h1v1h-1zM452 792h1v1h-1zM452 812h1v1h-1zM452 793h1v19h-1zM453 812h1v1h-1zM454 792h1v1h-1zM454 812h1v1h-1zM454 793h1v19h-1zM455 792h1v1h-1zM456 792h1v1h-1zM456 812h1v1h-1zM456 793h1v19h-1zM457 812h1v1h-1zM458 792h1v1h-1zM458 812h1v1h-1zM458 793h1v19h-1zM459 792h4v1h-4zM463 792h2v1h-2zM463 812h2v1h-2zM463 793h2v19h-2zM465 792h5v1h-5zM470 792h1v1h-1zM470 812h1v1h-1zM470 793h1v19h-1zM471 812h2v1h-2zM473 792h1v1h-1zM473 812h1v1h-1zM473 793h1v19h-1zM474 792h1v1h-1zM475 792h1v1h-1zM475 812h1v1h-1zM475 793h1v19h-1zM476 812h1v1h-1zM477 792h1v1h-1zM477 812h1v1h-1zM477 793h1v19h-1zM478 792h1v1h-1zM479 792h1v1h-1zM479 812h1v1h-1zM479 793h1v19h-1zM480 812h1v1h-1zM481 792h1v1h-1zM481 812h1v1h-1zM481 793h1v19h-1zM482 792h2v1h-2zM484 792h1v1h-1zM484 812h1v1h-1zM484 793h1v19h-1zM485 812h4v1h-4zM489 792h2v1h-2zM489 812h2v1h-2zM489 793h2v19h-2zM491 812h5v1h-5zM496 792h1v1h-1zM496 812h1v1h-1zM496 793h1v19h-1zM497 792h1v1h-1zM498 792h1v1h-1zM498 812h1v1h-1zM498 793h1v19h-1zM499 812h1v1h-1zM500 792h1v1h-1zM500 812h1v1h-1zM500 793h1v19h-1zM501 792h1v1h-1zM502 792h1v1h-1zM502 812h1v1h-1zM502 793h1v19h-1zM503 812h1v1h-1zM504 792h1v1h-1zM504 812h1v1h-1zM504 793h1v19h-1zM505 792h2v1h-2zM507 792h1v1h-1zM507 812h1v1h-1zM507 793h1v19h-1zM508 812h1v1h-1zM509 792h1v1h-1zM509 812h1v1h-1zM509 793h1v19h-1zM510 792h4v1h-4zM514 792h3v1h-3zM514 812h3v1h-3zM514 793h1v19h-1zM516 793h1v19h-1zM517 792h3v1h-3zM520 792h1v1h-1zM520 812h1v1h-1zM520 793h1v19h-1zM521 812h2v1h-2zM523 792h1v1h-1zM523 812h1v1h-1zM523 793h1v19h-1zM524 792h2v1h-2zM526 792h2v1h-2zM526 812h2v1h-2zM526 793h2v19h-2zM528 792h1v1h-1zM529 792h1v1h-1zM529 812h1v1h-1zM529 793h1v19h-1zM530 812h1v1h-1zM531 792h1v1h-1zM531 812h1v1h-1zM531 793h1v19h-1zM532 792h2v1h-2zM534 792h1v1h-1zM534 812h1v1h-1zM534 793h1v19h-1zM535 812h4v1h-4zM539 792h3v1h-3zM539 812h3v1h-3zM539 793h1v19h-1zM541 793h1v19h-1zM542 812h4v1h-4zM546 792h1v1h-1zM546 812h1v1h-1zM546 793h1v19h-1zM547 792h1v1h-1zM548 792h1v1h-1zM548 812h1v1h-1zM548 793h1v19h-1zM549 812h2v1h-2zM551 792h1v1h-1zM551 812h1v1h-1zM551 793h1v19h-1zM552 792h1v1h-1zM553 792h1v1h-1zM553 812h1v1h-1zM553 793h1v19h-1zM554 812h1v1h-1zM555 792h1v1h-1zM555 812h1v1h-1zM555 793h1v19h-1zM556 792h1v1h-1zM557 792h1v1h-1zM557 812h1v1h-1zM557 793h1v19h-1zM558 812h1v1h-1zM559 792h1v1h-1zM559 812h1v1h-1zM559 793h1v19h-1zM560 792h4v1h-4zM564 792h3v1h-3zM564 812h3v1h-3zM564 793h1v19h-1zM566 793h1v19h-1zM567 792h4v1h-4zM571 792h1v1h-1zM571 812h1v1h-1zM571 793h1v19h-1zM572 812h2v1h-2zM574 792h1v1h-1zM574 812h1v1h-1zM574 793h1v19h-1zM575 792h1v1h-1zM576 792h1v1h-1zM576 812h1v1h-1zM576 793h1v19h-1zM577 812h1v1h-1zM578 792h1v1h-1zM578 812h1v1h-1zM578 793h1v19h-1zM579 792h1v1h-1zM580 792h1v1h-1zM580 812h1v1h-1zM580 793h1v19h-1zM581 812h1v1h-1zM582 792h1v1h-1zM582 812h1v1h-1zM582 793h1v19h-1zM583 792h2v1h-2zM585 792h1v1h-1zM585 812h1v1h-1zM585 793h1v19h-1zM586 812h4v1h-4zM590 792h3v1h-3zM590 812h3v1h-3zM590 793h1v19h-1zM592 793h1v19h-1zM593 812h3v1h-3zM596 792h1v1h-1zM596 812h1v1h-1zM596 793h1v19h-1zM597 792h2v1h-2zM599 792h1v1h-1zM599 812h1v1h-1zM599 793h1v19h-1zM600 812h1v1h-1zM601 792h1v1h-1zM601 812h1v1h-1zM601 793h1v19h-1zM602 792h1v1h-1zM603 792h1v1h-1zM603 812h1v1h-1zM603 793h1v19h-1zM604 812h1v1h-1zM605 792h1v1h-1zM605 812h1v1h-1zM605 793h1v19h-1zM606 792h1v1h-1zM607 792h1v1h-1zM607 812h1v1h-1zM607 793h1v19h-1zM608 812h2v1h-2zM610 792h1v1h-1zM610 812h1v1h-1zM610 793h1v19h-1zM611 792h3v1h-3zM614 792h4v1h-4zM614 812h4v1h-4zM614 793h1v19h-1zM617 793h1v19h-1zM618 792h3v1h-3zM621 792h2v1h-2zM621 812h2v1h-2zM621 793h2v19h-2zM623 812h1v1h-1zM624 792h1v1h-1zM624 812h1v1h-1zM624 793h1v19h-1zM625 792h1v1h-1zM626 792h1v1h-1zM626 812h1v1h-1zM626 793h1v19h-1zM627 812h2v1h-2zM629 792h2v1h-2zM629 812h2v1h-2zM629 793h2v19h-2zM631 812h1v1h-1zM632 792h1v1h-1zM632 812h1v1h-1zM632 793h1v19h-1zM633 792h2v1h-2zM635 792h1v1h-1zM635 812h1v1h-1zM635 793h1v19h-1zM636 812h3v1h-3zM639 792h1v1h-1zM639 812h1v1h-1zM639 793h1v19h-1zM640 792h2v1h-2zM642 792h1v1h-1zM642 812h1v1h-1zM642 793h1v19h-1zM643 812h4v1h-4zM647 792h1v1h-1zM647 812h1v1h-1zM647 793h1v19h-1zM648 792h1v1h-1zM649 792h1v1h-1zM649 812h1v1h-1zM649 793h1v19h-1zM650 812h1v1h-1zM651 792h1v1h-1zM651 812h1v1h-1zM651 793h1v19h-1zM652 792h2v1h-2zM654 792h1v1h-1zM654 812h1v1h-1zM654 793h1v19h-1zM655 812h1v1h-1zM656 792h1v1h-1zM656 812h1v1h-1zM656 793h1v19h-1zM657 792h1v1h-1zM658 792h1v1h-1zM658 812h1v1h-1zM658 793h1v19h-1zM659 812h1v1h-1zM660 792h1v1h-1zM660 812h1v1h-1zM660 793h1v19h-1zM661 792h5v1h-5zM666 792h2v1h-2zM666 812h2v1h-2zM666 793h2v19h-2zM668 792h4v1h-4zM672 792h1v1h-1zM672 812h1v1h-1zM672 793h1v19h-1zM673 812h2v1h-2zM675 792h1v1h-1zM675 812h1v1h-1zM675 793h1v19h-1zM676 792h1v1h-1zM677 792h1v1h-1zM677 812h1v1h-1zM677 793h1v19h-1zM678 812h1v1h-1zM679 792h1v1h-1zM679 812h1v1h-1zM679 793h1v19h-1zM680 792h1v1h-1zM681 792h1v1h-1zM681 812h1v1h-1zM681 793h1v19h-1zM682 812h1v1h-1zM683 792h1v1h-1zM683 812h1v1h-1zM683 793h1v19h-1zM684 792h2v1h-2zM686 792h1v1h-1zM686 812h1v1h-1zM686 793h1v19h-1zM687 812h4v1h-4zM691 792h1v1h-1zM691 812h1v1h-1zM691 793h1v19h-1zM692 812h5v1h-5zM697 792h1v1h-1zM697 812h1v1h-1zM697 793h1v19h-1zM698 792h2v1h-2zM700 792h1v1h-1zM700 812h1v1h-1zM700 793h1v19h-1zM701 812h1v1h-1zM702 792h1v1h-1zM702 812h1v1h-1zM702 793h1v19h-1zM703 792h1v1h-1zM704 792h1v1h-1zM704 812h1v1h-1zM704 793h1v19h-1zM705 812h1v1h-1zM706 792h1v1h-1zM706 812h1v1h-1zM706 793h1v19h-1zM707 792h1v1h-1zM708 792h1v1h-1zM708 812h1v1h-1zM708 793h1v19h-1zM709 812h1v1h-1zM710 792h1v1h-1zM710 812h1v1h-1zM710 793h1v19h-1zM711 792h4v1h-4zM715 792h2v1h-2zM715 812h2v1h-2zM715 793h2v19h-2zM717 792h6v1h-6zM723 792h1v1h-1zM723 812h1v1h-1zM723 793h1v19h-1zM724 812h1v1h-1zM725 792h1v1h-1zM725 812h1v1h-1zM725 793h1v19h-1zM726 792h1v1h-1zM727 792h1v1h-1zM727 812h1v1h-1zM727 793h1v19h-1zM728 812h1v1h-1zM729 792h1v1h-1zM729 812h1v1h-1zM729 793h1v19h-1zM730 792h1v1h-1zM731 792h1v1h-1zM731 812h1v1h-1zM731 793h1v19h-1zM732 812h2v1h-2zM734 792h1v1h-1zM734 812h1v1h-1zM734 793h1v19h-1zM735 792h1v1h-1zM736 792h1v1h-1zM736 812h1v1h-1zM736 793h1v19h-1zM737 812h4v1h-4zM741 792h3v1h-3zM741 812h3v1h-3zM741 793h1v19h-1zM743 793h1v19h-1zM744 812h3v1h-3zM747 792h1v1h-1zM747 812h1v1h-1zM747 793h1v19h-1zM748 792h2v1h-2zM750 792h1v1h-1zM750 812h1v1h-1zM750 793h1v19h-1zM751 812h1v1h-1zM752 792h1v1h-1zM752 812h1v1h-1zM752 793h1v19h-1zM753 792h1v1h-1zM754 792h1v1h-1zM754 812h1v1h-1zM754 793h1v19h-1zM755 812h1v1h-1zM756 792h1v1h-1zM756 812h1v1h-1zM756 793h1v19h-1zM757 792h2v1h-2zM759 792h1v1h-1zM759 812h1v1h-1zM759 793h1v19h-1zM760 812h1v1h-1zM761 792h1v1h-1zM761 812h1v1h-1zM761 793h1v19h-1zM762 792h4v1h-4zM766 792h3v1h-3zM766 812h3v1h-3zM766 793h1v19h-1zM768 793h1v19h-1zM769 792h4v1h-4zM773 792h1v1h-1zM773 812h1v1h-1zM773 793h1v19h-1zM774 812h2v1h-2zM776 792h1v1h-1zM776 812h1v1h-1zM776 793h1v19h-1zM777 792h1v1h-1zM778 792h1v1h-1zM778 812h1v1h-1zM778 793h1v19h-1zM779 812h1v1h-1zM780 792h1v1h-1zM780 812h1v1h-1zM780 793h1v19h-1zM781 792h1v1h-1zM782 792h1v1h-1zM782 812h1v1h-1zM782 793h1v19h-1zM783 812h1v1h-1zM784 792h1v1h-1zM784 812h1v1h-1zM784 793h1v19h-1zM785 792h1v1h-1zM786 792h1v1h-1zM786 812h1v1h-1zM786 793h1v19h-1zM787 812h4v1h-4zM791 792h1v1h-1zM791 812h1v1h-1zM791 793h1v19h-1zM792 792h1v1h-1zM793 792h2v1h-2zM793 812h2v1h-2zM793 793h2v19h-2zM795 812h3v1h-3zM798 792h1v1h-1zM798 812h1v1h-1zM798 793h1v19h-1zM799 792h1v1h-1z"/><path fill="#429298" d="M338 793h2v19h-2zM364 793h1v19h-1zM439 793h1v19h-1zM515 793h1v19h-1zM540 793h1v19h-1zM565 793h1v19h-1zM591 793h1v19h-1zM615 793h2v19h-2zM742 793h1v19h-1zM767 793h1v19h-1z"/>
<path fill="#45a2a8" d="M303 817h1v1h-1zM303 837h1v1h-1zM303 818h1v19h-1zM304 817h1v1h-1zM305 817h4v1h-4zM305 837h4v1h-4zM305 818h1v19h-1zM308 818h1v19h-1zM309 817h3v1h-3zM312 817h1v1h-1zM312 837h1v1h-1zM312 818h1v19h-1zM313 837h1v1h-1zM314 817h1v1h-1zM314 837h1v1h-1zM314 818h1v19h-1zM315 817h2v1h-2zM317 817h1v1h-1zM317 837h1v1h-1zM317 818h1v19h-1zM318 837h1v1h-1zM319 817h3v1h-3zM319 837h3v1h-3zM319 818h1v19h-1zM321 818h1v19h-1zM322 817h1v1h-1zM323 817h1v1h-1zM323 837h1v1h-1zM323 818h1v19h-1zM324 817h1v1h-1zM325 817h2v1h-2zM325 837h2v1h-2zM325 818h2v19h-2zM327 837h1v1h-1zM328 817h1v1h-1zM328 837h1v1h-1zM328 818h1v19h-1zM329 837h1v1h-1zM330 817h3v1h-3zM330 837h3v1h-3zM330 818h1v19h-1zM332 818h1v19h-1zM333 817h1v1h-1zM334 817h1v1h-1zM334 837h1v1h-1zM334 818h1v19h-1zM335 837h2v1h-2zM337 817h4v1h-4zM337 837h4v1h-4zM337 818h1v19h-1zM340 818h1v19h-1zM341 837h1v1h-1zM342 817h1v1h-1zM342 837h1v1h-1zM342 818h1v19h-1zM343 817h1v1h-1zM344 817h2v1h-2zM344 837h2v1h-2zM344 818h2v19h-2zM346 817h1v1h-1zM347 817h11v1h-11zM347 837h11v1h-11zM347 818h1v19h-1zM357 818h1v19h-1zM358 837h2v1h-2zM360 817h1v1h-1zM360 837h1v1h-1zM360 818h1v19h-1zM361 817h2v1h-2zM363 817h3v1h-3zM363 837h3v1h-3zM363 818h1v19h-1zM365 818h1v19h-1zM366 817h1v1h-1zM367 817h1v1h-1zM367 837h1v1h-1zM367 818h1v19h-1zM368 837h1v1h-1zM369 817h1v1h-1zM369 837h1v1h-1zM369 818h1v19h-1zM370 817h1v1h-1zM371 817h10v1h-10zM371 837h10v1h-10zM371 818h1v19h-1zM380 818h1v19h-1zM381 817h1v1h-1zM382 817h2v1h-2zM382 837h2v1h-2zM382 818h2v19h-2zM384 817h1v1h-1zM385 817h1v1h-1zM385 837h1v1h-1zM385 818h1v19h-1zM386 837h3v1h-3zM389 817h1v1h-1zM389 837h1v1h-1zM389 818h1v19h-1zM390 837h3v1h-3zM393 817h1v1h-1zM393 837h1v1h-1zM393 818h1v19h-1zM394 817h1v1h-1zM395 817h10v1h-10zM395 837h10v1h-10zM395 818h1v19h-1zM404 818h1v19h-1zM405 817h1v1h-1zM406 817h3v1h-3zM406 837h3v1h-3zM406 818h1v19h-1zM408 818h1v19h-1zM409 837h1v1h-1zM410 817h1v1h-1zM410 837h1v1h-1zM410 818h1v19h-1zM411 817h2v1h-2zM413 817h1v1h-1zM413 837h1v1h-1zM413 818h1v19h-1zM414 837h1v1h-1zM415 817h1v1h-1zM415 837h1v1h-1zM415 818h1v19h-1zM416 817h2v1h-2zM418 817h1v1h-1zM418 837h1v1h-1zM418 818h1v19h-1zM419 837h1v1h-1zM420 817h7v1h-7zM420 837h7v1h-7zM420 818h1v19h-1zM426 818h1v19h-1zM427 817h1v1h-1zM428 817h1v1h-1zM428 837h1v1h-1zM428 818h1v19h-1zM429 817h1v1h-1zM430 817h4v1h-4zM430 837h4v1h-4zM430 818h1v19h-1zM433 818h1v19h-1zM434 817h1v1h-1zM435 817h1v1h-1zM435 837h1v1h-1zM435 818h1v19h-1zM436 837h2v1h-2zM438 817h3v1h-3zM438 837h3v1h-3zM438 818h1v19h-1zM440 818h1v19h-1zM441 837h2v1h-2zM443 817h1v1h-1zM443 837h1v1h-1zM443 818h1v19h-1zM444 817h1v1h-1zM445 817h2v1h-2zM445 837h2v1h-2zM445 818h2v19h-2zM447 817h1v1h-1zM448 817h1v1h-1zM448 837h1v1h-1zM448 818h1v19h-1zM449 817h1v1h-1zM450 817h9v1h-9zM450 837h9v1h-9zM450 818h1v19h-1zM458 818h1v19h-1zM459 837h2v1h-2zM461 817h1v1h-1zM461 837h1v1h-1zM461 818h1v19h-1zM462 817h1v1h-1zM463 817h2v1h-2zM463 837h2v1h-2zM463 818h2v19h-2zM465 817h3v1h-3zM468 817h1v1h-1zM468 837h1v1h-1zM468 818h1v19h-1zM469 837h1v1h-1zM470 817h2v1h-2zM470 837h2v1h-2zM470 818h2v19h-2zM472 837h1v1h-1zM473 817h10v1h-10zM473 837h10v1h-10zM473 818h1v19h-1zM482 818h1v19h-1zM483 837h1v1h-1zM484 817h1v1h-1zM484 837h1v1h-1zM484 818h1v19h-1zM485 817h1v1h-1zM486 817h1v1h-1zM486 837h1v1h-1zM486 818h1v19h-1zM487 837h2v1h-2zM489 817h2v1h-2zM489 837h2v1h-2zM489 818h2v19h-2zM491 837h3v1h-3zM494 817h1v1h-1zM494 837h1v1h-1zM494 818h1v19h-1zM495 817h1v1h-1zM496 817h10v1h-10zM496 837h10v1h-10zM496 818h1v19h-1zM505 818h1v19h-1zM506 817h1v1h-1zM507 817h3v1h-3zM507 837h3v1h-3zM507 818h1v19h-1zM509 818h1v19h-1zM510 837h1v1h-1zM511 817h1v1h-1zM511 837h1v1h-1zM511 818h1v19h-1zM512 817h2v1h-2zM514 817h3v1h-3zM514 837h3v1h-3zM514 818h1v19h-1zM516 818h1v19h-1zM517 817h2v1h-2zM519 817h2v1h-2zM519 837h2v1h-2zM519 818h2v19h-2zM521 817h1v1h-1zM522 817h3v1h-3zM522 837h3v1h-3zM522 818h1v19h-1zM524 818h1v19h-1zM525 837h1v1h-1zM526 817h4v1h-4zM526 837h4v1h-4zM526 818h1v19h-1zM529 818h1v19h-1zM530 817h1v1h-1zM531 817h1v1h-1zM531 837h1v1h-1zM531 818h1v19h-1zM532 817h1v1h-1zM533 817h2v1h-2zM533 837h2v1h-2zM533 818h2v19h-2zM535 817h1v1h-1zM536 817h1v1h-1zM536 837h1v1h-1zM536 818h1v19h-1zM537 837h2v1h-2zM539 817h3v1h-3zM539 837h3v1h-3zM539 818h1v19h-1zM541 818h1v19h-1zM542 837h2v1h-2zM544 817h1v1h-1zM544 837h1v1h-1zM544 818h1v19h-1zM545 817h1v1h-1zM546 817h1v1h-1zM546 837h1v1h-1zM546 818h1v19h-1zM547 837h1v1h-1zM548 817h1v1h-1zM548 837h1v1h-1zM548 818h1v19h-1zM549 837h1v1h-1zM550 817h4v1h-4zM550 837h4v1h-4zM550 818h1v19h-1zM553 818h1v19h-1zM554 817h1v1h-1zM555 817h5v1h-5zM555 837h5v1h-5zM555 818h1v19h-1zM559 818h1v19h-1zM560 837h1v1h-1zM561 817h1v1h-1zM561 837h1v1h-1zM561 818h1v19h-1zM562 817h2v1h-2zM564 817h3v1h-3zM564 837h3v1h-3zM564 818h1v19h-1zM566 818h1v19h-1zM567 817h2v1h-2zM569 817h4v1h-4zM569 837h4v1h-4zM569 818h1v19h-1zM572 818h1v19h-1zM573 837h1v1h-1zM574 817h10v1h-10zM574 837h10v1h-10zM574 818h1v19h-1zM583 818h1v19h-1zM584 837h1v1h-1zM585 817h2v1h-2zM585 837h2v1h-2zM585 818h2v19h-2zM587 837h3v1h-3zM590 817h3v1h-3zM590 837h3v1h-3zM590 818h1v19h-1zM592 818h1v19h-1zM593 837h1v1h-1zM594 817h1v1h-1zM594 837h1v1h-1zM594 818h1v19h-1zM595 817h1v1h-1zM596 817h1v1h-1zM596 837h1v1h-1zM596 818h1v19h-1zM597 837h1v1h-1zM598 817h11v1h-11zM598 837h11v1h-11zM598 818h1v19h-1zM608 818h1v19h-1zM609 817h1v1h-1zM610 817h1v1h-1zM610 837h1v1h-1zM610 818h1v19h-1zM611 837h1v1h-1zM612 817h1v1h-1zM612 837h1v1h-1zM612 818h1v19h-1zM613 817h1v1h-1zM614 817h4v1h-4zM614 837h4v1h-4zM614 818h1v19h-1zM617 818h1v19h-1zM618 817h2v1h-2zM620 817h8v1h-8zM620 837h8v1h-8zM620 818h1v19h-1zM627 818h1v19h-1zM628 837h1v1h-1zM629 817h2v1h-2zM629 837h2v1h-2zM629 818h2v19h-2zM631 817h1v1h-1zM632 817h1v1h-1zM632 837h1v1h-1zM632 818h1v19h-1zM633 817h1v1h-1zM634 817h2v1h-2zM634 837h2v1h-2zM634 818h2v19h-2zM636 817h1v1h-1zM637 817h1v1h-1zM637 837h1v1h-1zM637 818h1v19h-1zM638 837h1v1h-1zM639 817h1v1h-1zM639 837h1v1h-1zM639 818h1v19h-1zM640 817h2v1h-2zM642 817h1v1h-1zM642 837h1v1h-1zM642 818h1v19h-1zM643 837h2v1h-2zM645 817h1v1h-1zM645 837h1v1h-1zM645 818h1v19h-1zM646 817h1v1h-1zM647 817h3v1h-3zM647 837h3v1h-3zM647 818h1v19h-1zM649 818h1v19h-1zM650 837h1v1h-1zM651 817h1v1h-1zM651 837h1v1h-1zM651 818h1v19h-1zM652 837h1v1h-1zM653 817h4v1h-4zM653 837h4v1h-4zM653 818h1v19h-1zM656 818h1v19h-1zM657 817h1v1h-1zM658 817h3v1h-3zM658 837h3v1h-3zM658 818h1v19h-1zM660 818h1v19h-1zM661 837h1v1h-1zM662 817h1v1h-1zM662 837h1v1h-1zM662 818h1v19h-1zM663 817h3v1h-3zM666 817h2v1h-2zM666 837h2v1h-2zM666 818h2v19h-2zM668 817h2v1h-2zM670 817h1v1h-1zM670 837h1v1h-1zM670 818h1v19h-1zM671 837h1v1h-1zM672 817h2v1h-2zM672 837h2v1h-2zM672 818h2v19h-2zM674 837h1v1h-1zM675 817h10v1h-10zM675 837h10v1h-10zM675 818h1v19h-1zM684 818h1v19h-1zM685 837h1v1h-1zM686 817h2v1h-2zM686 837h2v1h-2zM686 818h2v19h-2zM688 837h3v1h-3zM691 817h1v1h-1zM691 837h1v1h-1zM691 818h1v19h-1zM692 837h3v1h-3zM695 817h1v1h-1zM695 837h1v1h-1zM695 818h1v19h-1zM696 817h1v1h-1zM697 817h1v1h-1zM697 837h1v1h-1zM697 818h1v19h-1zM698 837h1v1h-1zM699 817h10v1h-10zM699 837h10v1h-10zM699 818h1v19h-1zM708 818h1v19h-1zM709 837h1v1h-1zM710 817h1v1h-1zM710 837h1v1h-1zM710 818h1v19h-1zM711 837h2v1h-2zM713 817h1v1h-1zM713 837h1v1h-1zM713 818h1v19h-1zM714 817h1v1h-1zM715 817h2v1h-2zM715 837h2v1h-2zM715 818h2v19h-2zM717 817h4v1h-4zM721 817h1v1h-1zM721 837h1v1h-1zM721 818h1v19h-1zM722 837h1v1h-1zM723 817h10v1h-10zM723 837h10v1h-10zM723 818h1v19h-1zM732 818h1v19h-1zM733 837h1v1h-1zM734 817h3v1h-3zM734 837h3v1h-3zM734 818h1v19h-1zM736 818h1v19h-1zM737 817h1v1h-1zM738 817h1v1h-1zM738 837h1v1h-1zM738 818h1v19h-1zM739 837h2v1h-2zM741 817h3v1h-3zM741 837h3v1h-3zM741 818h1v19h-1zM743 818h1v19h-1zM744 837h2v1h-2zM746 817h2v1h-2zM746 837h2v1h-2zM746 818h2v19h-2zM748 837h1v1h-1zM749 817h6v1h-6zM749 837h6v1h-6zM749 818h1v19h-1zM754 818h1v19h-1zM755 837h1v1h-1zM756 817h1v1h-1zM756 837h1v1h-1zM756 818h1v19h-1zM757 837h1v1h-1zM758 817h4v1h-4zM758 837h4v1h-4zM758 818h1v19h-1zM761 818h1v19h-1zM762 837h1v1h-1zM763 817h1v1h-1zM763 837h1v1h-1zM763 818h1v19h-1zM764 817h2v1h-2zM766 817h3v1h-3zM766 837h3v1h-3zM766 818h1v19h-1zM768 818h1v19h-1zM769 817h2v1h-2zM771 817h1v1h-1zM771 837h1v1h-1zM771 818h1v19h-1zM772 837h1v1h-1zM773 817h2v1h-2zM773 837h2v1h-2zM773 818h2v19h-2zM775 837h1v1h-1zM776 817h11v1h-11zM776 837h11v1h-11zM776 818h1v19h-1zM786 818h1v19h-1zM787 817h2v1h-2zM789 817h1v1h-1zM789 837h1v1h-1zM789 818h1v19h-1zM790 837h1v1h-1zM791 817h1v1h-1zM791 837h1v1h-1zM791 818h1v19h-1zM792 817h1v1h-1zM793 817h2v1h-2zM793 837h2v1h-2zM793 818h2v19h-2zM795 837h2v1h-2zM797 817h3v1h-3zM797 837h3v1h-3zM797 818h1v19h-1zM799 818h1v19h-1z"/><path fill="#429298" d="M306 818h2v19h-2zM320 818h1v19h-1zM331 818h1v19h-1zM338 818h2v19h-2zM348 818h9v19h-9zM364 818h1v19h-1zM372 818h8v19h-8zM396 818h8v19h-8zM407 818h1v19h-1zM421 818h5v19h-5zM431 818h2v19h-2zM439 818h1v19h-1zM451 818h7v19h-7zM474 818h8v19h-8zM497 818h8v19h-8zM508 818h1v19h-1zM515 818h1v19h-1zM523 818h1v19h-1zM527 818h2v19h-2zM540 818h1v19h-1zM551 818h2v19h-2zM556 818h3v19h-3zM565 818h1v19h-1zM570 818h2v19h-2zM575 818h8v19h-8zM591 818h1v19h-1zM599 818h9v19h-9zM615 818h2v19h-2zM621 818h6v19h-6zM648 818h1v19h-1zM654 818h2v19h-2zM659 818h1v19h-1zM676 818h8v19h-8zM700 818h8v19h-8zM724 818h8v19h-8zM735 818h1v19h-1zM742 818h1v19h-1zM750 818h4v19h-4zM759 818h2v19h-2zM767 818h1v19h-1zM777 818h9v19h-9zM798 818h1v19h-1z"/>
<path fill="#45a2a8" d="M303 842h3v1h-3zM303 862h3v1h-3zM303 843h1v19h-1zM305 843h1v19h-1zM306 842h1v1h-1zM307 842h2v1h-2zM307 862h2v1h-2zM307 843h2v19h-2zM309 862h1v1h-1zM310 842h1v1h-1zM310 862h1v1h-1zM310 843h1v19h-1zM311 842h1v1h-1zM312 842h1v1h-1zM312 862h1v1h-1zM312 843h1v19h-1zM313 862h1v1h-1zM314 842h1v1h-1zM314 862h1v1h-1zM314 843h1v19h-1zM315 842h1v1h-1zM316 842h9v1h-9zM316 862h9v1h-9zM316 843h1v19h-1zM324 843h1v19h-1zM325 862h1v1h-1zM326 842h9v1h-9zM326 862h9v1h-9zM326 843h1v19h-1zM334 843h1v19h-1zM335 842h1v1h-1zM336 842h23v1h-23zM336 862h23v1h-23zM336 843h1v19h-1zM358 843h1v19h-1zM359 842h1v1h-1zM360 842h1v1h-1zM360 862h1v1h-1zM360 843h1v19h-1zM361 842h2v1h-2zM363 842h24v1h-24zM363 862h24v1h-24zM363 843h1v19h-1zM386 843h1v19h-1zM387 862h2v1h-2zM389 842h1v1h-1zM389 862h1v1h-1zM389 843h1v19h-1zM390 862h2v1h-2zM392 842h12v1h-12zM392 862h12v1h-12zM392 843h1v19h-1zM403 843h1v19h-1zM404 862h1v1h-1zM405 842h7v1h-7zM405 862h7v1h-7zM405 843h1v19h-1zM411 843h1v19h-1zM412 842h1v1h-1zM413 842h1v1h-1zM413 862h1v1h-1zM413 843h1v19h-1zM414 862h1v1h-1zM415 842h1v1h-1zM415 862h1v1h-1zM415 843h1v19h-1zM416 842h1v1h-1zM417 842h20v1h-20zM417 862h20v1h-20zM417 843h1v19h-1zM436 843h1v19h-1zM437 862h1v1h-1zM438 842h3v1h-3zM438 862h3v1h-3zM438 843h1v19h-1zM440 843h1v19h-1zM441 862h1v1h-1zM442 842h18v1h-18zM442 862h18v1h-18zM442 843h1v19h-1zM459 843h1v19h-1zM460 842h1v1h-1zM461 842h4v1h-4zM461 862h4v1h-4zM461 843h1v19h-1zM464 843h1v19h-1zM465 842h3v1h-3zM468 842h19v1h-19zM468 862h19v1h-19zM468 843h1v19h-1zM486 843h1v19h-1zM487 862h2v1h-2zM489 842h2v1h-2zM489 862h2v1h-2zM489 843h2v19h-2zM491 862h1v1h-1zM492 842h1v1h-1zM492 862h1v1h-1zM492 843h1v19h-1zM493 842h1v1h-1zM494 842h1v1h-1zM494 862h1v1h-1zM494 843h1v19h-1zM495 842h1v1h-1zM496 842h12v1h-12zM496 862h12v1h-12zM496 843h1v19h-1zM507 843h1v19h-1zM508 842h1v1h-1zM509 842h4v1h-4zM509 862h4v1h-4zM509 843h1v19h-1zM512 843h1v19h-1zM513 842h1v1h-1zM514 842h3v1h-3zM514 862h3v1h-3zM514 843h1v19h-1zM516 843h1v19h-1zM517 842h1v1h-1zM518 842h3v1h-3zM518 862h3v1h-3zM518 843h1v19h-1zM520 843h1v19h-1zM521 842h1v1h-1zM522 842h5v1h-5zM522 862h5v1h-5zM522 843h1v19h-1zM526 843h1v19h-1zM527 842h1v1h-1zM528 842h10v1h-10zM528 862h10v1h-10zM528 843h1v19h-1zM537 843h1v19h-1zM538 862h1v1h-1zM539 842h3v1h-3zM539 862h3v1h-3zM539 843h1v19h-1zM541 843h1v19h-1zM542 862h1v1h-1zM543 842h4v1h-4zM543 862h4v1h-4zM543 843h1v19h-1zM546 843h1v19h-1zM547 842h1v1h-1zM548 842h15v1h-15zM548 862h15v1h-15zM548 843h1v19h-1zM562 843h1v19h-1zM563 842h1v1h-1zM564 842h3v1h-3zM564 862h3v1h-3zM564 843h1v19h-1zM566 843h1v19h-1zM567 842h1v1h-1zM568 842h12v1h-12zM568 862h12v1h-12zM568 843h1v19h-1zM579 843h1v19h-1zM580 862h1v1h-1zM581 842h6v1h-6zM581 862h6v1h-6zM581 843h1v19h-1zM586 843h1v19h-1zM587 842h1v1h-1zM588 842h1v1h-1zM588 862h1v1h-1zM588 843h1v19h-1zM589 862h1v1h-1zM590 842h3v1h-3zM590 862h3v1h-3zM590 843h1v19h-1zM592 843h1v19h-1zM593 862h1v1h-1zM594 842h1v1h-1zM594 862h1v1h-1zM594 843h1v19h-1zM595 862h1v1h-1zM596 842h15v1h-15zM596 862h15v1h-15zM596 843h1v19h-1zM610 843h1v19h-1zM611 842h1v1h-1zM612 842h6v1h-6zM612 862h6v1h-6zM612 843h1v19h-1zM617 843h1v19h-1zM618 842h1v1h-1zM619 842h5v1h-5zM619 862h5v1h-5zM619 843h1v19h-1zM623 843h1v19h-1zM624 842h1v1h-1zM625 842h15v1h-15zM625 862h15v1h-15zM625 843h1v19h-1zM639 843h1v19h-1zM640 842h2v1h-2zM642 842h1v1h-1zM642 862h1v1h-1zM642 843h1v19h-1zM643 862h1v1h-1zM644 842h20v1h-20zM644 862h20v1h-20zM644 843h1v19h-1zM663 843h1v19h-1zM664 842h2v1h-2zM666 842h2v1h-2zM666 862h2v1h-2zM666 843h2v19h-2zM668 842h1v1h-1zM669 842h18v1h-18zM669 862h18v1h-18zM669 843h1v19h-1zM686 843h1v19h-1zM687 842h2v1h-2zM689 842h1v1h-1zM689 862h1v1h-1zM689 843h1v19h-1zM690 862h1v1h-1zM691 842h1v1h-1zM691 862h1v1h-1zM691 843h1v19h-1zM692 862h2v1h-2zM694 842h11v1h-11zM694 862h11v1h-11zM694 843h1v19h-1zM704 843h1v19h-1zM705 842h1v1h-1zM706 842h5v1h-5zM706 862h5v1h-5zM706 843h1v19h-1zM710 843h1v19h-1zM711 862h1v1h-1zM712 842h5v1h-5zM712 862h5v1h-5zM712 843h1v19h-1zM716 843h1v19h-1zM717 842h3v1h-3zM720 842h2v1h-2zM720 862h2v1h-2zM720 843h2v19h-2zM722 862h1v1h-1zM723 842h17v1h-17zM723 862h17v1h-17zM723 843h1v19h-1zM739 843h1v19h-1zM740 862h1v1h-1zM741 842h3v1h-3zM741 862h3v1h-3zM741 843h1v19h-1zM743 843h1v19h-1zM744 862h1v1h-1zM745 842h3v1h-3zM745 862h3v1h-3zM745 843h1v19h-1zM747 843h1v19h-1zM748 862h1v1h-1zM749 842h16v1h-16zM749 862h16v1h-16zM749 843h1v19h-1zM764 843h1v19h-1zM765 842h1v1h-1zM766 842h3v1h-3zM766 862h3v1h-3zM766 843h1v19h-1zM768 843h1v19h-1zM769 842h1v1h-1zM770 842h7v1h-7zM770 862h7v1h-7zM770 843h1v19h-1zM776 843h1v19h-1zM777 862h1v1h-1zM778 842h10v1h-10zM778 862h10v1h-10zM778 843h1v19h-1zM787 843h1v19h-1zM788 862h1v1h-1zM789 842h1v1h-1zM789 862h1v1h-1zM789 843h1v19h-1zM790 862h1v1h-1zM791 842h1v1h-1zM791 862h1v1h-1zM791 843h1v19h-1zM792 842h1v1h-1zM793 842h3v1h-3zM793 862h3v1h-3zM793 843h1v19h-1zM795 843h1v19h-1zM796 842h1v1h-1zM797 842h3v1h-3zM797 862h3v1h-3zM797 843h1v19h-1zM799 843h1v19h-1z"/><path fill="#429298" d="M304 843h1v19h-1zM317 843h7v19h-7zM327 843h7v19h-7zM337 843h21v19h-21zM364 843h22v19h-22zM393 843h10v19h-10zM406 843h5v19h-5zM418 843h18v19h-18zM439 843h1v19h-1zM443 843h16v19h-16zM462 843h2v19h-2zM469 843h17v19h-17zM497 843h10v19h-10zM510 843h2v19h-2zM515 843h1v19h-1zM519 843h1v19h-1zM523 843h3v19h-3zM529 843h8v19h-8zM540 843h1v19h-1zM544 843h2v19h-2zM549 843h13v19h-13zM565 843h1v19h-1zM569 843h10v19h-10zM582 843h4v19h-4zM591 843h1v19h-1zM597 843h13v19h-13zM613 843h4v19h-4zM620 843h3v19h-3zM626 843h13v19h-13zM645 843h18v19h-18zM670 843h16v19h-16zM695 843h9v19h-9zM707 843h3v19h-3zM713 843h3v19h-3zM724 843h15v19h-15zM742 843h1v19h-1zM746 843h1v19h-1zM750 843h14v19h-14zM767 843h1v19h-1zM771 843h5v19h-5zM779 843h8v19h-8zM794 843h1v19h-1zM798 843h1v19h-1z"/>
<path fill="#45a2a8" d="M303 867h10v1h-10zM303 887h10v1h-10zM303 868h1v19h-1zM312 868h1v19h-1zM313 887h1v1h-1zM314 867h2v1h-2zM314 887h2v1h-2zM314 868h2v19h-2zM316 887h1v1h-1zM317 867h1v1h-1zM317 887h1v1h-1zM317 868h1v19h-1zM318 867h1v1h-1zM319 867h7v1h-7zM319 887h7v1h-7zM319 868h1v19h-1zM325 868h1v19h-1zM326 887h2v1h-2zM328 867h2v1h-2zM328 887h2v1h-2zM328 868h2v19h-2zM330 887h1v1h-1zM331 867h4v1h-4zM331 887h4v1h-4zM331 868h1v19h-1zM334 868h1v19h-1zM335 887h1v1h-1zM336 867h8v1h-8zM336 887h8v1h-8zM336 868h1v19h-1zM343 868h1v19h-1zM344 867h1v1h-1zM345 867h12v1h-12zM345 887h12v1h-12zM345 868h1v19h-1zM356 868h1v19h-1zM357 887h1v1h-1zM358 867h4v1h-4zM358 887h4v1h-4zM358 868h1v19h-1zM361 868h1v19h-1zM362 867h1v1h-1zM363 867h5v1h-5zM363 887h5v1h-5zM363 868h1v19h-1zM367 868h1v19h-1zM368 867h2v1h-2zM370 867h2v1h-2zM370 887h2v1h-2zM370 868h2v19h-2zM372 887h1v1h-1zM373 867h2v1h-2zM373 887h2v1h-2zM373 868h2v19h-2zM375 867h1v1h-1zM376 867h12v1h-12zM376 887h12v1h-12zM376 868h1v19h-1zM387 868h1v19h-1zM388 887h1v1h-1zM389 867h10v1h-10zM389 887h10v1h-10zM389 868h1v19h-1zM398 868h1v19h-1zM399 867h1v1h-1zM400 867h1v1h-1zM400 887h1v1h-1zM400 868h1v19h-1zM401 867h2v1h-2zM403 867h6v1h-6zM403 887h6v1h-6zM403 868h1v19h-1zM408 868h1v19h-1zM409 867h1v1h-1zM410 867h2v1h-2zM410 887h2v1h-2zM410 868h2v19h-2zM412 867h1v1h-1zM413 867h1v1h-1zM413 887h1v1h-1zM413 868h1v19h-1zM414 887h1v1h-1zM415 867h14v1h-14zM415 887h14v1h-14zM415 868h1v19h-1zM428 868h1v19h-1zM429 867h1v1h-1zM430 867h1v1h-1zM430 887h1v1h-1zM430 868h1v19h-1zM431 867h1v1h-1zM432 867h13v1h-13zM432 887h13v1h-13zM432 868h1v19h-1zM444 868h1v19h-1zM445 867h1v1h-1zM446 867h2v1h-2zM446 887h2v1h-2zM446 868h2v19h-2zM448 887h1v1h-1zM449 867h2v1h-2zM449 887h2v1h-2zM449 868h2v19h-2zM451 867h1v1h-1zM452 867h4v1h-4zM452 887h4v1h-4zM452 868h1v19h-1zM455 868h1v19h-1zM456 867h1v1h-1zM457 867h2v1h-2zM457 887h2v1h-2zM457 868h2v19h-2zM459 887h1v1h-1zM460 867h5v1h-5zM460 887h5v1h-5zM460 868h1v19h-1zM464 868h1v19h-1zM465 867h2v1h-2zM467 867h4v1h-4zM467 887h4v1h-4zM467 868h1v19h-1zM470 868h1v19h-1zM471 867h1v1h-1zM472 867h15v1h-15zM472 887h15v1h-15zM472 868h1v19h-1zM486 868h1v19h-1zM487 867h1v1h-1zM488 867h3v1h-3zM488 887h3v1h-3zM488 868h1v19h-1zM490 868h1v19h-1zM491 887h1v1h-1zM492 867h9v1h-9zM492 887h9v1h-9zM492 868h1v19h-1zM500 868h1v19h-1zM501 867h1v1h-1zM502 867h4v1h-4zM502 887h4v1h-4zM502 868h1v19h-1zM505 868h1v19h-1zM506 867h1v1h-1zM507 867h3v1h-3zM507 887h3v1h-3zM507 868h1v19h-1zM509 868h1v19h-1zM510 887h1v1h-1zM511 867h32v1h-32zM511 887h32v1h-32zM511 868h1v19h-1zM542 868h1v19h-1zM543 867h1v1h-1zM544 867h8v1h-8zM544 887h8v1h-8zM544 868h1v19h-1zM551 868h1v19h-1zM552 867h1v1h-1zM553 867h5v1h-5zM553 887h5v1h-5zM553 868h1v19h-1zM557 868h1v19h-1zM558 887h2v1h-2zM560 867h3v1h-3zM560 887h3v1h-3zM560 868h1v19h-1zM562 868h1v19h-1zM563 887h1v1h-1zM564 867h6v1h-6zM564 887h6v1h-6zM564 868h1v19h-1zM569 868h1v19h-1zM570 887h1v1h-1zM571 867h1v1h-1zM571 887h1v1h-1zM571 868h1v19h-1zM572 867h1v1h-1zM573 867h1v1h-1zM573 887h1v1h-1zM573 868h1v19h-1zM574 887h1v1h-1zM575 867h7v1h-7zM575 887h7v1h-7zM575 868h1v19h-1zM581 868h1v19h-1zM582 887h1v1h-1zM583 867h6v1h-6zM583 887h6v1h-6zM583 868h1v19h-1zM588 868h1v19h-1zM589 887h1v1h-1zM590 867h3v1h-3zM590 887h3v1h-3zM590 868h1v19h-1zM592 868h1v19h-1zM593 867h1v1h-1zM594 867h1v1h-1zM594 887h1v1h-1zM594 868h1v19h-1zM595 887h1v1h-1zM596 867h8v1h-8zM596 887h8v1h-8zM596 868h1v19h-1zM603 868h1v19h-1zM604 867h1v1h-1zM605 867h2v1h-2zM605 887h2v1h-2zM605 868h2v19h-2zM607 887h2v1h-2zM609 867h17v1h-17zM609 887h17v1h-17zM609 868h1v19h-1zM625 868h1v19h-1zM626 867h1v1h-1zM627 867h2v1h-2zM627 887h2v1h-2zM627 868h2v19h-2zM629 887h1v1h-1zM630 867h5v1h-5zM630 887h5v1h-5zM630 868h1v19h-1zM634 868h1v19h-1zM635 867h1v1h-1zM636 867h2v1h-2zM636 887h2v1h-2zM636 868h2v19h-2zM638 887h1v1h-1zM639 867h1v1h-1zM639 887h1v1h-1zM639 868h1v19h-1zM640 867h2v1h-2zM642 867h2v1h-2zM642 887h2v1h-2zM642 868h2v19h-2zM644 867h1v1h-1zM645 867h1v1h-1zM645 887h1v1h-1zM645 868h1v19h-1zM646 867h1v1h-1zM647 867h5v1h-5zM647 887h5v1h-5zM647 868h1v19h-1zM651 868h1v19h-1zM652 887h1v1h-1zM653 867h1v1h-1zM653 887h1v1h-1zM653 868h1v19h-1zM654 867h1v1h-1zM655 867h4v1h-4zM655 887h4v1h-4zM655 868h1v19h-1zM658 868h1v19h-1zM659 887h1v1h-1zM660 867h5v1h-5zM660 887h5v1h-5zM660 868h1v19h-1zM664 868h1v19h-1zM665 867h1v1h-1zM666 867h3v1h-3zM666 887h3v1h-3zM666 868h1v19h-1zM668 868h1v19h-1zM669 887h1v1h-1zM670 867h22v1h-22zM670 887h22v1h-22zM670 868h1v19h-1zM691 868h1v19h-1zM692 887h1v1h-1zM693 867h3v1h-3zM693 887h3v1h-3zM693 868h1v19h-1zM695 868h1v19h-1zM696 887h1v1h-1zM697 867h20v1h-20zM697 887h20v1h-20zM697 868h1v19h-1zM716 868h1v19h-1zM717 867h2v1h-2zM719 867h9v1h-9zM719 887h9v1h-9zM719 868h1v19h-1zM727 868h1v19h-1zM728 887h1v1h-1zM729 867h21v1h-21zM729 887h21v1h-21zM729 868h1v19h-1zM749 868h1v19h-1zM750 867h1v1h-1zM751 867h2v1h-2zM751 887h2v1h-2zM751 868h2v19h-2zM753 887h1v1h-1zM754 867h29v1h-29zM754 887h29v1h-29zM754 868h1v19h-1zM782 868h1v19h-1zM783 867h1v1h-1zM784 867h8v1h-8zM784 887h8v1h-8zM784 868h1v19h-1zM791 868h1v19h-1zM792 867h1v1h-1zM793 867h7v1h-7zM793 887h7v1h-7zM793 868h1v19h-1zM799 868h1v19h-1z"/><path fill="#429298" d="M304 868h8v19h-8zM320 868h5v19h-5zM332 868h2v19h-2zM337 868h6v19h-6zM346 868h10v19h-10zM359 868h2v19h-2zM364 868h3v19h-3zM377 868h10v19h-10zM390 868h8v19h-8zM404 868h4v19h-4zM416 868h12v19h-12zM433 868h11v19h-11zM453 868h2v19h-2zM461 868h3v19h-3zM468 868h2v19h-2zM473 868h13v19h-13zM489 868h1v19h-1zM493 868h7v19h-7zM503 868h2v19h-2zM508 868h1v19h-1zM512 868h30v19h-30zM545 868h6v19h-6zM554 868h3v19h-3zM561 868h1v19h-1zM565 868h4v19h-4zM576 868h5v19h-5zM584 868h4v19h-4zM591 868h1v19h-1zM597 868h6v19h-6zM610 868h15v19h-15zM631 868h3v19h-3zM648 868h3v19h-3zM656 868h2v19h-2zM661 868h3v19h-3zM667 868h1v19h-1zM671 868h20v19h-20zM694 868h1v19h-1zM698 868h18v19h-18zM720 868h7v19h-7zM730 868h19v19h-19zM755 868h27v19h-27zM785 868h6v19h-6zM794 868h5v19h-5z"/>
<path fill="#45a2a8" d="M303 912h1v1h-1zM304 892h4v1h-4zM304 912h4v1h-4zM304 893h1v19h-1zM307 893h1v19h-1zM308 912h2v1h-2zM310 892h12v1h-12zM310 912h12v1h-12zM310 893h1v19h-1zM321 893h1v19h-1zM322 892h1v1h-1zM323 892h6v1h-6zM323 912h6v1h-6zM323 893h1v19h-1zM328 893h1v19h-1zM329 892h1v1h-1zM330 892h1v1h-1zM330 912h1v1h-1zM330 893h1v19h-1zM331 892h1v1h-1zM332 892h10v1h-10zM332 912h10v1h-10zM332 893h1v19h-1zM341 893h1v19h-1zM342 912h1v1h-1zM343 892h7v1h-7zM343 912h7v1h-7zM343 893h1v19h-1zM349 893h1v19h-1zM350 892h1v1h-1zM351 892h2v1h-2zM351 912h2v1h-2zM351 893h2v19h-2zM353 912h2v1h-2zM355 892h9v1h-9zM355 912h9v1h-9zM355 893h1v19h-1zM363 893h1v19h-1zM364 912h3v1h-3zM367 892h22v1h-22zM367 912h22v1h-22zM367 893h1v19h-1zM388 893h1v19h-1zM389 912h1v1h-1zM390 892h1v1h-1zM390 912h1v1h-1zM390 893h1v19h-1zM391 892h1v1h-1zM392 892h13v1h-13zM392 912h13v1h-13zM392 893h1v19h-1zM404 893h1v19h-1zM405 892h1v1h-1zM406 892h1v1h-1zM406 912h1v1h-1zM406 893h1v19h-1zM407 912h1v1h-1zM408 892h2v1h-2zM408 912h2v1h-2zM408 893h2v19h-2zM410 892h1v1h-1zM411 892h1v1h-1zM411 912h1v1h-1zM411 893h1v19h-1zM412 912h1v1h-1zM413 892h9v1h-9zM413 912h9v1h-9zM413 893h1v19h-1zM421 893h1v19h-1zM422 892h3v1h-3zM425 892h3v1h-3zM425 912h3v1h-3zM425 893h1v19h-1zM427 893h1v19h-1zM428 912h1v1h-1zM429 892h2v1h-2zM429 912h2v1h-2zM429 893h2v19h-2zM431 912h1v1h-1zM432 892h4v1h-4zM432 912h4v1h-4zM432 893h1v19h-1zM435 893h1v19h-1zM436 892h1v1h-1zM437 892h2v1h-2zM437 912h2v1h-2zM437 893h2v19h-2zM439 892h1v1h-1zM440 892h1v1h-1zM440 912h1v1h-1zM440 893h1v19h-1zM441 912h2v1h-2zM443 892h6v1h-6zM443 912h6v1h-6zM443 893h1v19h-1zM448 893h1v19h-1zM449 912h1v1h-1zM450 892h24v1h-24zM450 912h24v1h-24zM450 893h1v19h-1zM473 893h1v19h-1zM474 912h2v1h-2zM476 892h4v1h-4zM476 912h4v1h-4zM476 893h1v19h-1zM479 893h1v19h-1zM480 892h1v1h-1zM481 892h1v1h-1zM481 912h1v1h-1zM481 893h1v19h-1zM482 892h1v1h-1zM483 892h1v1h-1zM483 912h1v1h-1zM483 893h1v19h-1zM484 912h1v1h-1zM485 892h3v1h-3zM485 912h3v1h-3zM485 893h1v19h-1zM487 893h1v19h-1zM488 912h1v1h-1zM489 892h1v1h-1zM489 912h1v1h-1zM489 893h1v19h-1zM490 892h1v1h-1zM491 892h16v1h-16zM491 912h16v1h-16zM491 893h1v19h-1zM506 893h1v19h-1zM507 892h1v1h-1zM508 892h3v1h-3zM508 912h3v1h-3zM508 893h1v19h-1zM510 893h1v19h-1zM511 892h2v1h-2zM513 892h5v1h-5zM513 912h5v1h-5zM513 893h1v19h-1zM517 893h1v19h-1zM518 912h2v1h-2zM520 892h3v1h-3zM520 912h3v1h-3zM520 893h1v19h-1zM522 893h1v19h-1zM523 892h1v1h-1zM524 892h1v1h-1zM524 912h1v1h-1zM524 893h1v19h-1zM525 912h1v1h-1zM526 892h8v1h-8zM526 912h8v1h-8zM526 893h1v19h-1zM533 893h1v19h-1zM534 912h1v1h-1zM535 892h8v1h-8zM535 912h8v1h-8zM535 893h1v19h-1zM542 893h1v19h-1zM543 912h1v1h-1zM544 892h4v1h-4zM544 912h4v1h-4zM544 893h1v19h-1zM547 893h1v19h-1zM548 892h1v1h-1zM549 892h7v1h-7zM549 912h7v1h-7zM549 893h1v19h-1zM555 893h1v19h-1zM556 892h1v1h-1zM557 892h8v1h-8zM557 912h8v1h-8zM557 893h1v19h-1zM564 893h1v19h-1zM565 892h1v1h-1zM566 892h1v1h-1zM566 912h1v1h-1zM566 893h1v19h-1zM567 892h1v1h-1zM568 892h13v1h-13zM568 912h13v1h-13zM568 893h1v19h-1zM580 893h1v19h-1zM581 892h2v1h-2zM583 892h8v1h-8zM583 912h8v1h-8zM583 893h1v19h-1zM590 893h1v19h-1zM591 892h1v1h-1zM592 892h8v1h-8zM592 912h8v1h-8zM592 893h1v19h-1zM599 893h1v19h-1zM600 912h1v1h-1zM601 892h7v1h-7zM601 912h7v1h-7zM601 893h1v19h-1zM607 893h1v19h-1zM608 912h2v1h-2zM610 892h1v1h-1zM610 912h1v1h-1zM610 893h1v19h-1zM611 912h1v1h-1zM612 892h1v1h-1zM612 912h1v1h-1zM612 893h1v19h-1zM613 912h2v1h-2zM615 892h3v1h-3zM615 912h3v1h-3zM615 893h1v19h-1zM617 893h1v19h-1zM618 912h2v1h-2zM620 892h17v1h-17zM620 912h17v1h-17zM620 893h1v19h-1zM636 893h1v19h-1zM637 892h1v1h-1zM638 892h1v1h-1zM638 912h1v1h-1zM638 893h1v19h-1zM639 892h1v1h-1zM640 892h7v1h-7zM640 912h7v1h-7zM640 893h1v19h-1zM646 893h1v19h-1zM647 912h2v1h-2zM649 892h2v1h-2zM649 912h2v1h-2zM649 893h2v19h-2zM651 912h1v1h-1zM652 892h2v1h-2zM652 912h2v1h-2zM652 893h2v19h-2zM654 912h1v1h-1zM655 892h4v1h-4zM655 912h4v1h-4zM655 893h1v19h-1zM658 893h1v19h-1zM659 892h3v1h-3zM662 892h9v1h-9zM662 912h9v1h-9zM662 893h1v19h-1zM670 893h1v19h-1zM671 912h2v1h-2zM673 892h19v1h-19zM673 912h19v1h-19zM673 893h1v19h-1zM691 893h1v19h-1zM692 912h1v1h-1zM693 892h20v1h-20zM693 912h20v1h-20zM693 893h1v19h-1zM712 893h1v19h-1zM713 892h1v1h-1zM714 892h3v1h-3zM714 912h3v1h-3zM714 893h1v19h-1zM716 893h1v19h-1zM717 892h1v1h-1zM718 892h4v1h-4zM718 912h4v1h-4zM718 893h1v19h-1zM721 893h1v19h-1zM722 912h2v1h-2zM724 892h2v1h-2zM724 912h2v1h-2zM724 893h2v19h-2zM726 912h1v1h-1zM727 892h4v1h-4zM727 912h4v1h-4zM727 893h1v19h-1zM730 893h1v19h-1zM731 892h1v1h-1zM732 892h5v1h-5zM732 912h5v1h-5zM732 893h1v19h-1zM736 893h1v19h-1zM737 912h1v1h-1zM738 892h16v1h-16zM738 912h16v1h-16zM738 893h1v19h-1zM753 893h1v19h-1zM754 912h3v1h-3zM757 892h8v1h-8zM757 912h8v1h-8zM757 893h1v19h-1zM764 893h1v19h-1zM765 892h1v1h-1zM766 892h9v1h-9zM766 912h9v1h-9zM766 893h1v19h-1zM774 893h1v19h-1zM775 892h1v1h-1zM776 892h1v1h-1zM776 912h1v1h-1zM776 893h1v19h-1zM777 892h1v1h-1zM778 892h14v1h-14zM778 912h14v1h-14zM778 893h1v19h-1zM791 893h1v19h-1zM792 892h1v1h-1zM793 892h1v1h-1zM793 912h1v1h-1zM793 893h1v19h-1zM794 912h1v1h-1zM795 892h1v1h-1zM795 912h1v1h-1zM795 893h1v19h-1zM796 892h1v1h-1zM797 892h3v1h-3zM797 912h3v1h-3zM797 893h1v19h-1zM799 893h1v19h-1z"/><path fill="#429298" d="M305 893h2v19h-2zM311 893h10v19h-10zM324 893h4v19h-4zM333 893h8v19h-8zM344 893h5v19h-5zM356 893h7v19h-7zM368 893h20v19h-20zM393 893h11v19h-11zM414 893h7v19h-7zM426 893h1v19h-1zM433 893h2v19h-2zM444 893h4v19h-4zM451 893h22v19h-22zM477 893h2v19h-2zM486 893h1v19h-1zM492 893h14v19h-14zM509 893h1v19h-1zM514 893h3v19h-3zM521 893h1v19h-1zM527 893h6v19h-6zM536 893h6v19h-6zM545 893h2v19h-2zM550 893h5v19h-5zM558 893h6v19h-6zM569 893h11v19h-11zM584 893h6v19h-6zM593 893h6v19h-6zM602 893h5v19h-5zM616 893h1v19h-1zM621 893h15v19h-15zM641 893h5v19h-5zM656 893h2v19h-2zM663 893h7v19h-7zM674 893h17v19h-17zM694 893h18v19h-18zM715 893h1v19h-1zM719 893h2v19h-2zM728 893h2v19h-2zM733 893h3v19h-3zM739 893h14v19h-14zM758 893h6v19h-6zM767 893h7v19h-7zM779 893h12v19h-12zM798 893h1v19h-1z"/>
<path fill="#45a2a8" d="M303 917h15v1h-15zM303 937h15v1h-15zM303 918h1v19h-1zM317 918h1v19h-1zM318 917h1v1h-1zM319 917h1v1h-1zM319 937h1v1h-1zM319 918h1v19h-1zM320 917h1v1h-1zM321 917h2v1h-2zM321 937h2v1h-2zM321 918h2v19h-2zM323 937h1v1h-1zM324 917h4v1h-4zM324 937h4v1h-4zM324 918h1v19h-1zM327 918h1v19h-1zM328 937h1v1h-1zM329 917h17v1h-17zM329 937h17v1h-17zM329 918h1v19h-1zM345 918h1v19h-1zM346 917h1v1h-1zM347 917h4v1h-4zM347 937h4v1h-4zM347 918h1v19h-1zM350 918h1v19h-1zM351 937h1v1h-1zM352 917h2v1h-2zM352 937h2v1h-2zM352 918h2v19h-2zM354 937h1v1h-1zM355 917h2v1h-2zM355 937h2v1h-2zM355 918h2v19h-2zM357 917h1v1h-1zM358 917h6v1h-6zM358 937h6v1h-6zM358 918h1v19h-1zM363 918h1v19h-1zM364 917h1v1h-1zM365 917h2v1h-2zM365 937h2v1h-2zM365 918h2v19h-2zM367 937h1v1h-1zM368 917h2v1h-2zM368 937h2v1h-2zM368 918h2v19h-2zM370 937h1v1h-1zM371 917h4v1h-4zM371 937h4v1h-4zM371 918h1v19h-1zM374 918h1v19h-1zM375 917h1v1h-1zM376 917h7v1h-7zM376 937h7v1h-7zM376 918h1v19h-1zM382 918h1v19h-1zM383 937h1v1h-1zM384 917h4v1h-4zM384 937h4v1h-4zM384 918h1v19h-1zM387 918h1v19h-1zM388 937h1v1h-1zM389 917h8v1h-8zM389 937h8v1h-8zM389 918h1v19h-1zM396 918h1v19h-1zM397 917h1v1h-1zM398 917h3v1h-3zM398 937h3v1h-3zM398 918h1v19h-1zM400 918h1v19h-1zM401 917h2v1h-2zM403 917h2v1h-2zM403 937h2v1h-2zM403 918h2v19h-2zM405 937h1v1h-1zM406 917h6v1h-6zM406 937h6v1h-6zM406 918h1v19h-1zM411 918h1v19h-1zM412 937h1v1h-1zM413 917h3v1h-3zM413 937h3v1h-3zM413 918h1v19h-1zM415 918h1v19h-1zM416 917h1v1h-1zM417 917h4v1h-4zM417 937h4v1h-4zM417 918h1v19h-1zM420 918h1v19h-1zM421 917h1v1h-1zM422 917h7v1h-7zM422 937h7v1h-7zM422 918h1v19h-1zM428 918h1v19h-1zM429 937h1v1h-1zM430 917h3v1h-3zM430 937h3v1h-3zM430 918h1v19h-1zM432 918h1v19h-1zM433 937h1v1h-1zM434 917h2v1h-2zM434 937h2v1h-2zM434 918h2v19h-2zM436 917h1v1h-1zM437 917h8v1h-8zM437 937h8v1h-8zM437 918h1v19h-1zM444 918h1v19h-1zM445 917h3v1h-3zM448 917h5v1h-5zM448 937h5v1h-5zM448 918h1v19h-1zM452 918h1v19h-1zM453 917h2v1h-2zM455 917h4v1h-4zM455 937h4v1h-4zM455 918h1v19h-1zM458 918h1v19h-1zM459 937h1v1h-1zM460 917h17v1h-17zM460 937h17v1h-17zM460 918h1v19h-1zM476 918h1v19h-1zM477 937h1v1h-1zM478 917h9v1h-9zM478 937h9v1h-9zM478 918h1v19h-1zM486 918h1v19h-1zM487 917h1v1h-1zM488 917h4v1h-4zM488 937h4v1h-4zM488 918h1v19h-1zM491 918h1v19h-1zM492 917h1v1h-1zM493 917h8v1h-8zM493 937h8v1h-8zM493 918h1v19h-1zM500 918h1v19h-1zM501 937h1v1h-1zM502 917h5v1h-5zM502 937h5v1h-5zM502 918h1v19h-1zM506 918h1v19h-1zM507 917h1v1h-1zM508 917h6v1h-6zM508 937h6v1h-6zM508 918h1v19h-1zM513 918h1v19h-1zM514 917h1v1h-1zM515 917h2v1h-2zM515 937h2v1h-2zM515 918h2v19h-2zM517 937h1v1h-1zM518 917h1v1h-1zM518 937h1v1h-1zM518 918h1v19h-1zM519 937h1v1h-1zM520 917h10v1h-10zM520 937h10v1h-10zM520 918h1v19h-1zM529 918h1v19h-1zM530 937h1v1h-1zM531 917h1v1h-1zM531 937h1v1h-1zM531 918h1v19h-1zM532 917h1v1h-1zM533 917h7v1h-7zM533 937h7v1h-7zM533 918h1v19h-1zM539 918h1v19h-1zM540 917h1v1h-1zM541 917h1v1h-1zM541 937h1v1h-1zM541 918h1v19h-1zM542 937h1v1h-1zM543 917h2v1h-2zM543 937h2v1h-2zM543 918h2v19h-2zM545 917h3v1h-3zM548 917h1v1h-1zM548 937h1v1h-1zM548 918h1v19h-1zM549 937h1v1h-1zM550 917h2v1h-2zM550 937h2v1h-2zM550 918h2v19h-2zM552 937h1v1h-1zM553 917h1v1h-1zM553 937h1v1h-1zM553 918h1v19h-1zM554 937h1v1h-1zM555 917h3v1h-3zM555 937h3v1h-3zM555 918h1v19h-1zM557 918h1v19h-1zM558 937h2v1h-2zM560 917h7v1h-7zM560 937h7v1h-7zM560 918h1v19h-1zM566 918h1v19h-1zM567 937h1v1h-1zM568 917h1v1h-1zM568 937h1v1h-1zM568 918h1v19h-1zM569 917h1v1h-1zM570 917h7v1h-7zM570 937h7v1h-7zM570 918h1v19h-1zM576 918h1v19h-1zM577 937h1v1h-1zM578 917h1v1h-1zM578 937h1v1h-1zM578 918h1v19h-1zM579 917h2v1h-2zM581 917h6v1h-6zM581 937h6v1h-6zM581 918h1v19h-1zM586 918h1v19h-1zM587 937h1v1h-1zM588 917h1v1h-1zM588 937h1v1h-1zM588 918h1v19h-1zM589 937h2v1h-2zM591 917h5v1h-5zM591 937h5v1h-5zM591 918h1v19h-1zM595 918h1v19h-1zM596 917h1v1h-1zM597 917h1v1h-1zM597 937h1v1h-1zM597 918h1v19h-1zM598 937h1v1h-1zM599 917h1v1h-1zM599 937h1v1h-1zM599 918h1v19h-1zM600 917h1v1h-1zM601 917h2v1h-2zM601 937h2v1h-2zM601 918h2v19h-2zM603 917h2v1h-2zM605 917h1v1h-1zM605 937h1v1h-1zM605 918h1v19h-1zM606 917h1v1h-1zM607 917h1v1h-1zM607 937h1v1h-1zM607 918h1v19h-1zM608 937h1v1h-1zM609 917h6v1h-6zM609 937h6v1h-6zM609 918h1v19h-1zM614 918h1v19h-1zM615 937h1v1h-1zM616 917h8v1h-8zM616 937h8v1h-8zM616 918h1v19h-1zM623 918h1v19h-1zM624 937h2v1h-2zM626 917h1v1h-1zM626 937h1v1h-1zM626 918h1v19h-1zM627 917h1v1h-1zM628 917h11v1h-11zM628 937h11v1h-11zM628 918h1v19h-1zM638 918h1v19h-1zM639 917h1v1h-1zM640 917h5v1h-5zM640 937h5v1h-5zM640 918h1v19h-1zM644 918h1v19h-1zM645 917h1v1h-1zM646 917h4v1h-4zM646 937h4v1h-4zM646 918h1v19h-1zM649 918h1v19h-1zM650 917h1v1h-1zM651 917h4v1h-4zM651 937h4v1h-4zM651 918h1v19h-1zM654 918h1v19h-1zM655 917h1v1h-1zM656 917h7v1h-7zM656 937h7v1h-7zM656 918h1v19h-1zM662 918h1v19h-1zM663 917h1v1h-1zM664 917h1v1h-1zM664 937h1v1h-1zM664 918h1v19h-1zM665 917h1v1h-1zM666 917h1v1h-1zM666 937h1v1h-1zM666 918h1v19h-1zM667 917h1v1h-1zM668 917h2v1h-2zM668 937h2v1h-2zM668 918h2v19h-2zM670 917h1v1h-1zM671 917h2v1h-2zM671 937h2v1h-2zM671 918h2v19h-2zM673 937h1v1h-1zM674 917h13v1h-13zM674 937h13v1h-13zM674 918h1v19h-1zM686 918h1v19h-1zM687 937h1v1h-1zM688 917h3v1h-3zM688 937h3v1h-3zM688 918h1v19h-1zM690 918h1v19h-1zM691 937h1v1h-1zM692 917h1v1h-1zM692 937h1v1h-1zM692 918h1v19h-1zM693 937h3v1h-3zM696 917h2v1h-2zM696 937h2v1h-2zM696 918h2v19h-2zM698 937h2v1h-2zM700 917h5v1h-5zM700 937h5v1h-5zM700 918h1v19h-1zM704 918h1v19h-1zM705 917h1v1h-1zM706 917h12v1h-12zM706 937h12v1h-12zM706 918h1v19h-1zM717 918h1v19h-1zM718 917h1v1h-1zM719 917h1v1h-1zM719 937h1v1h-1zM719 918h1v19h-1zM720 937h1v1h-1zM721 917h3v1h-3zM721 937h3v1h-3zM721 918h1v19h-1zM723 918h1v19h-1zM724 937h1v1h-1zM725 917h4v1h-4zM725 937h4v1h-4zM725 918h1v19h-1zM728 918h1v19h-1zM729 937h2v1h-2zM731 917h9v1h-9zM731 937h9v1h-9zM731 918h1v19h-1zM739 918h1v19h-1zM740 937h1v1h-1zM741 917h12v1h-12zM741 937h12v1h-12zM741 918h1v19h-1zM752 918h1v19h-1zM753 937h2v1h-2zM755 917h4v1h-4zM755 937h4v1h-4zM755 918h1v19h-1zM758 918h1v19h-1zM759 917h1v1h-1zM760 917h14v1h-14zM760 937h14v1h-14zM760 918h1v19h-1zM773 918h1v19h-1zM774 917h1v1h-1zM775 917h7v1h-7zM775 937h7v1h-7zM775 918h1v19h-1zM781 918h1v19h-1zM782 937h2v1h-2zM784 917h6v1h-6zM784 937h6v1h-6zM784 918h1v19h-1zM789 918h1v19h-1zM790 917h1v1h-1zM791 917h1v1h-1zM791 937h1v1h-1zM791 918h1v19h-1zM792 917h1v1h-1zM793 917h3v1h-3zM793 937h3v1h-3zM793 918h1v19h-1zM795 918h1v19h-1zM796 917h1v1h-1zM797 917h2v1h-2zM797 937h2v1h-2zM797 918h2v19h-2zM799 937h1v1h-1z"/><path fill="#429298" d="M304 918h13v19h-13zM325 918h2v19h-2zM330 918h15v19h-15zM348 918h2v19h-2zM359 918h4v19h-4zM372 918h2v19h-2zM377 918h5v19h-5zM385 918h2v19h-2zM390 918h6v19h-6zM399 918h1v19h-1zM407 918h4v19h-4zM414 918h1v19h-1zM418 918h2v19h-2zM423 918h5v19h-5zM431 918h1v19h-1zM438 918h6v19h-6zM449 918h3v19h-3zM456 918h2v19h-2zM461 918h15v19h-15zM479 918h7v19h-7zM489 918h2v19h-2zM494 918h6v19h-6zM503 918h3v19h-3zM509 918h4v19h-4zM521 918h8v19h-8zM534 918h5v19h-5zM556 918h1v19h-1zM561 918h5v19h-5zM571 918h5v19h-5zM582 918h4v19h-4zM592 918h3v19h-3zM610 918h4v19h-4zM617 918h6v19h-6zM629 918h9v19h-9zM641 918h3v19h-3zM647 918h2v19h-2zM652 918h2v19h-2zM657 918h5v19h-5zM675 918h11v19h-11zM689 918h1v19h-1zM701 918h3v19h-3zM707 918h10v19h-10zM722 918h1v19h-1zM726 918h2v19h-2zM732 918h7v19h-7zM742 918h10v19h-10zM756 918h2v19h-2zM761 918h12v19h-12zM776 918h5v19h-5zM785 918h4v19h-4zM794 918h1v19h-1z"/>
<path fill="#45a2a8" d="M303 942h14v1h-14zM303 962h14v1h-14zM303 943h1v19h-1zM316 943h1v19h-1zM317 942h1v1h-1zM318 942h11v1h-11zM318 962h11v1h-11zM318 943h1v19h-1zM328 943h1v19h-1zM329 942h1v1h-1zM330 942h5v1h-5zM330 962h5v1h-5zM330 943h1v19h-1zM334 943h1v19h-1zM335 962h2v1h-2zM337 942h7v1h-7zM337 962h7v1h-7zM337 943h1v19h-1zM343 943h1v19h-1zM344 942h1v1h-1zM345 942h8v1h-8zM345 962h8v1h-8zM345 943h1v19h-1zM352 943h1v19h-1zM353 942h1v1h-1zM354 942h1v1h-1zM354 962h1v1h-1zM354 943h1v19h-1zM355 962h1v1h-1zM356 942h11v1h-11zM356 962h11v1h-11zM356 943h1v19h-1zM366 943h1v19h-1zM367 942h2v1h-2zM369 942h1v1h-1zM369 962h1v1h-1zM369 943h1v19h-1zM370 962h1v1h-1zM371 942h4v1h-4zM371 962h4v1h-4zM371 943h1v19h-1zM374 943h1v19h-1zM375 962h1v1h-1zM376 942h3v1h-3zM376 962h3v1h-3zM376 943h1v19h-1zM378 943h1v19h-1zM379 942h1v1h-1zM380 942h12v1h-12zM380 962h12v1h-12zM380 943h1v19h-1zM391 943h1v19h-1zM392 942h1v1h-1zM393 942h2v1h-2zM393 962h2v1h-2zM393 943h2v19h-2zM395 942h1v1h-1zM396 942h19v1h-19zM396 962h19v1h-19zM396 943h1v19h-1zM414 943h1v19h-1zM415 962h2v1h-2zM417 942h6v1h-6zM417 962h6v1h-6zM417 943h1v19h-1zM422 943h1v19h-1zM423 942h1v1h-1zM424 942h1v1h-1zM424 962h1v1h-1zM424 943h1v19h-1zM425 942h1v1h-1zM426 942h4v1h-4zM426 962h4v1h-4zM426 943h1v19h-1zM429 943h1v19h-1zM430 962h1v1h-1zM431 942h4v1h-4zM431 962h4v1h-4zM431 943h1v19h-1zM434 943h1v19h-1zM435 942h2v1h-2zM437 942h1v1h-1zM437 962h1v1h-1zM437 943h1v19h-1zM438 962h1v1h-1zM439 942h3v1h-3zM439 962h3v1h-3zM439 943h1v19h-1zM441 943h1v19h-1zM442 962h2v1h-2zM444 942h19v1h-19zM444 962h19v1h-19zM444 943h1v19h-1zM462 943h1v19h-1zM463 962h2v1h-2zM465 942h1v1h-1zM465 962h1v1h-1zM465 943h1v19h-1zM466 962h1v1h-1zM467 942h6v1h-6zM467 962h6v1h-6zM467 943h1v19h-1zM472 943h1v19h-1zM473 942h1v1h-1zM474 942h1v1h-1zM474 962h1v1h-1zM474 943h1v19h-1zM475 942h2v1h-2zM477 942h20v1h-20zM477 962h20v1h-20zM477 943h1v19h-1zM496 943h1v19h-1zM497 942h1v1h-1zM498 942h26v1h-26zM498 962h26v1h-26zM498 943h1v19h-1zM523 943h1v19h-1zM524 962h1v1h-1zM525 942h6v1h-6zM525 962h6v1h-6zM525 943h1v19h-1zM530 943h1v19h-1zM531 962h1v1h-1zM532 942h24v1h-24zM532 962h24v1h-24zM532 943h1v19h-1zM555 943h1v19h-1zM556 942h1v1h-1zM557 942h10v1h-10zM557 962h10v1h-10zM557 943h1v19h-1zM566 943h1v19h-1zM567 942h1v1h-1zM568 942h1v1h-1zM568 962h1v1h-1zM568 943h1v19h-1zM569 942h3v1h-3zM572 942h12v1h-12zM572 962h12v1h-12zM572 943h1v19h-1zM583 943h1v19h-1zM584 962h1v1h-1zM585 942h7v1h-7zM585 962h7v1h-7zM585 943h1v19h-1zM591 943h1v19h-1zM592 942h1v1h-1zM593 942h1v1h-1zM593 962h1v1h-1zM593 943h1v19h-1zM594 962h1v1h-1zM595 942h3v1h-3zM595 962h3v1h-3zM595 943h1v19h-1zM597 943h1v19h-1zM598 962h1v1h-1zM599 942h7v1h-7zM599 962h7v1h-7zM599 943h1v19h-1zM605 943h1v19h-1zM606 942h1v1h-1zM607 942h17v1h-17zM607 962h17v1h-17zM607 943h1v19h-1zM623 943h1v19h-1zM624 962h1v1h-1zM625 942h5v1h-5zM625 962h5v1h-5zM625 943h1v19h-1zM629 943h1v19h-1zM630 942h1v1h-1zM631 942h2v1h-2zM631 962h2v1h-2zM631 943h2v19h-2zM633 942h1v1h-1zM634 942h3v1h-3zM634 962h3v1h-3zM634 943h1v19h-1zM636 943h1v19h-1zM637 962h1v1h-1zM638 942h5v1h-5zM638 962h5v1h-5zM638 943h1v19h-1zM642 943h1v19h-1zM643 942h1v1h-1zM644 942h2v1h-2zM644 962h2v1h-2zM644 943h2v19h-2zM646 962h1v1h-1zM647 942h5v1h-5zM647 962h5v1h-5zM647 943h1v19h-1zM651 943h1v19h-1zM652 962h1v1h-1zM653 942h1v1h-1zM653 962h1v1h-1zM653 943h1v19h-1zM654 942h2v1h-2zM656 942h2v1h-2zM656 962h2v1h-2zM656 943h2v19h-2zM658 942h1v1h-1zM659 942h35v1h-35zM659 962h35v1h-35zM659 943h1v19h-1zM693 943h1v19h-1zM694 962h2v1h-2zM696 942h2v1h-2zM696 962h2v1h-2zM696 943h2v19h-2zM698 962h1v1h-1zM699 942h1v1h-1zM699 962h1v1h-1zM699 943h1v19h-1zM700 962h1v1h-1zM701 942h4v1h-4zM701 962h4v1h-4zM701 943h1v19h-1zM704 943h1v19h-1zM705 962h1v1h-1zM706 942h3v1h-3zM706 962h3v1h-3zM706 943h1v19h-1zM708 943h1v19h-1zM709 962h1v1h-1zM710 942h4v1h-4zM710 962h4v1h-4zM710 943h1v19h-1zM713 943h1v19h-1zM714 962h1v1h-1zM715 942h2v1h-2zM715 962h2v1h-2zM715 943h2v19h-2zM717 942h2v1h-2zM719 942h3v1h-3zM719 962h3v1h-3zM719 943h1v19h-1zM721 943h1v19h-1zM722 962h1v1h-1zM723 942h4v1h-4zM723 962h4v1h-4zM723 943h1v19h-1zM726 943h1v19h-1zM727 962h1v1h-1zM728 942h1v1h-1zM728 962h1v1h-1zM728 943h1v19h-1zM729 942h1v1h-1zM730 942h5v1h-5zM730 962h5v1h-5zM730 943h1v19h-1zM734 943h1v19h-1zM735 942h1v1h-1zM736 942h4v1h-4zM736 962h4v1h-4zM736 943h1v19h-1zM739 943h1v19h-1zM740 942h1v1h-1zM741 942h1v1h-1zM741 962h1v1h-1zM741 943h1v19h-1zM742 942h1v1h-1zM743 942h3v1h-3zM743 962h3v1h-3zM743 943h1v19h-1zM745 943h1v19h-1zM746 962h1v1h-1zM747 942h1v1h-1zM747 962h1v1h-1zM747 943h1v19h-1zM748 962h1v1h-1zM749 942h4v1h-4zM749 962h4v1h-4zM749 943h1v19h-1zM752 943h1v19h-1zM753 942h2v1h-2zM755 942h6v1h-6zM755 962h6v1h-6zM755 943h1v19h-1zM760 943h1v19h-1zM761 962h1v1h-1zM762 942h13v1h-13zM762 962h13v1h-13zM762 943h1v19h-1zM774 943h1v19h-1zM775 962h2v1h-2zM777 942h10v1h-10zM777 962h10v1h-10zM777 943h1v19h-1zM786 943h1v19h-1zM787 962h1v1h-1zM788 942h9v1h-9zM788 962h9v1h-9zM788 943h1v19h-1zM796 943h1v19h-1zM797 942h2v1h-2zM799 942h1v1h-1zM799 962h1v1h-1zM799 943h1v19h-1z"/><path fill="#429298" d="M304 943h12v19h-12zM319 943h9v19h-9zM331 943h3v19h-3zM338 943h5v19h-5zM346 943h6v19h-6zM357 943h9v19h-9zM372 943h2v19h-2zM377 943h1v19h-1zM381 943h10v19h-10zM397 943h17v19h-17zM418 943h4v19h-4zM427 943h2v19h-2zM432 943h2v19h-2zM440 943h1v19h-1zM445 943h17v19h-17zM468 943h4v19h-4zM478 943h18v19h-18zM499 943h24v19h-24zM526 943h4v19h-4zM533 943h22v19h-22zM558 943h8v19h-8zM573 943h10v19h-10zM586 943h5v19h-5zM596 943h1v19h-1zM600 943h5v19h-5zM608 943h15v19h-15zM626 943h3v19h-3zM635 943h1v19h-1zM639 943h3v19h-3zM648 943h3v19h-3zM660 943h33v19h-33zM702 943h2v19h-2zM707 943h1v19h-1zM711 943h2v19h-2zM720 943h1v19h-1zM724 943h2v19h-2zM731 943h3v19h-3zM737 943h2v19h-2zM744 943h1v19h-1zM750 943h2v19h-2zM756 943h4v19h-4zM763 943h11v19h-11zM778 943h8v19h-8zM789 943h7v19h-7z"/>
<path fill="#45a2a8" d="M303 967h4v1h-4zM303 987h4v1h-4zM303 968h1v19h-1zM306 968h1v19h-1zM307 987h1v1h-1zM308 967h2v1h-2zM308 987h2v1h-2zM308 968h2v19h-2zM310 987h1v1h-1zM311 967h5v1h-5zM311 987h5v1h-5zM311 968h1v19h-1zM315 968h1v19h-1zM316 987h1v1h-1zM317 967h12v1h-12zM317 987h12v1h-12zM317 968h1v19h-1zM328 968h1v19h-1zM329 987h1v1h-1zM330 967h1v1h-1zM330 987h1v1h-1zM330 968h1v19h-1zM331 967h1v1h-1zM332 967h1v1h-1zM332 987h1v1h-1zM332 968h1v19h-1zM333 967h1v1h-1zM334 967h2v1h-2zM334 987h2v1h-2zM334 968h2v19h-2zM336 967h1v1h-1zM337 967h1v1h-1zM337 987h1v1h-1zM337 968h1v19h-1zM338 967h1v1h-1zM339 967h1v1h-1zM339 987h1v1h-1zM339 968h1v19h-1zM340 967h1v1h-1zM341 967h8v1h-8zM341 987h8v1h-8zM341 968h1v19h-1zM348 968h1v19h-1zM349 987h1v1h-1zM350 967h3v1h-3zM350 987h3v1h-3zM350 968h1v19h-1zM352 968h1v19h-1zM353 987h1v1h-1zM354 967h3v1h-3zM354 987h3v1h-3zM354 968h1v19h-1zM356 968h1v19h-1zM357 987h1v1h-1zM358 967h7v1h-7zM358 987h7v1h-7zM358 968h1v19h-1zM364 968h1v19h-1zM365 987h1v1h-1zM366 967h4v1h-4zM366 987h4v1h-4zM366 968h1v19h-1zM369 968h1v19h-1zM370 967h1v1h-1zM371 967h2v1h-2zM371 987h2v1h-2zM371 968h2v19h-2zM373 967h1v1h-1zM374 967h2v1h-2zM374 987h2v1h-2zM374 968h2v19h-2zM376 987h2v1h-2zM378 967h1v1h-1zM378 987h1v1h-1zM378 968h1v19h-1zM379 987h2v1h-2zM381 967h2v1h-2zM381 987h2v1h-2zM381 968h2v19h-2zM383 967h1v1h-1zM384 967h6v1h-6zM384 987h6v1h-6zM384 968h1v19h-1zM389 968h1v19h-1zM390 967h1v1h-1zM391 967h7v1h-7zM391 987h7v1h-7zM391 968h1v19h-1zM397 968h1v19h-1zM398 967h1v1h-1zM399 967h5v1h-5zM399 987h5v1h-5zM399 968h1v19h-1zM403 968h1v19h-1zM404 987h1v1h-1zM405 967h1v1h-1zM405 987h1v1h-1zM405 968h1v19h-1zM406 967h1v1h-1zM407 967h1v1h-1zM407 987h1v1h-1zM407 968h1v19h-1zM408 967h1v1h-1zM409 967h7v1h-7zM409 987h7v1h-7zM409 968h1v19h-1zM415 968h1v19h-1zM416 967h1v1h-1zM417 967h4v1h-4zM417 987h4v1h-4zM417 968h1v19h-1zM420 968h1v19h-1zM421 987h1v1h-1zM422 967h1v1h-1zM422 987h1v1h-1zM422 968h1v19h-1zM423 987h1v1h-1zM424 967h4v1h-4zM424 987h4v1h-4zM424 968h1v19h-1zM427 968h1v19h-1zM428 967h2v1h-2zM430 967h4v1h-4zM430 987h4v1h-4zM430 968h1v19h-1zM433 968h1v19h-1zM434 987h1v1h-1zM435 967h3v1h-3zM435 987h3v1h-3zM435 968h1v19h-1zM437 968h1v19h-1zM438 967h2v1h-2zM440 967h1v1h-1zM440 987h1v1h-1zM440 968h1v19h-1zM441 987h1v1h-1zM442 967h6v1h-6zM442 987h6v1h-6zM442 968h1v19h-1zM447 968h1v19h-1zM448 967h1v1h-1zM449 967h2v1h-2zM449 987h2v1h-2zM449 968h2v19h-2zM451 967h1v1h-1zM452 967h1v1h-1zM452 987h1v1h-1zM452 968h1v19h-1zM453 987h1v1h-1zM454 967h6v1h-6zM454 987h6v1h-6zM454 968h1v19h-1zM459 968h1v19h-1zM460 987h1v1h-1zM461 967h3v1h-3zM461 987h3v1h-3zM461 968h1v19h-1zM463 968h1v19h-1zM464 987h1v1h-1zM465 967h4v1h-4zM465 987h4v1h-4zM465 968h1v19h-1zM468 968h1v19h-1zM469 987h1v1h-1zM470 967h7v1h-7zM470 987h7v1h-7zM470 968h1v19h-1zM476 968h1v19h-1zM477 987h2v1h-2zM479 967h6v1h-6zM479 987h6v1h-6zM479 968h1v19h-1zM484 968h1v19h-1zM485 967h1v1h-1zM486 967h7v1h-7zM486 987h7v1h-7zM486 968h1v19h-1zM492 968h1v19h-1zM493 987h1v1h-1zM494 967h2v1h-2zM494 987h2v1h-2zM494 968h2v19h-2zM496 967h2v1h-2zM498 967h11v1h-11zM498 987h11v1h-11zM498 968h1v19h-1zM508 968h1v19h-1zM509 967h1v1h-1zM510 967h11v1h-11zM510 987h11v1h-11zM510 968h1v19h-1zM520 968h1v19h-1zM521 987h1v1h-1zM522 967h1v1h-1zM522 987h1v1h-1zM522 968h1v19h-1zM523 967h1v1h-1zM524 967h13v1h-13zM524 987h13v1h-13zM524 968h1v19h-1zM536 968h1v19h-1zM537 967h1v1h-1zM538 967h1v1h-1zM538 987h1v1h-1zM538 968h1v19h-1zM539 967h1v1h-1zM540 967h11v1h-11zM540 987h11v1h-11zM540 968h1v19h-1zM550 968h1v19h-1zM551 967h1v1h-1zM552 967h4v1h-4zM552 987h4v1h-4zM552 968h1v19h-1zM555 968h1v19h-1zM556 967h1v1h-1zM557 967h1v1h-1zM557 987h1v1h-1zM557 968h1v19h-1zM558 967h1v1h-1zM559 967h4v1h-4zM559 987h4v1h-4zM559 968h1v19h-1zM562 968h1v19h-1zM563 967h1v1h-1zM564 967h7v1h-7zM564 987h7v1h-7zM564 968h1v19h-1zM570 968h1v19h-1zM571 987h2v1h-2zM573 967h5v1h-5zM573 987h5v1h-5zM573 968h1v19h-1zM577 968h1v19h-1zM578 967h2v1h-2zM580 967h7v1h-7zM580 987h7v1h-7zM580 968h1v19h-1zM586 968h1v19h-1zM587 987h3v1h-3zM590 967h1v1h-1zM590 987h1v1h-1zM590 968h1v19h-1zM591 967h1v1h-1zM592 967h1v1h-1zM592 987h1v1h-1zM592 968h1v19h-1zM593 967h1v1h-1zM594 967h12v1h-12zM594 987h12v1h-12zM594 968h1v19h-1zM605 968h1v19h-1zM606 967h1v1h-1zM607 967h10v1h-10zM607 987h10v1h-10zM607 968h1v19h-1zM616 968h1v19h-1zM617 967h1v1h-1zM618 967h4v1h-4zM618 987h4v1h-4zM618 968h1v19h-1zM621 968h1v19h-1zM622 967h1v1h-1zM623 967h5v1h-5zM623 987h5v1h-5zM623 968h1v19h-1zM627 968h1v19h-1zM628 987h1v1h-1zM629 967h8v1h-8zM629 987h8v1h-8zM629 968h1v19h-1zM636 968h1v19h-1zM637 967h1v1h-1zM638 967h1v1h-1zM638 987h1v1h-1zM638 968h1v19h-1zM639 967h1v1h-1zM640 967h4v1h-4zM640 987h4v1h-4zM640 968h1v19h-1zM643 968h1v19h-1zM644 987h1v1h-1zM645 967h1v1h-1zM645 987h1v1h-1zM645 968h1v19h-1zM646 987h1v1h-1zM647 967h2v1h-2zM647 987h2v1h-2zM647 968h2v19h-2zM649 987h1v1h-1zM650 967h6v1h-6zM650 987h6v1h-6zM650 968h1v19h-1zM655 968h1v19h-1zM656 987h1v1h-1zM657 967h4v1h-4zM657 987h4v1h-4zM657 968h1v19h-1zM660 968h1v19h-1zM661 987h1v1h-1zM662 967h1v1h-1zM662 987h1v1h-1zM662 968h1v19h-1zM663 967h1v1h-1zM664 967h1v1h-1zM664 987h1v1h-1zM664 968h1v19h-1zM665 987h1v1h-1zM666 967h4v1h-4zM666 987h4v1h-4zM666 968h1v19h-1zM669 968h1v19h-1zM670 967h1v1h-1zM671 967h15v1h-15zM671 987h15v1h-15zM671 968h1v19h-1zM685 968h1v19h-1zM686 967h1v1h-1zM687 967h22v1h-22zM687 987h22v1h-22zM687 968h1v19h-1zM708 968h1v19h-1zM709 967h1v1h-1zM710 967h12v1h-12zM710 987h12v1h-12zM710 968h1v19h-1zM721 968h1v19h-1zM722 967h1v1h-1zM723 967h8v1h-8zM723 987h8v1h-8zM723 968h1v19h-1zM730 968h1v19h-1zM731 987h1v1h-1zM732 967h12v1h-12zM732 987h12v1h-12zM732 968h1v19h-1zM743 968h1v19h-1zM744 987h3v1h-3zM747 967h1v1h-1zM747 987h1v1h-1zM747 968h1v19h-1zM748 967h1v1h-1zM749 967h4v1h-4zM749 987h4v1h-4zM749 968h1v19h-1zM752 968h1v19h-1zM753 987h1v1h-1zM754 967h2v1h-2zM754 987h2v1h-2zM754 968h2v19h-2zM756 967h1v1h-1zM757 967h7v1h-7zM757 987h7v1h-7zM757 968h1v19h-1zM763 968h1v19h-1zM764 967h1v1h-1zM765 967h2v1h-2zM765 987h2v1h-2zM765 968h2v19h-2zM767 987h2v1h-2zM769 967h6v1h-6zM769 987h6v1h-6zM769 968h1v19h-1zM774 968h1v19h-1zM775 967h1v1h-1zM776 967h7v1h-7zM776 987h7v1h-7zM776 968h1v19h-1zM782 968h1v19h-1zM783 987h1v1h-1zM784 967h8v1h-8zM784 987h8v1h-8zM784 968h1v19h-1zM791 968h1v19h-1zM792 987h1v1h-1zM793 967h4v1h-4zM793 987h4v1h-4zM793 968h1v19h-1zM796 968h1v19h-1zM797 987h3v1h-3z"/><path fill="#429298" d="M304 968h2v19h-2zM312 968h3v19h-3zM318 968h10v19h-10zM342 968h6v19h-6zM351 968h1v19h-1zM355 968h1v19h-1zM359 968h5v19h-5zM367 968h2v19h-2zM385 968h4v19h-4zM392 968h5v19h-5zM400 968h3v19h-3zM410 968h5v19h-5zM418 968h2v19h-2zM425 968h2v19h-2zM431 968h2v19h-2zM436 968h1v19h-1zM443 968h4v19h-4zM455 968h4v19h-4zM462 968h1v19h-1zM466 968h2v19h-2zM471 968h5v19h-5zM480 968h4v19h-4zM487 968h5v19h-5zM499 968h9v19h-9zM511 968h9v19h-9zM525 968h11v19h-11zM541 968h9v19h-9zM553 968h2v19h-2zM560 968h2v19h-2zM565 968h5v19h-5zM574 968h3v19h-3zM581 968h5v19h-5zM595 968h10v19h-10zM608 968h8v19h-8zM619 968h2v19h-2zM624 968h3v19h-3zM630 968h6v19h-6zM641 968h2v19h-2zM651 968h4v19h-4zM658 968h2v19h-2zM667 968h2v19h-2zM672 968h13v19h-13zM688 968h20v19h-20zM711 968h10v19h-10zM724 968h6v19h-6zM733 968h10v19h-10zM750 968h2v19h-2zM758 968h5v19h-5zM770 968h4v19h-4zM777 968h5v19h-5zM785 968h6v19h-6zM794 968h2v19h-2z"/>
<path fill="#45a2a8" d="M303 992h4v1h-4zM303 1012h4v1h-4zM303 993h1v19h-1zM306 993h1v19h-1zM307 1012h1v1h-1zM308 992h3v1h-3zM308 1012h3v1h-3zM308 993h1v19h-1zM310 993h1v19h-1zM311 1012h1v1h-1zM312 992h8v1h-8zM312 1012h8v1h-8zM312 993h1v19h-1zM319 993h1v19h-1zM320 1012h1v1h-1zM321 992h11v1h-11zM321 1012h11v1h-11zM321 993h1v19h-1zM331 993h1v19h-1zM332 1012h1v1h-1zM333 992h1v1h-1zM333 1012h1v1h-1zM333 993h1v19h-1zM334 992h1v1h-1zM335 992h1v1h-1zM335 1012h1v1h-1zM335 993h1v19h-1zM336 1012h1v1h-1zM337 992h1v1h-1zM337 1012h1v1h-1zM337 993h1v19h-1zM338 1012h1v1h-1zM339 992h3v1h-3zM339 1012h3v1h-3zM339 993h1v19h-1zM341 993h1v19h-1zM342 992h1v1h-1zM343 992h1v1h-1zM343 1012h1v1h-1zM343 993h1v19h-1zM344 992h1v1h-1zM345 992h8v1h-8zM345 1012h8v1h-8zM345 993h1v19h-1zM352 993h1v19h-1zM353 1012h1v1h-1zM354 992h1v1h-1zM354 1012h1v1h-1zM354 993h1v19h-1zM355 992h1v1h-1zM356 992h1v1h-1zM356 1012h1v1h-1zM356 993h1v19h-1zM357 1012h1v1h-1zM358 992h8v1h-8zM358 1012h8v1h-8zM358 993h1v19h-1zM365 993h1v19h-1zM366 992h1v1h-1zM367 992h5v1h-5zM367 1012h5v1h-5zM367 993h1v19h-1zM371 993h1v19h-1zM372 992h1v1h-1zM373 992h8v1h-8zM373 1012h8v1h-8zM373 993h1v19h-1zM380 993h1v19h-1zM381 1012h1v1h-1zM382 992h6v1h-6zM382 1012h6v1h-6zM382 993h1v19h-1zM387 993h1v19h-1zM388 1012h1v1h-1zM389 992h2v1h-2zM389 1012h2v1h-2zM389 993h2v19h-2zM391 992h2v1h-2zM393 992h2v1h-2zM393 1012h2v1h-2zM393 993h2v19h-2zM395 992h1v1h-1zM396 992h6v1h-6zM396 1012h6v1h-6zM396 993h1v19h-1zM401 993h1v19h-1zM402 992h1v1h-1zM403 992h2v1h-2zM403 1012h2v1h-2zM403 993h2v19h-2zM405 1012h1v1h-1zM406 992h3v1h-3zM406 1012h3v1h-3zM406 993h1v19h-1zM408 993h1v19h-1zM409 1012h1v1h-1zM410 992h1v1h-1zM410 1012h1v1h-1zM410 993h1v19h-1zM411 992h1v1h-1zM412 992h4v1h-4zM412 1012h4v1h-4zM412 993h1v19h-1zM415 993h1v19h-1zM416 992h1v1h-1zM417 992h7v1h-7zM417 1012h7v1h-7zM417 993h1v19h-1zM423 993h1v19h-1zM424 1012h1v1h-1zM425 992h2v1h-2zM425 1012h2v1h-2zM425 993h2v19h-2zM427 1012h1v1h-1zM428 992h3v1h-3zM428 1012h3v1h-3zM428 993h1v19h-1zM430 993h1v19h-1zM431 992h1v1h-1zM432 992h1v1h-1zM432 1012h1v1h-1zM432 993h1v19h-1zM433 992h1v1h-1zM434 992h4v1h-4zM434 1012h4v1h-4zM434 993h1v19h-1zM437 993h1v19h-1zM438 1012h1v1h-1zM439 992h1v1h-1zM439 1012h1v1h-1zM439 993h1v19h-1zM440 1012h1v1h-1zM441 992h2v1h-2zM441 1012h2v1h-2zM441 993h2v19h-2zM443 992h2v1h-2zM445 992h4v1h-4zM445 1012h4v1h-4zM445 993h1v19h-1zM448 993h1v19h-1zM449 992h2v1h-2zM451 992h5v1h-5zM451 1012h5v1h-5zM451 993h1v19h-1zM455 993h1v19h-1zM456 992h1v1h-1zM457 992h9v1h-9zM457 1012h9v1h-9zM457 993h1v19h-1zM465 993h1v19h-1zM466 1012h1v1h-1zM467 992h2v1h-2zM467 1012h2v1h-2zM467 993h2v19h-2zM469 1012h1v1h-1zM470 992h1v1h-1zM470 1012h1v1h-1zM470 993h1v19h-1zM471 992h1v1h-1zM472 992h1v1h-1zM472 1012h1v1h-1zM472 993h1v19h-1zM473 1012h1v1h-1zM474 992h7v1h-7zM474 1012h7v1h-7zM474 993h1v19h-1zM480 993h1v19h-1zM481 1012h1v1h-1zM482 992h6v1h-6zM482 1012h6v1h-6zM482 993h1v19h-1zM487 993h1v19h-1zM488 1012h1v1h-1zM489 992h3v1h-3zM489 1012h3v1h-3zM489 993h1v19h-1zM491 993h1v19h-1zM492 992h1v1h-1zM493 992h5v1h-5zM493 1012h5v1h-5zM493 993h1v19h-1zM497 993h1v19h-1zM498 1012h1v1h-1zM499 992h4v1h-4zM499 1012h4v1h-4zM499 993h1v19h-1zM502 993h1v19h-1zM503 992h1v1h-1zM504 992h2v1h-2zM504 1012h2v1h-2zM504 993h2v19h-2zM506 1012h1v1h-1zM507 992h1v1h-1zM507 1012h1v1h-1zM507 993h1v19h-1zM508 992h1v1h-1zM509 992h5v1h-5zM509 1012h5v1h-5zM509 993h1v19h-1zM513 993h1v19h-1zM514 992h2v1h-2zM516 992h9v1h-9zM516 1012h9v1h-9zM516 993h1v19h-1zM524 993h1v19h-1zM525 992h1v1h-1zM526 992h4v1h-4zM526 1012h4v1h-4zM526 993h1v19h-1zM529 993h1v19h-1zM530 992h1v1h-1zM531 992h2v1h-2zM531 1012h2v1h-2zM531 993h2v19h-2zM533 992h1v1h-1zM534 992h3v1h-3zM534 1012h3v1h-3zM534 993h1v19h-1zM536 993h1v19h-1zM537 1012h1v1h-1zM538 992h1v1h-1zM538 1012h1v1h-1zM538 993h1v19h-1zM539 992h1v1h-1zM540 992h13v1h-13zM540 1012h13v1h-13zM540 993h1v19h-1zM552 993h1v19h-1zM553 992h1v1h-1zM554 992h3v1h-3zM554 1012h3v1h-3zM554 993h1v19h-1zM556 993h1v19h-1zM557 992h1v1h-1zM558 992h7v1h-7zM558 1012h7v1h-7zM558 993h1v19h-1zM564 993h1v19h-1zM565 992h1v1h-1zM566 992h8v1h-8zM566 1012h8v1h-8zM566 993h1v19h-1zM573 993h1v19h-1zM574 1012h1v1h-1zM575 992h1v1h-1zM575 1012h1v1h-1zM575 993h1v19h-1zM576 992h1v1h-1zM577 992h2v1h-2zM577 1012h2v1h-2zM577 993h2v19h-2zM579 1012h1v1h-1zM580 992h2v1h-2zM580 1012h2v1h-2zM580 993h2v19h-2zM582 992h2v1h-2zM584 992h13v1h-13zM584 1012h13v1h-13zM584 993h1v19h-1zM596 993h1v19h-1zM597 1012h1v1h-1zM598 992h3v1h-3zM598 1012h3v1h-3zM598 993h1v19h-1zM600 993h1v19h-1zM601 1012h1v1h-1zM602 992h9v1h-9zM602 1012h9v1h-9zM602 993h1v19h-1zM610 993h1v19h-1zM611 1012h1v1h-1zM612 992h4v1h-4zM612 1012h4v1h-4zM612 993h1v19h-1zM615 993h1v19h-1zM616 1012h1v1h-1zM617 992h13v1h-13zM617 1012h13v1h-13zM617 993h1v19h-1zM629 993h1v19h-1zM630 1012h1v1h-1zM631 992h2v1h-2zM631 1012h2v1h-2zM631 993h2v19h-2zM633 992h1v1h-1zM634 992h7v1h-7zM634 1012h7v1h-7zM634 993h1v19h-1zM640 993h1v19h-1zM641 1012h1v1h-1zM642 992h1v1h-1zM642 1012h1v1h-1zM642 993h1v19h-1zM643 1012h1v1h-1zM644 992h2v1h-2zM644 1012h2v1h-2zM644 993h2v19h-2zM646 1012h2v1h-2zM648 992h2v1h-2zM648 1012h2v1h-2zM648 993h2v19h-2zM650 992h1v1h-1zM651 992h8v1h-8zM651 1012h8v1h-8zM651 993h1v19h-1zM658 993h1v19h-1zM659 1012h1v1h-1zM660 992h1v1h-1zM660 1012h1v1h-1zM660 993h1v19h-1zM661 1012h1v1h-1zM662 992h3v1h-3zM662 1012h3v1h-3zM662 993h1v19h-1zM664 993h1v19h-1zM665 1012h1v1h-1zM666 992h2v1h-2zM666 1012h2v1h-2zM666 993h2v19h-2zM668 1012h2v1h-2zM670 992h11v1h-11zM670 1012h11v1h-11zM670 993h1v19h-1zM680 993h1v19h-1zM681 1012h1v1h-1zM682 992h3v1h-3zM682 1012h3v1h-3zM682 993h1v19h-1zM684 993h1v19h-1zM685 992h1v1h-1zM686 992h5v1h-5zM686 1012h5v1h-5zM686 993h1v19h-1zM690 993h1v19h-1zM691 1012h1v1h-1zM692 992h8v1h-8zM692 1012h8v1h-8zM692 993h1v19h-1zM699 993h1v19h-1zM700 1012h1v1h-1zM701 992h1v1h-1zM701 1012h1v1h-1zM701 993h1v19h-1zM702 992h1v1h-1zM703 992h3v1h-3zM703 1012h3v1h-3zM703 993h1v19h-1zM705 993h1v19h-1zM706 1012h1v1h-1zM707 992h5v1h-5zM707 1012h5v1h-5zM707 993h1v19h-1zM711 993h1v19h-1zM712 992h1v1h-1zM713 992h11v1h-11zM713 1012h11v1h-11zM713 993h1v19h-1zM723 993h1v19h-1zM724 992h1v1h-1zM725 992h1v1h-1zM725 1012h1v1h-1zM725 993h1v19h-1zM726 992h1v1h-1zM727 992h15v1h-15zM727 1012h15v1h-15zM727 993h1v19h-1zM741 993h1v19h-1zM742 992h1v1h-1zM743 992h4v1h-4zM743 1012h4v1h-4zM743 993h1v19h-1zM746 993h1v19h-1zM747 992h1v1h-1zM748 992h3v1h-3zM748 1012h3v1h-3zM748 993h1v19h-1zM750 993h1v19h-1zM751 992h1v1h-1zM752 992h9v1h-9zM752 1012h9v1h-9zM752 993h1v19h-1zM760 993h1v19h-1zM761 1012h1v1h-1zM762 992h2v1h-2zM762 1012h2v1h-2zM762 993h2v19h-2zM764 992h1v1h-1zM765 992h8v1h-8zM765 1012h8v1h-8zM765 993h1v19h-1zM772 993h1v19h-1zM773 1012h1v1h-1zM774 992h1v1h-1zM774 1012h1v1h-1zM774 993h1v19h-1zM775 992h1v1h-1zM776 992h16v1h-16zM776 1012h16v1h-16zM776 993h1v19h-1zM791 993h1v19h-1zM792 1012h1v1h-1zM793 992h1v1h-1zM793 1012h1v1h-1zM793 993h1v19h-1zM794 992h1v1h-1zM795 992h5v1h-5zM795 1012h5v1h-5zM795 993h1v19h-1zM799 993h1v19h-1z"/><path fill="#429298" d="M304 993h2v19h-2zM309 993h1v19h-1zM313 993h6v19h-6zM322 993h9v19h-9zM340 993h1v19h-1zM346 993h6v19h-6zM359 993h6v19h-6zM368 993h3v19h-3zM374 993h6v19h-6zM383 993h4v19h-4zM397 993h4v19h-4zM407 993h1v19h-1zM413 993h2v19h-2zM418 993h5v19h-5zM429 993h1v19h-1zM435 993h2v19h-2zM446 993h2v19h-2zM452 993h3v19h-3zM458 993h7v19h-7zM475 993h5v19h-5zM483 993h4v19h-4zM490 993h1v19h-1zM494 993h3v19h-3zM500 993h2v19h-2zM510 993h3v19h-3zM517 993h7v19h-7zM527 993h2v19h-2zM535 993h1v19h-1zM541 993h11v19h-11zM555 993h1v19h-1zM559 993h5v19h-5zM567 993h6v19h-6zM585 993h11v19h-11zM599 993h1v19h-1zM603 993h7v19h-7zM613 993h2v19h-2zM618 993h11v19h-11zM635 993h5v19h-5zM652 993h6v19h-6zM663 993h1v19h-1zM671 993h9v19h-9zM683 993h1v19h-1zM687 993h3v19h-3zM693 993h6v19h-6zM704 993h1v19h-1zM708 993h3v19h-3zM714 993h9v19h-9zM728 993h13v19h-13zM744 993h2v19h-2zM749 993h1v19h-1zM753 993h7v19h-7zM766 993h6v19h-6zM777 993h14v19h-14zM796 993h3v19h-3z"/>
<path fill="#45a2a8" d="M303 1017h2v1h-2zM303 1037h2v1h-2zM303 1018h2v19h-2zM305 1037h1v1h-1zM306 1017h3v1h-3zM306 1037h3v1h-3zM306 1018h1v19h-1zM308 1018h1v19h-1zM309 1037h1v1h-1zM310 1017h1v1h-1zM310 1037h1v1h-1zM310 1018h1v19h-1zM311 1037h1v1h-1zM312 1017h13v1h-13zM312 1037h13v1h-13zM312 1018h1v19h-1zM324 1018h1v19h-1zM325 1037h1v1h-1zM326 1017h3v1h-3zM326 1037h3v1h-3zM326 1018h1v19h-1zM328 1018h1v19h-1zM329 1017h1v1h-1zM330 1017h1v1h-1zM330 1037h1v1h-1zM330 1018h1v19h-1zM331 1017h1v1h-1zM332 1017h1v1h-1zM332 1037h1v1h-1zM332 1018h1v19h-1zM333 1037h1v1h-1zM334 1017h26v1h-26zM334 1037h26v1h-26zM334 1018h1v19h-1zM359 1018h1v19h-1zM360 1037h1v1h-1zM361 1017h1v1h-1zM361 1037h1v1h-1zM361 1018h1v19h-1zM362 1017h1v1h-1zM363 1017h1v1h-1zM363 1037h1v1h-1zM363 1018h1v19h-1zM364 1017h1v1h-1zM365 1017h6v1h-6zM365 1037h6v1h-6zM365 1018h1v19h-1zM370 1018h1v19h-1zM371 1017h1v1h-1zM372 1017h1v1h-1zM372 1037h1v1h-1zM372 1018h1v19h-1zM373 1037h1v1h-1zM374 1017h2v1h-2zM374 1037h2v1h-2zM374 1018h2v19h-2zM376 1037h1v1h-1zM377 1017h2v1h-2zM377 1037h2v1h-2zM377 1018h2v19h-2zM379 1017h1v1h-1zM380 1017h8v1h-8zM380 1037h8v1h-8zM380 1018h1v19h-1zM387 1018h1v19h-1zM388 1017h1v1h-1zM389 1017h16v1h-16zM389 1037h16v1h-16zM389 1018h1v19h-1zM404 1018h1v19h-1zM405 1017h2v1h-2zM407 1017h11v1h-11zM407 1037h11v1h-11zM407 1018h1v19h-1zM417 1018h1v19h-1zM418 1037h1v1h-1zM419 1017h1v1h-1zM419 1037h1v1h-1zM419 1018h1v19h-1zM420 1037h2v1h-2zM422 1017h6v1h-6zM422 1037h6v1h-6zM422 1018h1v19h-1zM427 1018h1v19h-1zM428 1017h1v1h-1zM429 1017h6v1h-6zM429 1037h6v1h-6zM429 1018h1v19h-1zM434 1018h1v19h-1zM435 1017h1v1h-1zM436 1017h6v1h-6zM436 1037h6v1h-6zM436 1018h1v19h-1zM441 1018h1v19h-1zM442 1037h1v1h-1zM443 1017h2v1h-2zM443 1037h2v1h-2zM443 1018h2v19h-2zM445 1017h1v1h-1zM446 1017h6v1h-6zM446 1037h6v1h-6zM446 1018h1v19h-1zM451 1018h1v19h-1zM452 1037h1v1h-1zM453 1017h3v1h-3zM453 1037h3v1h-3zM453 1018h1v19h-1zM455 1018h1v19h-1zM456 1037h2v1h-2zM458 1017h8v1h-8zM458 1037h8v1h-8zM458 1018h1v19h-1zM465 1018h1v19h-1zM466 1017h1v1h-1zM467 1017h2v1h-2zM467 1037h2v1h-2zM467 1018h2v19h-2zM469 1037h2v1h-2zM471 1017h10v1h-10zM471 1037h10v1h-10zM471 1018h1v19h-1zM480 1018h1v19h-1zM481 1037h1v1h-1zM482 1017h19v1h-19zM482 1037h19v1h-19zM482 1018h1v19h-1zM500 1018h1v19h-1zM501 1017h2v1h-2zM503 1017h3v1h-3zM503 1037h3v1h-3zM503 1018h1v19h-1zM505 1018h1v19h-1zM506 1017h1v1h-1zM507 1017h1v1h-1zM507 1037h1v1h-1zM507 1018h1v19h-1zM508 1037h1v1h-1zM509 1017h10v1h-10zM509 1037h10v1h-10zM509 1018h1v19h-1zM518 1018h1v19h-1zM519 1037h1v1h-1zM520 1017h5v1h-5zM520 1037h5v1h-5zM520 1018h1v19h-1zM524 1018h1v19h-1zM525 1017h1v1h-1zM526 1017h8v1h-8zM526 1037h8v1h-8zM526 1018h1v19h-1zM533 1018h1v19h-1zM534 1037h1v1h-1zM535 1017h8v1h-8zM535 1037h8v1h-8zM535 1018h1v19h-1zM542 1018h1v19h-1zM543 1037h2v1h-2zM545 1017h7v1h-7zM545 1037h7v1h-7zM545 1018h1v19h-1zM551 1018h1v19h-1zM552 1037h1v1h-1zM553 1017h1v1h-1zM553 1037h1v1h-1zM553 1018h1v19h-1zM554 1017h1v1h-1zM555 1017h3v1h-3zM555 1037h3v1h-3zM555 1018h1v19h-1zM557 1018h1v19h-1zM558 1037h3v1h-3zM561 1017h3v1h-3zM561 1037h3v1h-3zM561 1018h1v19h-1zM563 1018h1v19h-1zM564 1017h2v1h-2zM566 1017h15v1h-15zM566 1037h15v1h-15zM566 1018h1v19h-1zM580 1018h1v19h-1zM581 1017h1v1h-1zM582 1017h11v1h-11zM582 1037h11v1h-11zM582 1018h1v19h-1zM592 1018h1v19h-1zM593 1017h1v1h-1zM594 1017h1v1h-1zM594 1037h1v1h-1zM594 1018h1v19h-1zM595 1017h1v1h-1zM596 1017h3v1h-3zM596 1037h3v1h-3zM596 1018h1v19h-1zM598 1018h1v19h-1zM599 1017h2v1h-2zM601 1017h11v1h-11zM601 1037h11v1h-11zM601 1018h1v19h-1zM611 1018h1v19h-1zM612 1017h2v1h-2zM614 1017h3v1h-3zM614 1037h3v1h-3zM614 1018h1v19h-1zM616 1018h1v19h-1zM617 1017h1v1h-1zM618 1017h2v1h-2zM618 1037h2v1h-2zM618 1018h2v19h-2zM620 1017h1v1h-1zM621 1017h7v1h-7zM621 1037h7v1h-7zM621 1018h1v19h-1zM627 1018h1v19h-1zM628 1037h3v1h-3zM631 1017h23v1h-23zM631 1037h23v1h-23zM631 1018h1v19h-1zM653 1018h1v19h-1zM654 1017h1v1h-1zM655 1017h4v1h-4zM655 1037h4v1h-4zM655 1018h1v19h-1zM658 1018h1v19h-1zM659 1037h1v1h-1zM660 1017h2v1h-2zM660 1037h2v1h-2zM660 1018h2v19h-2zM662 1017h2v1h-2zM664 1017h11v1h-11zM664 1037h11v1h-11zM664 1018h1v19h-1zM674 1018h1v19h-1zM675 1017h1v1h-1zM676 1017h2v1h-2zM676 1037h2v1h-2zM676 1018h2v19h-2zM678 1017h1v1h-1zM679 1017h17v1h-17zM679 1037h17v1h-17zM679 1018h1v19h-1zM695 1018h1v19h-1zM696 1037h1v1h-1zM697 1017h5v1h-5zM697 1037h5v1h-5zM697 1018h1v19h-1zM701 1018h1v19h-1zM702 1037h1v1h-1zM703 1017h11v1h-11zM703 1037h11v1h-11zM703 1018h1v19h-1zM713 1018h1v19h-1zM714 1017h1v1h-1zM715 1017h5v1h-5zM715 1037h5v1h-5zM715 1018h1v19h-1zM719 1018h1v19h-1zM720 1017h1v1h-1zM721 1017h3v1h-3zM721 1037h3v1h-3zM721 1018h1v19h-1zM723 1018h1v19h-1zM724 1017h1v1h-1zM725 1017h1v1h-1zM725 1037h1v1h-1zM725 1018h1v19h-1zM726 1037h3v1h-3zM729 1017h2v1h-2zM729 1037h2v1h-2zM729 1018h2v19h-2zM731 1017h1v1h-1zM732 1017h5v1h-5zM732 1037h5v1h-5zM732 1018h1v19h-1zM736 1018h1v19h-1zM737 1017h1v1h-1zM738 1017h2v1h-2zM738 1037h2v1h-2zM738 1018h2v19h-2zM740 1037h1v1h-1zM741 1017h1v1h-1zM741 1037h1v1h-1zM741 1018h1v19h-1zM742 1037h1v1h-1zM743 1017h1v1h-1zM743 1037h1v1h-1zM743 1018h1v19h-1zM744 1017h1v1h-1zM745 1017h1v1h-1zM745 1037h1v1h-1zM745 1018h1v19h-1zM746 1017h1v1h-1zM747 1017h16v1h-16zM747 1037h16v1h-16zM747 1018h1v19h-1zM762 1018h1v19h-1zM763 1037h1v1h-1zM764 1017h3v1h-3zM764 1037h3v1h-3zM764 1018h1v19h-1zM766 1018h1v19h-1zM767 1037h2v1h-2zM769 1017h7v1h-7zM769 1037h7v1h-7zM769 1018h1v19h-1zM775 1018h1v19h-1zM776 1037h1v1h-1zM777 1017h6v1h-6zM777 1037h6v1h-6zM777 1018h1v19h-1zM782 1018h1v19h-1zM783 1037h1v1h-1zM784 1017h2v1h-2zM784 1037h2v1h-2zM784 1018h2v19h-2zM786 1017h1v1h-1zM787 1017h1v1h-1zM787 1037h1v1h-1zM787 1018h1v19h-1zM788 1037h1v1h-1zM789 1017h3v1h-3zM789 1037h3v1h-3zM789 1018h1v19h-1zM791 1018h1v19h-1zM792 1017h1v1h-1zM793 1017h7v1h-7zM793 1037h7v1h-7zM793 1018h1v19h-1zM799 1018h1v19h-1z"/><path fill="#429298" d="M307 1018h1v19h-1zM313 1018h11v19h-11zM327 1018h1v19h-1zM335 1018h24v19h-24zM366 1018h4v19h-4zM381 1018h6v19h-6zM390 1018h14v19h-14zM408 1018h9v19h-9zM423 1018h4v19h-4zM430 1018h4v19h-4zM437 1018h4v19h-4zM447 1018h4v19h-4zM454 1018h1v19h-1zM459 1018h6v19h-6zM472 1018h8v19h-8zM483 1018h17v19h-17zM504 1018h1v19h-1zM510 1018h8v19h-8zM521 1018h3v19h-3zM527 1018h6v19h-6zM536 1018h6v19h-6zM546 1018h5v19h-5zM556 1018h1v19h-1zM562 1018h1v19h-1zM567 1018h13v19h-13zM583 1018h9v19h-9zM597 1018h1v19h-1zM602 1018h9v19h-9zM615 1018h1v19h-1zM622 1018h5v19h-5zM632 1018h21v19h-21zM656 1018h2v19h-2zM665 1018h9v19h-9zM680 1018h15v19h-15zM698 1018h3v19h-3zM704 1018h9v19h-9zM716 1018h3v19h-3zM722 1018h1v19h-1zM733 1018h3v19h-3zM748 1018h14v19h-14zM765 1018h1v19h-1zM770 1018h5v19h-5zM778 1018h4v19h-4zM790 1018h1v19h-1zM794 1018h5v19h-5z"/>
<path fill="#45a2a8" d="M303 1042h2v1h-2zM303 1062h2v1h-2zM303 1043h2v19h-2zM305 1042h3v1h-3zM308 1042h8v1h-8zM308 1062h8v1h-8zM308 1043h1v19h-1zM315 1043h1v19h-1zM316 1062h1v1h-1zM317 1042h5v1h-5zM317 1062h5v1h-5zM317 1043h1v19h-1zM321 1043h1v19h-1zM322 1042h2v1h-2zM324 1042h1v1h-1zM324 1062h1v1h-1zM324 1043h1v19h-1zM325 1042h1v1h-1zM326 1042h10v1h-10zM326 1062h10v1h-10zM326 1043h1v19h-1zM335 1043h1v19h-1zM336 1062h1v1h-1zM337 1042h7v1h-7zM337 1062h7v1h-7zM337 1043h1v19h-1zM343 1043h1v19h-1zM344 1042h1v1h-1zM345 1042h11v1h-11zM345 1062h11v1h-11zM345 1043h1v19h-1zM355 1043h1v19h-1zM356 1062h2v1h-2zM358 1042h2v1h-2zM358 1062h2v1h-2zM358 1043h2v19h-2zM360 1062h1v1h-1zM361 1042h3v1h-3zM361 1062h3v1h-3zM361 1043h1v19h-1zM363 1043h1v19h-1zM364 1042h1v1h-1zM365 1042h5v1h-5zM365 1062h5v1h-5zM365 1043h1v19h-1zM369 1043h1v19h-1zM370 1062h1v1h-1zM371 1042h12v1h-12zM371 1062h12v1h-12zM371 1043h1v19h-1zM382 1043h1v19h-1zM383 1042h1v1h-1zM384 1042h4v1h-4zM384 1062h4v1h-4zM384 1043h1v19h-1zM387 1043h1v19h-1zM388 1042h1v1h-1zM389 1042h12v1h-12zM389 1062h12v1h-12zM389 1043h1v19h-1zM400 1043h1v19h-1zM401 1062h1v1h-1zM402 1042h3v1h-3zM402 1062h3v1h-3zM402 1043h1v19h-1zM404 1043h1v19h-1zM405 1042h1v1h-1zM406 1042h3v1h-3zM406 1062h3v1h-3zM406 1043h1v19h-1zM408 1043h1v19h-1zM409 1062h2v1h-2zM411 1042h9v1h-9zM411 1062h9v1h-9zM411 1043h1v19h-1zM419 1043h1v19h-1zM420 1042h1v1h-1zM421 1042h6v1h-6zM421 1062h6v1h-6zM421 1043h1v19h-1zM426 1043h1v19h-1zM427 1062h1v1h-1zM428 1042h1v1h-1zM428 1062h1v1h-1zM428 1043h1v19h-1zM429 1042h3v1h-3zM432 1042h2v1h-2zM432 1062h2v1h-2zM432 1043h2v19h-2zM434 1062h1v1h-1zM435 1042h4v1h-4zM435 1062h4v1h-4zM435 1043h1v19h-1zM438 1043h1v19h-1zM439 1042h1v1h-1zM440 1042h5v1h-5zM440 1062h5v1h-5zM440 1043h1v19h-1zM444 1043h1v19h-1zM445 1062h2v1h-2zM447 1042h2v1h-2zM447 1062h2v1h-2zM447 1043h2v19h-2zM449 1062h1v1h-1zM450 1042h6v1h-6zM450 1062h6v1h-6zM450 1043h1v19h-1zM455 1043h1v19h-1zM456 1042h1v1h-1zM457 1042h3v1h-3zM457 1062h3v1h-3zM457 1043h1v19h-1zM459 1043h1v19h-1zM460 1042h2v1h-2zM462 1042h9v1h-9zM462 1062h9v1h-9zM462 1043h1v19h-1zM470 1043h1v19h-1zM471 1062h1v1h-1zM472 1042h6v1h-6zM472 1062h6v1h-6zM472 1043h1v19h-1zM477 1043h1v19h-1zM478 1042h1v1h-1zM479 1042h2v1h-2zM479 1062h2v1h-2zM479 1043h2v19h-2zM481 1062h3v1h-3zM484 1042h11v1h-11zM484 1062h11v1h-11zM484 1043h1v19h-1zM494 1043h1v19h-1zM495 1042h1v1h-1zM496 1042h3v1h-3zM496 1062h3v1h-3zM496 1043h1v19h-1zM498 1043h1v19h-1zM499 1062h1v1h-1zM500 1042h10v1h-10zM500 1062h10v1h-10zM500 1043h1v19h-1zM509 1043h1v19h-1zM510 1042h1v1h-1zM511 1042h2v1h-2zM511 1062h2v1h-2zM511 1043h2v19h-2zM513 1062h1v1h-1zM514 1042h16v1h-16zM514 1062h16v1h-16zM514 1043h1v19h-1zM529 1043h1v19h-1zM530 1062h4v1h-4zM534 1042h2v1h-2zM534 1062h2v1h-2zM534 1043h2v19h-2zM536 1042h1v1h-1zM537 1042h3v1h-3zM537 1062h3v1h-3zM537 1043h1v19h-1zM539 1043h1v19h-1zM540 1062h1v1h-1zM541 1042h6v1h-6zM541 1062h6v1h-6zM541 1043h1v19h-1zM546 1043h1v19h-1zM547 1062h2v1h-2zM549 1042h3v1h-3zM549 1062h3v1h-3zM549 1043h1v19h-1zM551 1043h1v19h-1zM552 1062h3v1h-3zM555 1042h13v1h-13zM555 1062h13v1h-13zM555 1043h1v19h-1zM567 1043h1v19h-1zM568 1062h1v1h-1zM569 1042h7v1h-7zM569 1062h7v1h-7zM569 1043h1v19h-1zM575 1043h1v19h-1zM576 1042h1v1h-1zM577 1042h5v1h-5zM577 1062h5v1h-5zM577 1043h1v19h-1zM581 1043h1v19h-1zM582 1042h1v1h-1zM583 1042h4v1h-4zM583 1062h4v1h-4zM583 1043h1v19h-1zM586 1043h1v19h-1zM587 1062h1v1h-1zM588 1042h1v1h-1zM588 1062h1v1h-1zM588 1043h1v19h-1zM589 1062h1v1h-1zM590 1042h2v1h-2zM590 1062h2v1h-2zM590 1043h2v19h-2zM592 1062h2v1h-2zM594 1042h4v1h-4zM594 1062h4v1h-4zM594 1043h1v19h-1zM597 1043h1v19h-1zM598 1042h1v1h-1zM599 1042h6v1h-6zM599 1062h6v1h-6zM599 1043h1v19h-1zM604 1043h1v19h-1zM605 1062h1v1h-1zM606 1042h2v1h-2zM606 1062h2v1h-2zM606 1043h2v19h-2zM608 1042h2v1h-2zM610 1042h1v1h-1zM610 1062h1v1h-1zM610 1043h1v19h-1zM611 1062h1v1h-1zM612 1042h16v1h-16zM612 1062h16v1h-16zM612 1043h1v19h-1zM627 1043h1v19h-1zM628 1062h1v1h-1zM629 1042h8v1h-8zM629 1062h8v1h-8zM629 1043h1v19h-1zM636 1043h1v19h-1zM637 1042h1v1h-1zM638 1042h11v1h-11zM638 1062h11v1h-11zM638 1043h1v19h-1zM648 1043h1v19h-1zM649 1042h1v1h-1zM650 1042h3v1h-3zM650 1062h3v1h-3zM650 1043h1v19h-1zM652 1043h1v19h-1zM653 1042h1v1h-1zM654 1042h1v1h-1zM654 1062h1v1h-1zM654 1043h1v19h-1zM655 1062h1v1h-1zM656 1042h3v1h-3zM656 1062h3v1h-3zM656 1043h1v19h-1zM658 1043h1v19h-1zM659 1042h1v1h-1zM660 1042h5v1h-5zM660 1062h5v1h-5zM660 1043h1v19h-1zM664 1043h1v19h-1zM665 1042h1v1h-1zM666 1042h7v1h-7zM666 1062h7v1h-7zM666 1043h1v19h-1zM672 1043h1v19h-1zM673 1062h1v1h-1zM674 1042h1v1h-1zM674 1062h1v1h-1zM674 1043h1v19h-1zM675 1042h1v1h-1zM676 1042h2v1h-2zM676 1062h2v1h-2zM676 1043h2v19h-2zM678 1062h2v1h-2zM680 1042h7v1h-7zM680 1062h7v1h-7zM680 1043h1v19h-1zM686 1043h1v19h-1zM687 1062h1v1h-1zM688 1042h3v1h-3zM688 1062h3v1h-3zM688 1043h1v19h-1zM690 1043h1v19h-1zM691 1062h2v1h-2zM693 1042h7v1h-7zM693 1062h7v1h-7zM693 1043h1v19h-1zM699 1043h1v19h-1zM700 1042h1v1h-1zM701 1042h6v1h-6zM701 1062h6v1h-6zM701 1043h1v19h-1zM706 1043h1v19h-1zM707 1042h1v1h-1zM708 1042h4v1h-4zM708 1062h4v1h-4zM708 1043h1v19h-1zM711 1043h1v19h-1zM712 1062h1v1h-1zM713 1042h11v1h-11zM713 1062h11v1h-11zM713 1043h1v19h-1zM723 1043h1v19h-1zM724 1042h1v1h-1zM725 1042h1v1h-1zM725 1062h1v1h-1zM725 1043h1v19h-1zM726 1062h1v1h-1zM727 1042h2v1h-2zM727 1062h2v1h-2zM727 1043h2v19h-2zM729 1062h1v1h-1zM730 1042h1v1h-1zM730 1062h1v1h-1zM730 1043h1v19h-1zM731 1062h1v1h-1zM732 1042h6v1h-6zM732 1062h6v1h-6zM732 1043h1v19h-1zM737 1043h1v19h-1zM738 1042h1v1h-1zM739 1042h2v1h-2zM739 1062h2v1h-2zM739 1043h2v19h-2zM741 1042h1v1h-1zM742 1042h2v1h-2zM742 1062h2v1h-2zM742 1043h2v19h-2zM744 1042h1v1h-1zM745 1042h2v1h-2zM745 1062h2v1h-2zM745 1043h2v19h-2zM747 1042h1v1h-1zM748 1042h6v1h-6zM748 1062h6v1h-6zM748 1043h1v19h-1zM753 1043h1v19h-1zM754 1062h2v1h-2zM756 1042h3v1h-3zM756 1062h3v1h-3zM756 1043h1v19h-1zM758 1043h1v19h-1zM759 1042h1v1h-1zM760 1042h4v1h-4zM760 1062h4v1h-4zM760 1043h1v19h-1zM763 1043h1v19h-1zM764 1042h1v1h-1zM765 1042h10v1h-10zM765 1062h10v1h-10zM765 1043h1v19h-1zM774 1043h1v19h-1zM775 1062h3v1h-3zM778 1042h9v1h-9zM778 1062h9v1h-9zM778 1043h1v19h-1zM786 1043h1v19h-1zM787 1042h1v1h-1zM788 1042h6v1h-6zM788 1062h6v1h-6zM788 1043h1v19h-1zM793 1043h1v19h-1zM794 1042h1v1h-1zM795 1042h5v1h-5zM795 1062h5v1h-5zM795 1043h1v19h-1zM799 1043h1v19h-1z"/><path fill="#429298" d="M309 1043h6v19h-6zM318 1043h3v19h-3zM327 1043h8v19h-8zM338 1043h5v19h-5zM346 1043h9v19h-9zM362 1043h1v19h-1zM366 1043h3v19h-3zM372 1043h10v19h-10zM385 1043h2v19h-2zM390 1043h10v19h-10zM403 1043h1v19h-1zM407 1043h1v19h-1zM412 1043h7v19h-7zM422 1043h4v19h-4zM436 1043h2v19h-2zM441 1043h3v19h-3zM451 1043h4v19h-4zM458 1043h1v19h-1zM463 1043h7v19h-7zM473 1043h4v19h-4zM485 1043h9v19h-9zM497 1043h1v19h-1zM501 1043h8v19h-8zM515 1043h14v19h-14zM538 1043h1v19h-1zM542 1043h4v19h-4zM550 1043h1v19h-1zM556 1043h11v19h-11zM570 1043h5v19h-5zM578 1043h3v19h-3zM584 1043h2v19h-2zM595 1043h2v19h-2zM600 1043h4v19h-4zM613 1043h14v19h-14zM630 1043h6v19h-6zM639 1043h9v19h-9zM651 1043h1v19h-1zM657 1043h1v19h-1zM661 1043h3v19h-3zM667 1043h5v19h-5zM681 1043h5v19h-5zM689 1043h1v19h-1zM694 1043h5v19h-5zM702 1043h4v19h-4zM709 1043h2v19h-2zM714 1043h9v19h-9zM733 1043h4v19h-4zM749 1043h4v19h-4zM757 1043h1v19h-1zM761 1043h2v19h-2zM766 1043h8v19h-8zM779 1043h7v19h-7zM789 1043h4v19h-4zM796 1043h3v19h-3z"/>
<rect x="400" y="153" width="1" height="897" fill="#ffffff" fill-opacity="0.35"/>
<rect x="498" y="153" width="1" height="897" fill="#ffffff" fill-opacity="0.35"/>
<rect x="597" y="153" width="1" height="897" fill="#ffffff" fill-opacity="0.35"/>
<rect x="695" y="153" width="1" height="897" fill="#ffffff" fill-opacity="0.35"/>
<rect x="793" y="153" width="1" height="897" fill="#ffffff" fill-opacity="0.35"/>
<rect x="788" y="740" width="12" height="309" rx="6" fill="#ffffff" fill-opacity="0.5"/>
<rect x="788" y="153" width="12" height="605" rx="6" fill="#4b4b4b"/>
</g>
<rect x="302" y="1051" width="1" height="5" fill="#8a8a8a"/>
<rect x="321" y="1051" width="1" height="2" fill="#8a8a8a"/>
<rect x="341" y="1051" width="1" height="2" fill="#8a8a8a"/>
<rect x="361" y="1051" width="1" height="2" fill="#8a8a8a"/>
<rect x="380" y="1051" width="1" height="2" fill="#8a8a8a"/>
<rect x="400" y="1051" width="1" height="5" fill="#8a8a8a"/>
<rect x="420" y="1051" width="1" height="2" fill="#8a8a8a"/>
<rect x="439" y="1051" width="1" height="2" fill="#8a8a8a"/>
<rect x="459" y="1051" width="1" height="2" fill="#8a8a8a"/>
<rect x="479" y="1051" width="1" height="2" fill="#8a8a8a"/>
<rect x="498" y="1051" width="1" height="5" fill="#8a8a8a"/>
<rect x="518" y="1051" width="1" height="2" fill="#8a8a8a"/>
<rect x="538" y="1051" width="1" height="2" fill="#8a8a8a"/>
<rect x="557" y="1051" width="1" height="2" fill="#8a8a8a"/>
<rect x="577" y="1051" width="1" height="2" fill="#8a8a8a"/>
<rect x="597" y="1051" width="1" height="5" fill="#8a8a8a"/>
<rect x="616" y="1051" width="1" height="2" fill="#8a8a8a"/>
<rect x="636" y="1051" width="1" height="2" fill="#8a8a8a"/>
<rect x="656" y="1051" width="1" height="2" fill="#8a8a8a"/>
<rect x="675" y="1051" width="1" height="2" fill="#8a8a8a"/>
<rect x="695" y="1051" width="1" height="5" fill="#8a8a8a"/>
<rect x="715" y="1051" width="1" height="2" fill="#8a8a8a"/>
<rect x="734" y="1051" width="1" height="2" fill="#8a8a8a"/>
<rect x="754" y="1051" width="1" height="2" fill="#8a8a8a"/>
<rect x="774" y="1051" width="1" height="2" fill="#8a8a8a"/>
<rect x="793" y="1051" width="1" height="5" fill="#8a8a8a"/>
<text x="302.2" y="1065" text-anchor="middle" font-family="Liberation Sans" font-weight="bold" font-size="10" fill="#f0f0f0">0</text>
<text x="400.5" y="1065" text-anchor="middle" font-family="Liberation Sans" font-weight="bold" font-size="10" fill="#f0f0f0">500</text>
<text x="498.9" y="1065" text-anchor="middle" font-family="Liberation Sans" font-weight="bold" font-size="10" fill="#f0f0f0">1000</text>
<text x="597.2" y="1065" text-anchor="middle" font-family="Liberation Sans" font-weight="bold" font-size="10" fill="#f0f0f0">1500</text>
<text x="695.5" y="1065" text-anchor="middle" font-family="Liberation Sans" font-weight="bold" font-size="10" fill="#f0f0f0">2000</text>
<text x="793.9" y="1065" text-anchor="middle" font-family="Liberation Sans" font-weight="bold" font-size="10" fill="#f0f0f0">2500</text>
<rect x="301" y="153" width="2" height="919" fill="#dada2c"/>
</svg>
 <div class="t" style="left:0;top:1057px;width:197px;text-align:right;font-size:10px;color:#f2f2f2;font-weight:bold;transform:scaleX(0.95);transform-origin:197px 0">Sample</div>
 <div class="t" style="left:0;top:1073px;width:197px;text-align:right;font-size:12.5px;color:#f5f500;font-weight:bold;transform:scaleX(0.9);transform-origin:197px 0">Cursor 1</div>
 <div class="t" style="left:291px;top:1073px;font-size:12px;color:#f5f500;font-weight:bold">0</div>
 <div class="a" style="left:301px;top:1072px;width:14px;height:15px;border:1px solid #f5f500;background:#000"></div>
 <div class="t" style="left:306px;top:1074px;font-size:12px;color:#f5f500;font-weight:bold">0</div>
 <div class="a" style="left:0;top:0;width:301px;height:1050px;overflow:hidden"><div class="t sig" style="left:15px;top:159px;">Capture_Window</div>
<div class="t sig" style="left:15px;top:176px;">Trigger_Position</div>
<div class="t sig" style="left:15px;top:197px;">DACValidProbe</div>
<div class="t sig" style="left:15px;top:222px;font-weight:bold;color:#e0e0e0;transform:scaleX(0.96);transform-origin:0 0">ADCProbe</div>
<div class="t sig" style="left:15px;top:647px;">DACProbe</div>
<svg class="a" style="left:0;top:153px" width="20" height="520"><path d="M4 8L12.5 12.5L4 17Z" fill="#8a8a8a"/><path d="M4 70H13L8.5 79Z" fill="#b5b5b5"/><path d="M4 495.5H13L8.5 504.5Z" fill="#8a8a8a"/></svg>
<div class="t val" style="left:213px;top:161px;">0</div>
<div class="t val" style="left:213px;top:178px;">0</div>
<div class="t val" style="left:213px;top:198px;">1</div>
<div class="t val" style="left:213px;top:223px;font-weight:bold;color:#e8e8e8">39f</div>
<div class="t val" style="left:213px;top:648px;">20b</div>
<div class="t bit" style="left:37px;top:247px;">(15)</div>
<div class="t val" style="left:213px;top:248px;">0</div>
<div class="t bit" style="left:37px;top:272px;">(14)</div>
<div class="t val" style="left:213px;top:273px;">0</div>
<div class="t bit" style="left:37px;top:297px;">(13)</div>
<div class="t val" style="left:213px;top:298px;">0</div>
<div class="t bit" style="left:37px;top:322px;">(12)</div>
<div class="t val" style="left:213px;top:323px;">0</div>
<div class="t bit" style="left:37px;top:347px;">(11)</div>
<div class="t val" style="left:213px;top:348px;">0</div>
<div class="t bit" style="left:37px;top:372px;">(10)</div>
<div class="t val" style="left:213px;top:373px;">0</div>
<div class="t bit" style="left:37px;top:397px;">(9)</div>
<div class="t val" style="left:213px;top:398px;">1</div>
<div class="t bit" style="left:37px;top:422px;">(8)</div>
<div class="t val" style="left:213px;top:423px;">1</div>
<div class="t bit" style="left:37px;top:447px;">(7)</div>
<div class="t val" style="left:213px;top:448px;">1</div>
<div class="t bit" style="left:37px;top:472px;">(6)</div>
<div class="t val" style="left:213px;top:473px;">0</div>
<div class="t bit" style="left:37px;top:497px;">(5)</div>
<div class="t val" style="left:213px;top:498px;">0</div>
<div class="t bit" style="left:37px;top:522px;">(4)</div>
<div class="t val" style="left:213px;top:523px;">1</div>
<div class="t bit" style="left:37px;top:547px;">(3)</div>
<div class="t val" style="left:213px;top:548px;">1</div>
<div class="t bit" style="left:37px;top:572px;">(2)</div>
<div class="t val" style="left:213px;top:573px;">1</div>
<div class="t bit" style="left:37px;top:597px;">(1)</div>
<div class="t val" style="left:213px;top:598px;">1</div>
<div class="t bit" style="left:37px;top:622px;">(0)</div>
<div class="t val" style="left:213px;top:623px;">1</div>
<div class="t bit" style="left:37px;top:672px;">(15)</div>
<div class="t val" style="left:213px;top:673px;">0</div>
<div class="t bit" style="left:37px;top:697px;">(14)</div>
<div class="t val" style="left:213px;top:698px;">0</div>
<div class="t bit" style="left:37px;top:722px;">(13)</div>
<div class="t val" style="left:213px;top:723px;">0</div>
<div class="t bit" style="left:37px;top:747px;">(12)</div>
<div class="t val" style="left:213px;top:748px;">0</div>
<div class="t bit" style="left:37px;top:772px;">(11)</div>
<div class="t val" style="left:213px;top:773px;">0</div>
<div class="t bit" style="left:37px;top:797px;">(10)</div>
<div class="t val" style="left:213px;top:798px;">0</div>
<div class="t bit" style="left:37px;top:822px;">(9)</div>
<div class="t val" style="left:213px;top:823px;">1</div>
<div class="t bit" style="left:37px;top:847px;">(8)</div>
<div class="t val" style="left:213px;top:848px;">0</div>
<div class="t bit" style="left:37px;top:872px;">(7)</div>
<div class="t val" style="left:213px;top:873px;">0</div>
<div class="t bit" style="left:37px;top:897px;">(6)</div>
<div class="t val" style="left:213px;top:898px;">0</div>
<div class="t bit" style="left:37px;top:922px;">(5)</div>
<div class="t val" style="left:213px;top:923px;">0</div>
<div class="t bit" style="left:37px;top:947px;">(4)</div>
<div class="t val" style="left:213px;top:948px;">0</div>
<div class="t bit" style="left:37px;top:972px;">(3)</div>
<div class="t val" style="left:213px;top:973px;">1</div>
<div class="t bit" style="left:37px;top:997px;">(2)</div>
<div class="t val" style="left:213px;top:998px;">0</div>
<div class="t bit" style="left:37px;top:1022px;">(1)</div>
<div class="t val" style="left:213px;top:1023px;">1</div>
<div class="t bit" style="left:37px;top:1047px;">(0)</div>
<div class="t val" style="left:213px;top:1048px;">1</div>
<svg class="a" style="left:0;top:1px" width="40" height="1050">
<path d="M8.5 235V628" stroke="#9a9a9a" stroke-width="1"/>
<path d="M8 277.5H17" stroke="#9a9a9a"/>
<path d="M8 302.5H17" stroke="#9a9a9a"/>
<path d="M8 327.5H17" stroke="#9a9a9a"/>
<path d="M8 352.5H25" stroke="#9a9a9a"/>
<path d="M8 377.5H17" stroke="#9a9a9a"/>
<path d="M8 402.5H17" stroke="#9a9a9a"/>
<path d="M8 427.5H17" stroke="#9a9a9a"/>
<path d="M8 452.5H25" stroke="#9a9a9a"/>
<path d="M8 477.5H17" stroke="#9a9a9a"/>
<path d="M8 502.5H17" stroke="#9a9a9a"/>
<path d="M8 527.5H17" stroke="#9a9a9a"/>
<path d="M8 552.5H25" stroke="#9a9a9a"/>
<path d="M8 577.5H17" stroke="#9a9a9a"/>
<path d="M8 602.5H17" stroke="#9a9a9a"/>
<path d="M8 252.5H25" stroke="#9a9a9a"/>
<text x="10" y="250.5" font-family="Liberation Sans" font-size="8.5" fill="#9a9a9a">msb</text>
<path d="M8 627.5H17" stroke="#9a9a9a"/>
<text x="10" y="626" font-family="Liberation Sans" font-size="8.5" fill="#9a9a9a">lsb</text>
<path d="M8.5 660V1053" stroke="#9a9a9a" stroke-width="1"/>
<path d="M8 702.5H17" stroke="#9a9a9a"/>
<path d="M8 727.5H17" stroke="#9a9a9a"/>
<path d="M8 752.5H17" stroke="#9a9a9a"/>
<path d="M8 777.5H25" stroke="#9a9a9a"/>
<path d="M8 802.5H17" stroke="#9a9a9a"/>
<path d="M8 827.5H17" stroke="#9a9a9a"/>
<path d="M8 852.5H17" stroke="#9a9a9a"/>
<path d="M8 877.5H25" stroke="#9a9a9a"/>
<path d="M8 902.5H17" stroke="#9a9a9a"/>
<path d="M8 927.5H17" stroke="#9a9a9a"/>
<path d="M8 952.5H17" stroke="#9a9a9a"/>
<path d="M8 977.5H25" stroke="#9a9a9a"/>
<path d="M8 1002.5H17" stroke="#9a9a9a"/>
<path d="M8 1027.5H17" stroke="#9a9a9a"/>
<path d="M8 677.5H25" stroke="#9a9a9a"/>
<text x="10" y="675.5" font-family="Liberation Sans" font-size="8.5" fill="#9a9a9a">msb</text>
<path d="M8 1052.5H17" stroke="#9a9a9a"/>
<text x="10" y="1051" font-family="Liberation Sans" font-size="8.5" fill="#9a9a9a">lsb</text>
</svg></div>
 <div id="bd"></div>
</div>
</body></html>
